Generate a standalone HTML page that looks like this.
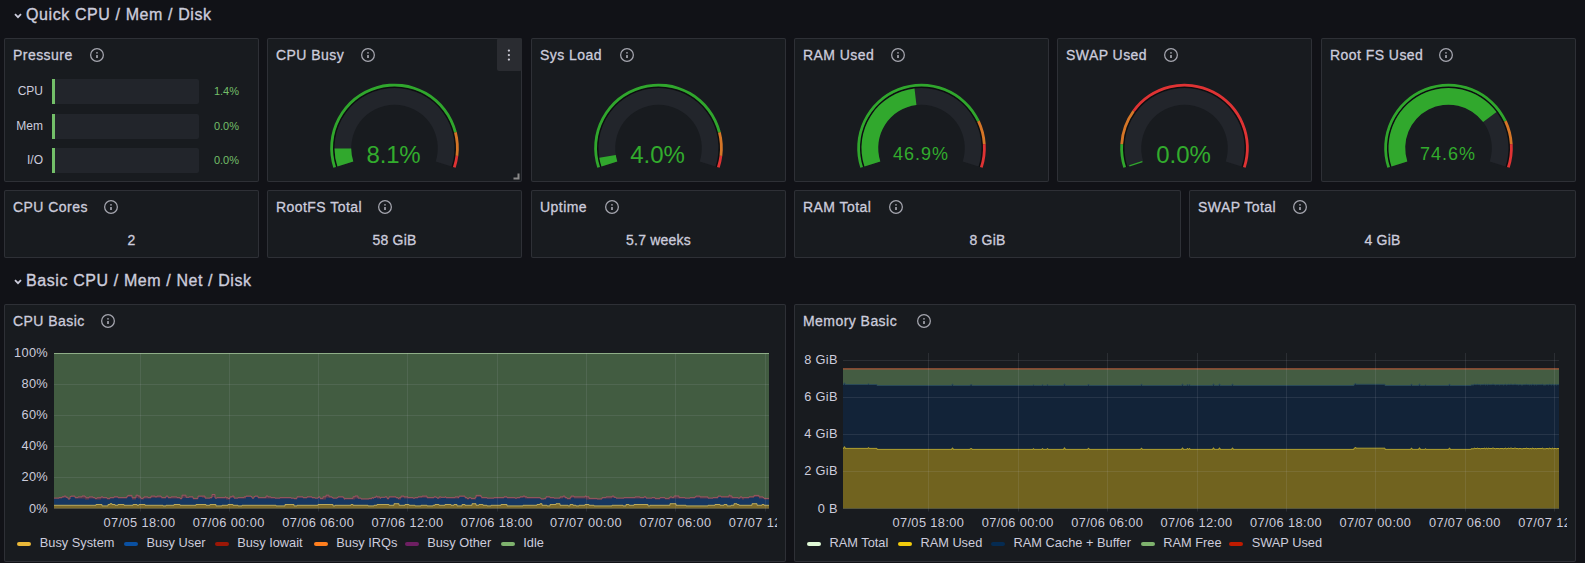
<!DOCTYPE html><html><head><meta charset="utf-8"><style>html,body{margin:0;padding:0;}
body{width:1585px;height:563px;overflow:hidden;background:#111217;position:relative;font-family:"Liberation Sans", sans-serif;color:#ccccdc;}
.abs{position:absolute;}
.pn{position:absolute;box-sizing:border-box;background:#181b1f;border:1px solid rgba(204,204,220,0.12);border-radius:2px;}
.tt{position:absolute;font-size:14px;line-height:18px;white-space:nowrap;color:#ccccdc;-webkit-text-stroke:0.3px #ccccdc;letter-spacing:0.45px;}
.ic{position:absolute;}
.xl{letter-spacing:0.4px;}
.rowt{position:absolute;font-size:16px;line-height:20px;white-space:nowrap;color:#ccccdc;-webkit-text-stroke:0.35px #ccccdc;letter-spacing:0.6px;}
.gv{position:absolute;width:120px;text-align:center;font-size:24px;line-height:24px;height:24px;color:rgb(50,172,45);}
.sv{position:absolute;text-align:center;font-size:14px;line-height:18px;color:#ccccdc;-webkit-text-stroke:0.3px #ccccdc;letter-spacing:0.2px;}
.lb{position:absolute;font-size:12.8px;line-height:14px;white-space:nowrap;color:#ccccdc;}
</style></head><body><svg class="abs" style="left:13px;top:12px" width="10" height="8" viewBox="0 0 10 8"><path d="M2,2.2 L5,5.2 L8,2.2" fill="none" stroke="#ccccdc" stroke-width="1.8"/></svg><div class="rowt" style="left:26px;top:5px">Quick CPU / Mem / Disk</div><svg class="abs" style="left:13px;top:278px" width="10" height="8" viewBox="0 0 10 8"><path d="M2,2.2 L5,5.2 L8,2.2" fill="none" stroke="#ccccdc" stroke-width="1.8"/></svg><div class="rowt" style="left:26px;top:271px">Basic CPU / Mem / Net / Disk</div><div class="pn" style="left:4px;top:38px;width:255px;height:144px"></div><div class="pn" style="left:267px;top:38px;width:255px;height:144px"></div><div class="pn" style="left:531px;top:38px;width:255px;height:144px"></div><div class="pn" style="left:794px;top:38px;width:255px;height:144px"></div><div class="pn" style="left:1057px;top:38px;width:255px;height:144px"></div><div class="pn" style="left:1321px;top:38px;width:255px;height:144px"></div><div class="tt" style="left:13px;top:46px">Pressure</div><svg class="ic" style="left:88.9px;top:47px" width="16" height="16" viewBox="0 0 16 16"><circle cx="8" cy="8" r="6.35" fill="none" stroke="#a5a6af" stroke-width="1.25"/><rect x="7.15" y="8.0" width="1.7" height="3.0" rx="0.5" fill="#a5a6af"/><circle cx="8" cy="5.8" r="0.85" fill="#a5a6af"/></svg><div class="tt" style="left:276px;top:46px">CPU Busy</div><svg class="ic" style="left:360.1px;top:47px" width="16" height="16" viewBox="0 0 16 16"><circle cx="8" cy="8" r="6.35" fill="none" stroke="#a5a6af" stroke-width="1.25"/><rect x="7.15" y="8.0" width="1.7" height="3.0" rx="0.5" fill="#a5a6af"/><circle cx="8" cy="5.8" r="0.85" fill="#a5a6af"/></svg><div class="tt" style="left:540px;top:46px">Sys Load</div><svg class="ic" style="left:619px;top:47px" width="16" height="16" viewBox="0 0 16 16"><circle cx="8" cy="8" r="6.35" fill="none" stroke="#a5a6af" stroke-width="1.25"/><rect x="7.15" y="8.0" width="1.7" height="3.0" rx="0.5" fill="#a5a6af"/><circle cx="8" cy="5.8" r="0.85" fill="#a5a6af"/></svg><div class="tt" style="left:803px;top:46px">RAM Used</div><svg class="ic" style="left:890px;top:47px" width="16" height="16" viewBox="0 0 16 16"><circle cx="8" cy="8" r="6.35" fill="none" stroke="#a5a6af" stroke-width="1.25"/><rect x="7.15" y="8.0" width="1.7" height="3.0" rx="0.5" fill="#a5a6af"/><circle cx="8" cy="5.8" r="0.85" fill="#a5a6af"/></svg><div class="tt" style="left:1066px;top:46px">SWAP Used</div><svg class="ic" style="left:1162.5px;top:47px" width="16" height="16" viewBox="0 0 16 16"><circle cx="8" cy="8" r="6.35" fill="none" stroke="#a5a6af" stroke-width="1.25"/><rect x="7.15" y="8.0" width="1.7" height="3.0" rx="0.5" fill="#a5a6af"/><circle cx="8" cy="5.8" r="0.85" fill="#a5a6af"/></svg><div class="tt" style="left:1330px;top:46px">Root FS Used</div><svg class="ic" style="left:1437.5px;top:47px" width="16" height="16" viewBox="0 0 16 16"><circle cx="8" cy="8" r="6.35" fill="none" stroke="#a5a6af" stroke-width="1.25"/><rect x="7.15" y="8.0" width="1.7" height="3.0" rx="0.5" fill="#a5a6af"/><circle cx="8" cy="5.8" r="0.85" fill="#a5a6af"/></svg><div class="abs" style="left:52px;top:79px;width:147px;height:25px;background:#22252b;border-radius:2px"></div><div class="abs" style="left:52px;top:79px;width:3px;height:25px;background:#73bf69"></div><div class="lb" style="left:0;width:43px;text-align:right;top:84px;font-size:12px">CPU</div><div class="lb" style="left:180px;width:59px;text-align:right;top:84px;font-size:11px;color:#73bf69">1.4%</div><div class="abs" style="left:52px;top:114px;width:147px;height:25px;background:#22252b;border-radius:2px"></div><div class="abs" style="left:52px;top:114px;width:3px;height:25px;background:#73bf69"></div><div class="lb" style="left:0;width:43px;text-align:right;top:119px;font-size:12px">Mem</div><div class="lb" style="left:180px;width:59px;text-align:right;top:119px;font-size:11px;color:#73bf69">0.0%</div><div class="abs" style="left:52px;top:148px;width:147px;height:25px;background:#22252b;border-radius:2px"></div><div class="abs" style="left:52px;top:148px;width:3px;height:25px;background:#73bf69"></div><div class="lb" style="left:0;width:43px;text-align:right;top:153px;font-size:12px">I/O</div><div class="lb" style="left:180px;width:59px;text-align:right;top:153px;font-size:11px;color:#73bf69">0.0%</div><svg class="abs" style="left:0;top:0" width="1585" height="563"><path d="M335.82,167.07 A61.7,61.7 0 1 1 453.18,167.07 L451.37,166.48 A59.8,59.8 0 1 0 337.63,166.48 Z" fill="#0d0e10"/><path d="M337.44,166.54 A60.0,60.0 0 1 1 451.56,166.54 L435.68,161.38 A43.3,43.3 0 1 0 353.32,161.38 Z" fill="#22252b"/><path d="M337.44,166.54 A60.0,60.0 0 0 1 334.50,148.53 L351.20,148.38 A43.3,43.3 0 0 0 353.32,161.38 Z" fill="rgba(50,172,45,0.97)"/><path d="M333.35,167.87 A64.3,64.3 0 1 1 456.78,132.01 L454.07,132.71 A61.5,61.5 0 1 0 336.01,167.00 Z" fill="rgba(50,172,45,0.97)"/><path d="M456.78,132.01 A64.3,64.3 0 0 1 458.29,156.06 L455.52,155.71 A61.5,61.5 0 0 0 454.07,132.71 Z" fill="rgba(237,129,40,0.89)"/><path d="M458.29,156.06 A64.3,64.3 0 0 1 455.65,167.87 L452.99,167.00 A61.5,61.5 0 0 0 455.52,155.71 Z" fill="rgba(245,54,54,0.9)"/></svg><div class="gv" style="left:333.5px;top:143px;letter-spacing:-0.2px;">8.1%</div><svg class="abs" style="left:0;top:0" width="1585" height="563"><path d="M599.82,167.07 A61.7,61.7 0 1 1 717.18,167.07 L715.37,166.48 A59.8,59.8 0 1 0 601.63,166.48 Z" fill="#0d0e10"/><path d="M601.44,166.54 A60.0,60.0 0 1 1 715.56,166.54 L699.68,161.38 A43.3,43.3 0 1 0 617.32,161.38 Z" fill="#22252b"/><path d="M601.44,166.54 A60.0,60.0 0 0 1 599.30,157.76 L615.78,155.04 A43.3,43.3 0 0 0 617.32,161.38 Z" fill="rgba(50,172,45,0.97)"/><path d="M597.35,167.87 A64.3,64.3 0 1 1 720.78,132.01 L718.07,132.71 A61.5,61.5 0 1 0 600.01,167.00 Z" fill="rgba(50,172,45,0.97)"/><path d="M720.78,132.01 A64.3,64.3 0 0 1 722.29,156.06 L719.52,155.71 A61.5,61.5 0 0 0 718.07,132.71 Z" fill="rgba(237,129,40,0.89)"/><path d="M722.29,156.06 A64.3,64.3 0 0 1 719.65,167.87 L716.99,167.00 A61.5,61.5 0 0 0 719.52,155.71 Z" fill="rgba(245,54,54,0.9)"/></svg><div class="gv" style="left:597.5px;top:143px;">4.0%</div><svg class="abs" style="left:0;top:0" width="1585" height="563"><path d="M862.82,167.07 A61.7,61.7 0 1 1 980.18,167.07 L978.37,166.48 A59.8,59.8 0 1 0 864.63,166.48 Z" fill="#0d0e10"/><path d="M864.44,166.54 A60.0,60.0 0 1 1 978.56,166.54 L962.68,161.38 A43.3,43.3 0 1 0 880.32,161.38 Z" fill="#22252b"/><path d="M864.44,166.54 A60.0,60.0 0 0 1 914.50,88.41 L916.45,105.00 A43.3,43.3 0 0 0 880.32,161.38 Z" fill="rgba(50,172,45,0.97)"/><path d="M860.35,167.87 A64.3,64.3 0 0 1 979.68,120.62 L977.15,121.81 A61.5,61.5 0 0 0 863.01,167.00 Z" fill="rgba(50,172,45,0.97)"/><path d="M979.68,120.62 A64.3,64.3 0 0 1 985.67,143.96 L982.88,144.14 A61.5,61.5 0 0 0 977.15,121.81 Z" fill="rgba(237,129,40,0.89)"/><path d="M985.67,143.96 A64.3,64.3 0 0 1 982.65,167.87 L979.99,167.00 A61.5,61.5 0 0 0 982.88,144.14 Z" fill="rgba(245,54,54,0.9)"/></svg><div class="gv" style="left:861.0px;top:142px;font-size:18px;letter-spacing:1.0px">46.9%</div><svg class="abs" style="left:0;top:0" width="1585" height="563"><path d="M1125.82,167.07 A61.7,61.7 0 1 1 1243.18,167.07 L1241.37,166.48 A59.8,59.8 0 1 0 1127.63,166.48 Z" fill="#0d0e10"/><path d="M1127.44,166.54 A60.0,60.0 0 1 1 1241.56,166.54 L1225.68,161.38 A43.3,43.3 0 1 0 1143.32,161.38 Z" fill="#22252b"/><line x1="1142.37" y1="161.69" x2="1129.34" y2="165.92" stroke="rgba(50,172,45,0.97)" stroke-width="1.3"/><path d="M1123.35,167.87 A64.3,64.3 0 0 1 1120.33,143.96 L1123.12,144.14 A61.5,61.5 0 0 0 1126.01,167.00 Z" fill="rgba(50,172,45,0.97)"/><path d="M1120.33,143.96 A64.3,64.3 0 0 1 1132.48,110.21 L1134.75,111.85 A61.5,61.5 0 0 0 1123.12,144.14 Z" fill="rgba(237,129,40,0.89)"/><path d="M1132.48,110.21 A64.3,64.3 0 0 1 1245.65,167.87 L1242.99,167.00 A61.5,61.5 0 0 0 1134.75,111.85 Z" fill="rgba(245,54,54,0.9)"/></svg><div class="gv" style="left:1123.5px;top:143px;">0.0%</div><svg class="abs" style="left:0;top:0" width="1585" height="563"><path d="M1389.82,167.07 A61.7,61.7 0 1 1 1507.18,167.07 L1505.37,166.48 A59.8,59.8 0 1 0 1391.63,166.48 Z" fill="#0d0e10"/><path d="M1391.44,166.54 A60.0,60.0 0 1 1 1505.56,166.54 L1489.68,161.38 A43.3,43.3 0 1 0 1407.32,161.38 Z" fill="#22252b"/><path d="M1391.44,166.54 A60.0,60.0 0 0 1 1496.50,112.00 L1483.14,122.02 A43.3,43.3 0 0 0 1407.32,161.38 Z" fill="rgba(50,172,45,0.97)"/><path d="M1387.35,167.87 A64.3,64.3 0 0 1 1506.68,120.62 L1504.15,121.81 A61.5,61.5 0 0 0 1390.01,167.00 Z" fill="rgba(50,172,45,0.97)"/><path d="M1506.68,120.62 A64.3,64.3 0 0 1 1512.67,143.96 L1509.88,144.14 A61.5,61.5 0 0 0 1504.15,121.81 Z" fill="rgba(237,129,40,0.89)"/><path d="M1512.67,143.96 A64.3,64.3 0 0 1 1509.65,167.87 L1506.99,167.00 A61.5,61.5 0 0 0 1509.88,144.14 Z" fill="rgba(245,54,54,0.9)"/></svg><div class="gv" style="left:1388.0px;top:142px;font-size:18px;letter-spacing:1.0px">74.6%</div><div class="abs" style="left:497px;top:38px;width:25px;height:33px;background:#2a2c31;border-radius:2px"></div><svg class="abs" style="left:0;top:0" width="1585" height="80"><g fill="#c8c8d2"><circle cx="508.9" cy="50.6" r="1.15"/><circle cx="508.9" cy="55.1" r="1.15"/><circle cx="508.9" cy="59.6" r="1.15"/></g></svg><svg class="abs" style="left:512px;top:172px" width="8" height="8"><path d="M6.5,1.5 V6.5 H1.5" fill="none" stroke="#8a8a8a" stroke-width="2"/></svg><div class="pn" style="left:4px;top:190px;width:255px;height:68px"></div><div class="tt" style="left:13px;top:198px">CPU Cores</div><svg class="ic" style="left:102.9px;top:199px" width="16" height="16" viewBox="0 0 16 16"><circle cx="8" cy="8" r="6.35" fill="none" stroke="#a5a6af" stroke-width="1.25"/><rect x="7.15" y="8.0" width="1.7" height="3.0" rx="0.5" fill="#a5a6af"/><circle cx="8" cy="5.8" r="0.85" fill="#a5a6af"/></svg><div class="sv" style="left:4px;width:255px;top:231px">2</div><div class="pn" style="left:267px;top:190px;width:255px;height:68px"></div><div class="tt" style="left:276px;top:198px">RootFS Total</div><svg class="ic" style="left:377px;top:199px" width="16" height="16" viewBox="0 0 16 16"><circle cx="8" cy="8" r="6.35" fill="none" stroke="#a5a6af" stroke-width="1.25"/><rect x="7.15" y="8.0" width="1.7" height="3.0" rx="0.5" fill="#a5a6af"/><circle cx="8" cy="5.8" r="0.85" fill="#a5a6af"/></svg><div class="sv" style="left:267px;width:255px;top:231px">58 GiB</div><div class="pn" style="left:531px;top:190px;width:255px;height:68px"></div><div class="tt" style="left:540px;top:198px">Uptime</div><svg class="ic" style="left:604px;top:199px" width="16" height="16" viewBox="0 0 16 16"><circle cx="8" cy="8" r="6.35" fill="none" stroke="#a5a6af" stroke-width="1.25"/><rect x="7.15" y="8.0" width="1.7" height="3.0" rx="0.5" fill="#a5a6af"/><circle cx="8" cy="5.8" r="0.85" fill="#a5a6af"/></svg><div class="sv" style="left:531px;width:255px;top:231px">5.7 weeks</div><div class="pn" style="left:794px;top:190px;width:387px;height:68px"></div><div class="tt" style="left:803px;top:198px">RAM Total</div><svg class="ic" style="left:888px;top:199px" width="16" height="16" viewBox="0 0 16 16"><circle cx="8" cy="8" r="6.35" fill="none" stroke="#a5a6af" stroke-width="1.25"/><rect x="7.15" y="8.0" width="1.7" height="3.0" rx="0.5" fill="#a5a6af"/><circle cx="8" cy="5.8" r="0.85" fill="#a5a6af"/></svg><div class="sv" style="left:794px;width:387px;top:231px">8 GiB</div><div class="pn" style="left:1189px;top:190px;width:387px;height:68px"></div><div class="tt" style="left:1198px;top:198px">SWAP Total</div><svg class="ic" style="left:1292px;top:199px" width="16" height="16" viewBox="0 0 16 16"><circle cx="8" cy="8" r="6.35" fill="none" stroke="#a5a6af" stroke-width="1.25"/><rect x="7.15" y="8.0" width="1.7" height="3.0" rx="0.5" fill="#a5a6af"/><circle cx="8" cy="5.8" r="0.85" fill="#a5a6af"/></svg><div class="sv" style="left:1189px;width:387px;top:231px">4 GiB</div><div class="pn" style="left:4px;top:304px;width:782px;height:258px"></div><div class="pn" style="left:794px;top:304px;width:782px;height:258px"></div><div class="tt" style="left:13px;top:312px">CPU Basic</div><svg class="ic" style="left:99.5px;top:313px" width="16" height="16" viewBox="0 0 16 16"><circle cx="8" cy="8" r="6.35" fill="none" stroke="#a5a6af" stroke-width="1.25"/><rect x="7.15" y="8.0" width="1.7" height="3.0" rx="0.5" fill="#a5a6af"/><circle cx="8" cy="5.8" r="0.85" fill="#a5a6af"/></svg><div class="tt" style="left:803px;top:312px">Memory Basic</div><svg class="ic" style="left:915.5px;top:313px" width="16" height="16" viewBox="0 0 16 16"><circle cx="8" cy="8" r="6.35" fill="none" stroke="#a5a6af" stroke-width="1.25"/><rect x="7.15" y="8.0" width="1.7" height="3.0" rx="0.5" fill="#a5a6af"/><circle cx="8" cy="5.8" r="0.85" fill="#a5a6af"/></svg><svg class="abs" style="left:0;top:0" width="1585" height="563"><path d="M54.0,353.5 L769.0,353.5 L769.0,508.5 L54.0,508.5 Z" fill="#425c41"/><path d="M54,498.10 55,498.10 55,498.10 56,498.10 56,498.10 57,498.10 57,498.10 58,498.10 58,498.10 59,498.10 59,497.60 60,497.60 60,497.60 61,497.60 61,497.60 62,497.60 62,496.80 63,496.80 63,496.80 64,496.80 64,496.10 65,496.10 65,496.10 66,496.10 66,497.30 67,497.30 67,497.30 68,497.30 68,498.90 69,498.90 69,498.90 70,498.90 70,496.60 71,496.60 71,496.10 72,496.10 72,496.10 73,496.10 73,496.10 74,496.10 74,496.10 75,496.10 75,497.60 76,497.60 76,497.60 77,497.60 77,497.60 78,497.60 78,496.90 79,496.90 79,496.90 80,496.90 80,496.90 81,496.90 81,496.90 82,496.90 82,496.00 83,496.00 83,496.00 84,496.00 84,496.00 85,496.00 85,496.80 86,496.80 86,497.70 87,497.70 87,497.70 88,497.70 88,497.70 89,497.70 89,496.90 90,496.90 90,496.90 91,496.90 91,496.90 92,496.90 92,496.90 93,496.90 93,497.60 94,497.60 94,497.60 95,497.60 95,498.40 96,498.40 96,498.40 97,498.40 97,497.70 98,497.70 98,497.70 99,497.70 99,497.70 100,497.70 100,497.70 101,497.70 101,496.90 102,496.90 102,496.90 103,496.90 103,497.60 104,497.60 104,497.60 105,497.60 105,497.60 106,497.60 106,497.60 107,497.60 107,498.40 108,498.40 108,498.40 109,498.40 109,498.40 110,498.40 110,497.60 111,497.60 111,497.60 112,497.60 112,497.60 113,497.60 113,497.60 114,497.60 114,496.80 115,496.80 115,496.80 116,496.80 116,496.80 117,496.80 117,496.80 118,496.80 118,497.60 119,497.60 119,497.60 120,497.60 120,497.60 121,497.60 121,497.60 122,497.60 122,497.60 123,497.60 123,497.60 124,497.60 124,497.60 125,497.60 125,497.60 126,497.60 126,497.60 127,497.60 127,496.10 128,496.10 128,495.40 129,495.40 129,495.40 130,495.40 130,495.40 131,495.40 131,495.40 132,495.40 132,497.70 133,497.70 133,497.70 134,497.70 134,497.70 135,497.70 135,497.70 136,497.70 136,495.20 137,495.20 137,495.20 138,495.20 138,496.00 139,496.00 139,496.00 140,496.00 140,497.60 141,497.60 141,498.40 142,498.40 142,498.40 143,498.40 143,497.70 144,497.70 144,496.90 145,496.90 145,496.90 146,496.90 146,496.90 147,496.90 147,496.90 148,496.90 148,497.60 149,497.60 149,497.60 150,497.60 150,497.60 151,497.60 151,496.10 152,496.10 152,496.10 153,496.10 153,496.10 154,496.10 154,496.10 155,496.10 155,496.80 156,496.80 156,496.80 157,496.80 157,496.10 158,496.10 158,496.10 159,496.10 159,496.10 160,496.10 160,496.10 161,496.10 161,496.90 162,496.90 162,497.60 163,497.60 163,497.60 164,497.60 164,497.60 165,497.60 165,497.60 166,497.60 166,496.10 167,496.10 167,496.10 168,496.10 168,497.60 169,497.60 169,497.60 170,497.60 170,497.60 171,497.60 171,496.90 172,496.90 172,496.90 173,496.90 173,496.90 174,496.90 174,496.90 175,496.90 175,496.90 176,496.90 176,496.90 177,496.90 177,497.60 178,497.60 178,497.60 179,497.60 179,497.60 180,497.60 180,498.40 181,498.40 181,498.40 182,498.40 182,495.20 183,495.20 183,495.20 184,495.20 184,495.20 185,495.20 185,495.20 186,495.20 186,497.30 187,497.30 187,497.30 188,497.30 188,497.30 189,497.30 189,496.80 190,496.80 190,496.80 191,496.80 191,496.80 192,496.80 192,496.80 193,496.80 193,498.40 194,498.40 194,498.40 195,498.40 195,498.40 196,498.40 196,498.40 197,498.40 197,498.40 198,498.40 198,496.10 199,496.10 199,496.10 200,496.10 200,496.10 201,496.10 201,496.10 202,496.10 202,496.10 203,496.10 203,496.10 204,496.10 204,496.10 205,496.10 205,498.10 206,498.10 206,498.10 207,498.10 207,498.10 208,498.10 208,498.10 209,498.10 209,498.10 210,498.10 210,497.60 211,497.60 211,497.60 212,497.60 212,494.50 213,494.50 213,494.50 214,494.50 214,494.50 215,494.50 215,498.10 216,498.10 216,498.10 217,498.10 217,497.60 218,497.60 218,497.60 219,497.60 219,497.60 220,497.60 220,497.60 221,497.60 221,497.60 222,497.60 222,497.60 223,497.60 223,497.60 224,497.60 224,497.60 225,497.60 225,496.90 226,496.90 226,497.70 227,497.70 227,497.70 228,497.70 228,498.40 229,498.40 229,498.40 230,498.40 230,496.80 231,496.80 231,496.80 232,496.80 232,496.10 233,496.10 233,496.10 234,496.10 234,498.10 235,498.10 235,498.10 236,498.10 236,498.10 237,498.10 237,498.10 238,498.10 238,497.60 239,497.60 239,497.60 240,497.60 240,497.60 241,497.60 241,497.60 242,497.60 242,497.60 243,497.60 243,497.60 244,497.60 244,496.90 245,496.90 245,496.90 246,496.90 246,496.10 247,496.10 247,496.10 248,496.10 248,496.10 249,496.10 249,496.10 250,496.10 250,496.10 251,496.10 251,496.60 252,496.60 252,498.10 253,498.10 253,498.10 254,498.10 254,496.60 255,496.60 255,496.10 256,496.10 256,496.10 257,496.10 257,496.10 258,496.10 258,497.60 259,497.60 259,497.60 260,497.60 260,497.60 261,497.60 261,497.60 262,497.60 262,497.60 263,497.60 263,497.60 264,497.60 264,497.60 265,497.60 265,497.60 266,497.60 266,496.00 267,496.00 267,496.00 268,496.00 268,496.90 269,496.90 269,496.90 270,496.90 270,496.90 271,496.90 271,497.60 272,497.60 272,497.60 273,497.60 273,497.60 274,497.60 274,497.60 275,497.60 275,498.10 276,498.10 276,498.10 277,498.10 277,498.10 278,498.10 278,498.10 279,498.10 279,498.10 280,498.10 280,497.60 281,497.60 281,497.60 282,497.60 282,497.60 283,497.60 283,497.60 284,497.60 284,497.60 285,497.60 285,497.60 286,497.60 286,497.60 287,497.60 287,497.60 288,497.60 288,497.60 289,497.60 289,497.60 290,497.60 290,497.60 291,497.60 291,498.10 292,498.10 292,498.10 293,498.10 293,498.10 294,498.10 294,498.40 295,498.40 295,498.40 296,498.40 296,498.40 297,498.40 297,496.80 298,496.80 298,496.80 299,496.80 299,496.80 300,496.80 300,496.80 301,496.80 301,496.80 302,496.80 302,496.80 303,496.80 303,497.60 304,497.60 304,497.60 305,497.60 305,497.60 306,497.60 306,497.60 307,497.60 307,496.80 308,496.80 308,496.80 309,496.80 309,496.80 310,496.80 310,496.80 311,496.80 311,496.80 312,496.80 312,497.60 313,497.60 313,497.60 314,497.60 314,497.60 315,497.60 315,498.10 316,498.10 316,498.10 317,498.10 317,498.10 318,498.10 318,497.30 319,497.30 319,496.80 320,496.80 320,498.40 321,498.40 321,498.40 322,498.40 322,498.40 323,498.40 323,496.80 324,496.80 324,496.80 325,496.80 325,496.80 326,496.80 326,495.20 327,495.20 327,495.20 328,495.20 328,495.20 329,495.20 329,496.80 330,496.80 330,496.80 331,496.80 331,496.80 332,496.80 332,497.60 333,497.60 333,498.10 334,498.10 334,498.10 335,498.10 335,498.10 336,498.10 336,498.10 337,498.10 337,497.60 338,497.60 338,496.80 339,496.80 339,496.80 340,496.80 340,496.80 341,496.80 341,496.80 342,496.80 342,496.80 343,496.80 343,497.30 344,497.30 344,498.90 345,498.90 345,498.40 346,498.40 346,498.40 347,498.40 347,498.40 348,498.40 348,498.40 349,498.40 349,498.40 350,498.40 350,498.40 351,498.40 351,498.40 352,498.40 352,498.40 353,498.40 353,496.80 354,496.80 354,496.80 355,496.80 355,496.00 356,496.00 356,496.00 357,496.00 357,496.00 358,496.00 358,498.10 359,498.10 359,498.10 360,498.10 360,498.10 361,498.10 361,498.90 362,498.90 362,498.90 363,498.90 363,498.90 364,498.90 364,498.90 365,498.90 365,498.90 366,498.90 366,498.90 367,498.90 367,498.90 368,498.90 368,498.90 369,498.90 369,498.40 370,498.40 370,498.40 371,498.40 371,498.40 372,498.40 372,497.60 373,497.60 373,498.10 374,498.10 374,497.30 375,497.30 375,497.30 376,497.30 376,496.10 377,496.10 377,496.90 378,496.90 378,496.90 379,496.90 379,496.90 380,496.90 380,498.10 381,498.10 381,497.30 382,497.30 382,497.30 383,497.30 383,497.30 384,497.30 384,497.30 385,497.30 385,496.80 386,496.80 386,496.80 387,496.80 387,498.40 388,498.40 388,498.40 389,498.40 389,496.80 390,496.80 390,496.80 391,496.80 391,496.80 392,496.80 392,496.80 393,496.80 393,496.80 394,496.80 394,496.80 395,496.80 395,496.80 396,496.80 396,497.60 397,497.60 397,497.60 398,497.60 398,498.40 399,498.40 399,497.70 400,497.70 400,497.70 401,497.70 401,496.10 402,496.10 402,496.10 403,496.10 403,496.10 404,496.10 404,496.90 405,496.90 405,496.90 406,496.90 406,496.90 407,496.90 407,496.90 408,496.90 408,497.60 409,497.60 409,497.60 410,497.60 410,497.60 411,497.60 411,497.60 412,497.60 412,497.60 413,497.60 413,498.10 414,498.10 414,498.10 415,498.10 415,497.60 416,497.60 416,497.60 417,497.60 417,497.60 418,497.60 418,496.80 419,496.80 419,496.80 420,496.80 420,496.80 421,496.80 421,496.80 422,496.80 422,496.10 423,496.10 423,496.10 424,496.10 424,496.10 425,496.10 425,496.10 426,496.10 426,496.10 427,496.10 427,497.60 428,497.60 428,497.60 429,497.60 429,497.60 430,497.60 430,497.60 431,497.60 431,497.60 432,497.60 432,497.60 433,497.60 433,497.60 434,497.60 434,496.80 435,496.80 435,496.80 436,496.80 436,497.30 437,497.30 437,498.10 438,498.10 438,498.10 439,498.10 439,496.90 440,496.90 440,496.90 441,496.90 441,497.30 442,497.30 442,497.30 443,497.30 443,497.30 444,497.30 444,497.30 445,497.30 445,496.80 446,496.80 446,497.60 447,497.60 447,497.60 448,497.60 448,497.60 449,497.60 449,497.60 450,497.60 450,497.60 451,497.60 451,497.60 452,497.60 452,497.60 453,497.60 453,497.60 454,497.60 454,497.60 455,497.60 455,496.90 456,496.90 456,496.90 457,496.90 457,496.90 458,496.90 458,497.60 459,497.60 459,496.10 460,496.10 460,496.10 461,496.10 461,496.10 462,496.10 462,496.10 463,496.10 463,496.10 464,496.10 464,496.10 465,496.10 465,497.60 466,497.60 466,497.60 467,497.60 467,498.40 468,498.40 468,498.40 469,498.40 469,497.60 470,497.60 470,497.60 471,497.60 471,498.40 472,498.40 472,498.40 473,498.40 473,498.40 474,498.40 474,498.40 475,498.40 475,497.70 476,497.70 476,495.40 477,495.40 477,495.40 478,495.40 478,495.40 479,495.40 479,495.40 480,495.40 480,495.40 481,495.40 481,496.90 482,496.90 482,497.60 483,497.60 483,497.60 484,497.60 484,497.60 485,497.60 485,497.60 486,497.60 486,497.60 487,497.60 487,498.10 488,498.10 488,498.10 489,498.10 489,498.10 490,498.10 490,498.10 491,498.10 491,498.10 492,498.10 492,498.10 493,498.10 493,498.10 494,498.10 494,497.60 495,497.60 495,497.60 496,497.60 496,497.60 497,497.60 497,497.60 498,497.60 498,497.60 499,497.60 499,497.60 500,497.60 500,497.60 501,497.60 501,497.60 502,497.60 502,497.60 503,497.60 503,497.60 504,497.60 504,496.80 505,496.80 505,496.80 506,496.80 506,496.80 507,496.80 507,497.60 508,497.60 508,497.60 509,497.60 509,497.60 510,497.60 510,497.60 511,497.60 511,497.60 512,497.60 512,497.60 513,497.60 513,497.60 514,497.60 514,497.60 515,497.60 515,498.10 516,498.10 516,498.10 517,498.10 517,497.60 518,497.60 518,497.60 519,497.60 519,497.60 520,497.60 520,496.80 521,496.80 521,496.80 522,496.80 522,496.80 523,496.80 523,496.10 524,496.10 524,496.10 525,496.10 525,496.90 526,496.90 526,496.90 527,496.90 527,497.60 528,497.60 528,497.60 529,497.60 529,497.60 530,497.60 530,497.60 531,497.60 531,497.60 532,497.60 532,497.60 533,497.60 533,497.60 534,497.60 534,497.60 535,497.60 535,497.60 536,497.60 536,497.60 537,497.60 537,497.60 538,497.60 538,497.60 539,497.60 539,497.60 540,497.60 540,498.10 541,498.10 541,498.90 542,498.90 542,498.90 543,498.90 543,498.90 544,498.90 544,498.40 545,498.40 545,498.40 546,498.40 546,496.80 547,496.80 547,496.80 548,496.80 548,496.80 549,496.80 549,496.80 550,496.80 550,497.60 551,497.60 551,497.60 552,497.60 552,497.60 553,497.60 553,497.60 554,497.60 554,498.10 555,498.10 555,498.10 556,498.10 556,498.10 557,498.10 557,498.10 558,498.10 558,498.10 559,498.10 559,498.10 560,498.10 560,496.90 561,496.90 561,496.90 562,496.90 562,496.90 563,496.90 563,496.10 564,496.10 564,496.10 565,496.10 565,497.60 566,497.60 566,497.60 567,497.60 567,498.40 568,498.40 568,498.40 569,498.40 569,498.40 570,498.40 570,497.70 571,497.70 571,496.10 572,496.10 572,496.10 573,496.10 573,496.10 574,496.10 574,496.90 575,496.90 575,496.90 576,496.90 576,496.90 577,496.90 577,496.90 578,496.90 578,496.90 579,496.90 579,496.90 580,496.90 580,496.90 581,496.90 581,496.90 582,496.90 582,496.90 583,496.90 583,496.90 584,496.90 584,496.90 585,496.90 585,496.00 586,496.00 586,496.80 587,496.80 587,496.80 588,496.80 588,496.80 589,496.80 589,498.40 590,498.40 590,498.40 591,498.40 591,498.40 592,498.40 592,498.40 593,498.40 593,498.40 594,498.40 594,498.40 595,498.40 595,498.40 596,498.40 596,498.40 597,498.40 597,498.90 598,498.90 598,498.90 599,498.90 599,498.90 600,498.90 600,498.90 601,498.90 601,498.90 602,498.90 602,497.60 603,497.60 603,497.60 604,497.60 604,497.60 605,497.60 605,497.60 606,497.60 606,496.90 607,496.90 607,496.90 608,496.90 608,496.90 609,496.90 609,496.90 610,496.90 610,496.90 611,496.90 611,496.90 612,496.90 612,496.10 613,496.10 613,496.10 614,496.10 614,497.30 615,497.30 615,497.30 616,497.30 616,498.10 617,498.10 617,498.10 618,498.10 618,498.10 619,498.10 619,498.10 620,498.10 620,498.10 621,498.10 621,498.10 622,498.10 622,498.10 623,498.10 623,498.10 624,498.10 624,497.60 625,497.60 625,497.60 626,497.60 626,497.60 627,497.60 627,497.60 628,497.60 628,497.60 629,497.60 629,497.60 630,497.60 630,497.60 631,497.60 631,497.60 632,497.60 632,497.60 633,497.60 633,497.60 634,497.60 634,497.60 635,497.60 635,496.90 636,496.90 636,496.90 637,496.90 637,496.90 638,496.90 638,496.90 639,496.90 639,496.90 640,496.90 640,497.60 641,497.60 641,497.60 642,497.60 642,497.60 643,497.60 643,497.60 644,497.60 644,496.80 645,496.80 645,496.80 646,496.80 646,498.10 647,498.10 647,498.10 648,498.10 648,498.10 649,498.10 649,498.10 650,498.10 650,498.10 651,498.10 651,498.10 652,498.10 652,497.60 653,497.60 653,497.60 654,497.60 654,497.60 655,497.60 655,498.40 656,498.40 656,498.40 657,498.40 657,498.40 658,498.40 658,498.40 659,498.40 659,498.40 660,498.40 660,497.60 661,497.60 661,497.60 662,497.60 662,497.60 663,497.60 663,497.60 664,497.60 664,497.60 665,497.60 665,498.40 666,498.40 666,498.40 667,498.40 667,498.40 668,498.40 668,498.40 669,498.40 669,497.70 670,497.70 670,496.90 671,496.90 671,496.90 672,496.90 672,497.60 673,497.60 673,497.60 674,497.60 674,496.00 675,496.00 675,496.00 676,496.00 676,496.00 677,496.00 677,496.00 678,496.00 678,496.00 679,496.00 679,497.60 680,497.60 680,497.60 681,497.60 681,497.60 682,497.60 682,497.60 683,497.60 683,497.60 684,497.60 684,497.60 685,497.60 685,498.10 686,498.10 686,498.10 687,498.10 687,498.10 688,498.10 688,498.10 689,498.10 689,498.10 690,498.10 690,497.60 691,497.60 691,497.60 692,497.60 692,497.60 693,497.60 693,497.60 694,497.60 694,497.60 695,497.60 695,496.80 696,496.80 696,496.10 697,496.10 697,496.10 698,496.10 698,496.10 699,496.10 699,496.10 700,496.10 700,496.90 701,496.90 701,496.90 702,496.90 702,496.90 703,496.90 703,496.90 704,496.90 704,496.90 705,496.90 705,496.90 706,496.90 706,496.90 707,496.90 707,496.90 708,496.90 708,498.10 709,498.10 709,498.10 710,498.10 710,498.10 711,498.10 711,498.10 712,498.10 712,498.10 713,498.10 713,497.60 714,497.60 714,497.60 715,497.60 715,497.60 716,497.60 716,497.60 717,497.60 717,497.60 718,497.60 718,496.10 719,496.10 719,496.10 720,496.10 720,496.10 721,496.10 721,496.80 722,496.80 722,496.80 723,496.80 723,496.80 724,496.80 724,496.80 725,496.80 725,496.80 726,496.80 726,496.80 727,496.80 727,496.80 728,496.80 728,496.80 729,496.80 729,495.20 730,495.20 730,496.00 731,496.00 731,496.00 732,496.00 732,497.60 733,497.60 733,497.60 734,497.60 734,497.60 735,497.60 735,497.60 736,497.60 736,497.60 737,497.60 737,497.60 738,497.60 738,498.10 739,498.10 739,498.10 740,498.10 740,496.90 741,496.90 741,496.90 742,496.90 742,497.70 743,497.70 743,497.70 744,497.70 744,497.60 745,497.60 745,497.60 746,497.60 746,497.60 747,497.60 747,497.60 748,497.60 748,497.60 749,497.60 749,496.80 750,496.80 750,496.80 751,496.80 751,496.80 752,496.80 752,496.80 753,496.80 753,496.80 754,496.80 754,495.40 755,495.40 755,495.40 756,495.40 756,495.40 757,495.40 757,495.40 758,495.40 758,495.40 759,495.40 759,496.90 760,496.90 760,496.90 761,496.90 761,496.90 762,496.90 762,496.90 763,496.90 763,497.60 764,497.60 764,498.40 765,498.40 765,498.40 766,498.40 766,498.40 767,498.40 767,498.40 768,498.40 768,498.40 769,498.40 L769,508.50 54,508.50 Z" fill="#5a3a4a"/><path d="M54,498.60 55,498.60 55,498.60 56,498.60 56,498.60 57,498.60 57,498.60 58,498.60 58,498.60 59,498.60 59,498.60 60,498.60 60,498.60 61,498.60 61,498.60 62,498.60 62,497.80 63,497.80 63,497.80 64,497.80 64,497.80 65,497.80 65,497.80 66,497.80 66,497.80 67,497.80 67,497.80 68,497.80 68,499.40 69,499.40 69,499.40 70,499.40 70,497.10 71,497.10 71,497.10 72,497.10 72,497.10 73,497.10 73,497.10 74,497.10 74,497.10 75,497.10 75,498.60 76,498.60 76,498.60 77,498.60 77,498.60 78,498.60 78,498.60 79,498.60 79,498.60 80,498.60 80,498.60 81,498.60 81,498.60 82,498.60 82,498.60 83,498.60 83,498.60 84,498.60 84,498.60 85,498.60 85,499.40 86,499.40 86,499.40 87,499.40 87,499.40 88,499.40 88,499.40 89,499.40 89,498.60 90,498.60 90,498.60 91,498.60 91,498.60 92,498.60 92,498.60 93,498.60 93,498.60 94,498.60 94,498.60 95,498.60 95,499.40 96,499.40 96,499.40 97,499.40 97,499.40 98,499.40 98,499.40 99,499.40 99,499.40 100,499.40 100,499.40 101,499.40 101,498.60 102,498.60 102,498.60 103,498.60 103,498.60 104,498.60 104,498.60 105,498.60 105,498.60 106,498.60 106,498.60 107,498.60 107,499.40 108,499.40 108,499.40 109,499.40 109,499.40 110,499.40 110,498.60 111,498.60 111,498.60 112,498.60 112,498.60 113,498.60 113,498.60 114,498.60 114,497.80 115,497.80 115,497.80 116,497.80 116,497.80 117,497.80 117,497.80 118,497.80 118,498.60 119,498.60 119,498.60 120,498.60 120,498.60 121,498.60 121,498.60 122,498.60 122,498.60 123,498.60 123,498.60 124,498.60 124,498.60 125,498.60 125,498.60 126,498.60 126,498.60 127,498.60 127,497.10 128,497.10 128,497.10 129,497.10 129,497.10 130,497.10 130,497.10 131,497.10 131,497.10 132,497.10 132,499.40 133,499.40 133,499.40 134,499.40 134,499.40 135,499.40 135,499.40 136,499.40 136,497.80 137,497.80 137,497.80 138,497.80 138,498.60 139,498.60 139,498.60 140,498.60 140,498.60 141,498.60 141,499.40 142,499.40 142,499.40 143,499.40 143,499.40 144,499.40 144,498.60 145,498.60 145,498.60 146,498.60 146,498.60 147,498.60 147,498.60 148,498.60 148,498.60 149,498.60 149,498.60 150,498.60 150,498.60 151,498.60 151,497.80 152,497.80 152,497.80 153,497.80 153,497.80 154,497.80 154,497.80 155,497.80 155,497.80 156,497.80 156,497.80 157,497.80 157,497.80 158,497.80 158,497.80 159,497.80 159,497.80 160,497.80 160,497.80 161,497.80 161,498.60 162,498.60 162,498.60 163,498.60 163,498.60 164,498.60 164,498.60 165,498.60 165,498.60 166,498.60 166,497.10 167,497.10 167,497.10 168,497.10 168,498.60 169,498.60 169,498.60 170,498.60 170,498.60 171,498.60 171,498.60 172,498.60 172,498.60 173,498.60 173,498.60 174,498.60 174,498.60 175,498.60 175,498.60 176,498.60 176,498.60 177,498.60 177,498.60 178,498.60 178,498.60 179,498.60 179,498.60 180,498.60 180,499.40 181,499.40 181,499.40 182,499.40 182,497.80 183,497.80 183,497.80 184,497.80 184,497.80 185,497.80 185,497.80 186,497.80 186,497.80 187,497.80 187,497.80 188,497.80 188,497.80 189,497.80 189,497.80 190,497.80 190,497.80 191,497.80 191,497.80 192,497.80 192,497.80 193,497.80 193,499.40 194,499.40 194,499.40 195,499.40 195,499.40 196,499.40 196,499.40 197,499.40 197,499.40 198,499.40 198,497.10 199,497.10 199,497.10 200,497.10 200,497.10 201,497.10 201,497.10 202,497.10 202,497.80 203,497.80 203,497.80 204,497.80 204,497.80 205,497.80 205,498.60 206,498.60 206,498.60 207,498.60 207,498.60 208,498.60 208,498.60 209,498.60 209,498.60 210,498.60 210,498.60 211,498.60 211,498.60 212,498.60 212,497.10 213,497.10 213,497.10 214,497.10 214,497.10 215,497.10 215,498.60 216,498.60 216,498.60 217,498.60 217,498.60 218,498.60 218,498.60 219,498.60 219,498.60 220,498.60 220,498.60 221,498.60 221,498.60 222,498.60 222,498.60 223,498.60 223,498.60 224,498.60 224,498.60 225,498.60 225,498.60 226,498.60 226,499.40 227,499.40 227,499.40 228,499.40 228,499.40 229,499.40 229,499.40 230,499.40 230,497.80 231,497.80 231,497.80 232,497.80 232,497.80 233,497.80 233,497.80 234,497.80 234,498.60 235,498.60 235,498.60 236,498.60 236,498.60 237,498.60 237,498.60 238,498.60 238,498.60 239,498.60 239,498.60 240,498.60 240,498.60 241,498.60 241,498.60 242,498.60 242,498.60 243,498.60 243,498.60 244,498.60 244,498.60 245,498.60 245,498.60 246,498.60 246,497.10 247,497.10 247,497.10 248,497.10 248,497.10 249,497.10 249,497.10 250,497.10 250,497.10 251,497.10 251,497.10 252,497.10 252,498.60 253,498.60 253,498.60 254,498.60 254,497.10 255,497.10 255,497.10 256,497.10 256,497.10 257,497.10 257,497.10 258,497.10 258,498.60 259,498.60 259,498.60 260,498.60 260,498.60 261,498.60 261,498.60 262,498.60 262,498.60 263,498.60 263,498.60 264,498.60 264,498.60 265,498.60 265,498.60 266,498.60 266,498.60 267,498.60 267,498.60 268,498.60 268,498.60 269,498.60 269,498.60 270,498.60 270,498.60 271,498.60 271,498.60 272,498.60 272,498.60 273,498.60 273,498.60 274,498.60 274,498.60 275,498.60 275,498.60 276,498.60 276,498.60 277,498.60 277,498.60 278,498.60 278,498.60 279,498.60 279,498.60 280,498.60 280,498.60 281,498.60 281,498.60 282,498.60 282,498.60 283,498.60 283,498.60 284,498.60 284,498.60 285,498.60 285,498.60 286,498.60 286,498.60 287,498.60 287,498.60 288,498.60 288,498.60 289,498.60 289,498.60 290,498.60 290,498.60 291,498.60 291,498.60 292,498.60 292,498.60 293,498.60 293,498.60 294,498.60 294,499.40 295,499.40 295,499.40 296,499.40 296,499.40 297,499.40 297,497.80 298,497.80 298,497.80 299,497.80 299,497.80 300,497.80 300,497.80 301,497.80 301,497.80 302,497.80 302,497.80 303,497.80 303,498.60 304,498.60 304,498.60 305,498.60 305,498.60 306,498.60 306,498.60 307,498.60 307,497.80 308,497.80 308,497.80 309,497.80 309,497.80 310,497.80 310,497.80 311,497.80 311,497.80 312,497.80 312,498.60 313,498.60 313,498.60 314,498.60 314,498.60 315,498.60 315,498.60 316,498.60 316,498.60 317,498.60 317,498.60 318,498.60 318,497.80 319,497.80 319,497.80 320,497.80 320,499.40 321,499.40 321,499.40 322,499.40 322,499.40 323,499.40 323,499.40 324,499.40 324,499.40 325,499.40 325,499.40 326,499.40 326,497.80 327,497.80 327,497.80 328,497.80 328,497.80 329,497.80 329,497.80 330,497.80 330,497.80 331,497.80 331,497.80 332,497.80 332,498.60 333,498.60 333,498.60 334,498.60 334,498.60 335,498.60 335,498.60 336,498.60 336,498.60 337,498.60 337,498.60 338,498.60 338,497.80 339,497.80 339,497.80 340,497.80 340,497.80 341,497.80 341,497.80 342,497.80 342,497.80 343,497.80 343,497.80 344,497.80 344,499.40 345,499.40 345,499.40 346,499.40 346,499.40 347,499.40 347,499.40 348,499.40 348,499.40 349,499.40 349,499.40 350,499.40 350,499.40 351,499.40 351,499.40 352,499.40 352,499.40 353,499.40 353,499.40 354,499.40 354,499.40 355,499.40 355,498.60 356,498.60 356,498.60 357,498.60 357,498.60 358,498.60 358,498.60 359,498.60 359,498.60 360,498.60 360,498.60 361,498.60 361,499.40 362,499.40 362,499.40 363,499.40 363,499.40 364,499.40 364,499.40 365,499.40 365,499.40 366,499.40 366,499.40 367,499.40 367,499.40 368,499.40 368,499.40 369,499.40 369,499.40 370,499.40 370,499.40 371,499.40 371,499.40 372,499.40 372,498.60 373,498.60 373,498.60 374,498.60 374,497.80 375,497.80 375,497.80 376,497.80 376,497.80 377,497.80 377,498.60 378,498.60 378,498.60 379,498.60 379,498.60 380,498.60 380,498.60 381,498.60 381,497.80 382,497.80 382,497.80 383,497.80 383,497.80 384,497.80 384,497.80 385,497.80 385,497.80 386,497.80 386,497.80 387,497.80 387,499.40 388,499.40 388,499.40 389,499.40 389,497.80 390,497.80 390,497.80 391,497.80 391,497.80 392,497.80 392,497.80 393,497.80 393,497.80 394,497.80 394,497.80 395,497.80 395,497.80 396,497.80 396,498.60 397,498.60 397,498.60 398,498.60 398,499.40 399,499.40 399,499.40 400,499.40 400,499.40 401,499.40 401,497.80 402,497.80 402,497.80 403,497.80 403,497.80 404,497.80 404,498.60 405,498.60 405,498.60 406,498.60 406,498.60 407,498.60 407,498.60 408,498.60 408,498.60 409,498.60 409,498.60 410,498.60 410,498.60 411,498.60 411,498.60 412,498.60 412,498.60 413,498.60 413,498.60 414,498.60 414,498.60 415,498.60 415,498.60 416,498.60 416,498.60 417,498.60 417,498.60 418,498.60 418,497.80 419,497.80 419,497.80 420,497.80 420,497.80 421,497.80 421,497.80 422,497.80 422,497.80 423,497.80 423,497.80 424,497.80 424,497.80 425,497.80 425,497.80 426,497.80 426,497.80 427,497.80 427,498.60 428,498.60 428,498.60 429,498.60 429,498.60 430,498.60 430,498.60 431,498.60 431,498.60 432,498.60 432,498.60 433,498.60 433,498.60 434,498.60 434,497.80 435,497.80 435,497.80 436,497.80 436,497.80 437,497.80 437,498.60 438,498.60 438,498.60 439,498.60 439,498.60 440,498.60 440,498.60 441,498.60 441,497.80 442,497.80 442,497.80 443,497.80 443,497.80 444,497.80 444,497.80 445,497.80 445,497.80 446,497.80 446,498.60 447,498.60 447,498.60 448,498.60 448,498.60 449,498.60 449,498.60 450,498.60 450,498.60 451,498.60 451,498.60 452,498.60 452,498.60 453,498.60 453,498.60 454,498.60 454,498.60 455,498.60 455,498.60 456,498.60 456,498.60 457,498.60 457,498.60 458,498.60 458,498.60 459,498.60 459,497.10 460,497.10 460,497.10 461,497.10 461,497.10 462,497.10 462,497.10 463,497.10 463,497.10 464,497.10 464,497.10 465,497.10 465,498.60 466,498.60 466,498.60 467,498.60 467,499.40 468,499.40 468,499.40 469,499.40 469,498.60 470,498.60 470,498.60 471,498.60 471,499.40 472,499.40 472,499.40 473,499.40 473,499.40 474,499.40 474,499.40 475,499.40 475,499.40 476,499.40 476,497.10 477,497.10 477,497.10 478,497.10 478,497.10 479,497.10 479,497.10 480,497.10 480,497.10 481,497.10 481,498.60 482,498.60 482,498.60 483,498.60 483,498.60 484,498.60 484,498.60 485,498.60 485,498.60 486,498.60 486,498.60 487,498.60 487,498.60 488,498.60 488,498.60 489,498.60 489,498.60 490,498.60 490,498.60 491,498.60 491,498.60 492,498.60 492,498.60 493,498.60 493,498.60 494,498.60 494,498.60 495,498.60 495,498.60 496,498.60 496,498.60 497,498.60 497,498.60 498,498.60 498,498.60 499,498.60 499,498.60 500,498.60 500,498.60 501,498.60 501,498.60 502,498.60 502,498.60 503,498.60 503,498.60 504,498.60 504,497.80 505,497.80 505,497.80 506,497.80 506,497.80 507,497.80 507,498.60 508,498.60 508,498.60 509,498.60 509,498.60 510,498.60 510,498.60 511,498.60 511,498.60 512,498.60 512,498.60 513,498.60 513,498.60 514,498.60 514,498.60 515,498.60 515,498.60 516,498.60 516,498.60 517,498.60 517,498.60 518,498.60 518,498.60 519,498.60 519,498.60 520,498.60 520,497.80 521,497.80 521,497.80 522,497.80 522,497.80 523,497.80 523,497.80 524,497.80 524,497.80 525,497.80 525,498.60 526,498.60 526,498.60 527,498.60 527,498.60 528,498.60 528,498.60 529,498.60 529,498.60 530,498.60 530,498.60 531,498.60 531,498.60 532,498.60 532,498.60 533,498.60 533,498.60 534,498.60 534,498.60 535,498.60 535,498.60 536,498.60 536,498.60 537,498.60 537,498.60 538,498.60 538,498.60 539,498.60 539,498.60 540,498.60 540,498.60 541,498.60 541,499.40 542,499.40 542,499.40 543,499.40 543,499.40 544,499.40 544,499.40 545,499.40 545,499.40 546,499.40 546,497.80 547,497.80 547,497.80 548,497.80 548,497.80 549,497.80 549,497.80 550,497.80 550,498.60 551,498.60 551,498.60 552,498.60 552,498.60 553,498.60 553,498.60 554,498.60 554,498.60 555,498.60 555,498.60 556,498.60 556,498.60 557,498.60 557,498.60 558,498.60 558,498.60 559,498.60 559,498.60 560,498.60 560,498.60 561,498.60 561,498.60 562,498.60 562,498.60 563,498.60 563,497.80 564,497.80 564,497.80 565,497.80 565,498.60 566,498.60 566,498.60 567,498.60 567,499.40 568,499.40 568,499.40 569,499.40 569,499.40 570,499.40 570,499.40 571,499.40 571,497.80 572,497.80 572,497.80 573,497.80 573,497.80 574,497.80 574,498.60 575,498.60 575,498.60 576,498.60 576,498.60 577,498.60 577,498.60 578,498.60 578,498.60 579,498.60 579,498.60 580,498.60 580,498.60 581,498.60 581,498.60 582,498.60 582,498.60 583,498.60 583,498.60 584,498.60 584,498.60 585,498.60 585,498.60 586,498.60 586,499.40 587,499.40 587,499.40 588,499.40 588,499.40 589,499.40 589,499.40 590,499.40 590,499.40 591,499.40 591,499.40 592,499.40 592,499.40 593,499.40 593,499.40 594,499.40 594,499.40 595,499.40 595,499.40 596,499.40 596,499.40 597,499.40 597,499.40 598,499.40 598,499.40 599,499.40 599,499.40 600,499.40 600,499.40 601,499.40 601,499.40 602,499.40 602,498.60 603,498.60 603,498.60 604,498.60 604,498.60 605,498.60 605,498.60 606,498.60 606,498.60 607,498.60 607,498.60 608,498.60 608,498.60 609,498.60 609,498.60 610,498.60 610,498.60 611,498.60 611,498.60 612,498.60 612,497.80 613,497.80 613,497.80 614,497.80 614,497.80 615,497.80 615,497.80 616,497.80 616,498.60 617,498.60 617,498.60 618,498.60 618,498.60 619,498.60 619,498.60 620,498.60 620,498.60 621,498.60 621,498.60 622,498.60 622,498.60 623,498.60 623,498.60 624,498.60 624,498.60 625,498.60 625,498.60 626,498.60 626,498.60 627,498.60 627,498.60 628,498.60 628,498.60 629,498.60 629,498.60 630,498.60 630,498.60 631,498.60 631,498.60 632,498.60 632,498.60 633,498.60 633,498.60 634,498.60 634,498.60 635,498.60 635,498.60 636,498.60 636,498.60 637,498.60 637,498.60 638,498.60 638,498.60 639,498.60 639,498.60 640,498.60 640,498.60 641,498.60 641,498.60 642,498.60 642,498.60 643,498.60 643,498.60 644,498.60 644,497.80 645,497.80 645,497.80 646,497.80 646,498.60 647,498.60 647,498.60 648,498.60 648,498.60 649,498.60 649,498.60 650,498.60 650,498.60 651,498.60 651,498.60 652,498.60 652,498.60 653,498.60 653,498.60 654,498.60 654,498.60 655,498.60 655,499.40 656,499.40 656,499.40 657,499.40 657,499.40 658,499.40 658,499.40 659,499.40 659,499.40 660,499.40 660,498.60 661,498.60 661,498.60 662,498.60 662,498.60 663,498.60 663,498.60 664,498.60 664,498.60 665,498.60 665,499.40 666,499.40 666,499.40 667,499.40 667,499.40 668,499.40 668,499.40 669,499.40 669,499.40 670,499.40 670,498.60 671,498.60 671,498.60 672,498.60 672,498.60 673,498.60 673,498.60 674,498.60 674,498.60 675,498.60 675,498.60 676,498.60 676,498.60 677,498.60 677,498.60 678,498.60 678,498.60 679,498.60 679,498.60 680,498.60 680,498.60 681,498.60 681,498.60 682,498.60 682,498.60 683,498.60 683,498.60 684,498.60 684,498.60 685,498.60 685,498.60 686,498.60 686,498.60 687,498.60 687,498.60 688,498.60 688,498.60 689,498.60 689,498.60 690,498.60 690,498.60 691,498.60 691,498.60 692,498.60 692,498.60 693,498.60 693,498.60 694,498.60 694,498.60 695,498.60 695,497.80 696,497.80 696,497.80 697,497.80 697,497.80 698,497.80 698,497.80 699,497.80 699,497.80 700,497.80 700,498.60 701,498.60 701,498.60 702,498.60 702,498.60 703,498.60 703,498.60 704,498.60 704,498.60 705,498.60 705,498.60 706,498.60 706,498.60 707,498.60 707,498.60 708,498.60 708,498.60 709,498.60 709,498.60 710,498.60 710,498.60 711,498.60 711,498.60 712,498.60 712,498.60 713,498.60 713,498.60 714,498.60 714,498.60 715,498.60 715,498.60 716,498.60 716,498.60 717,498.60 717,498.60 718,498.60 718,497.10 719,497.10 719,497.10 720,497.10 720,497.10 721,497.10 721,497.80 722,497.80 722,497.80 723,497.80 723,497.80 724,497.80 724,497.80 725,497.80 725,497.80 726,497.80 726,497.80 727,497.80 727,497.80 728,497.80 728,497.80 729,497.80 729,497.80 730,497.80 730,498.60 731,498.60 731,498.60 732,498.60 732,498.60 733,498.60 733,498.60 734,498.60 734,498.60 735,498.60 735,498.60 736,498.60 736,498.60 737,498.60 737,498.60 738,498.60 738,498.60 739,498.60 739,498.60 740,498.60 740,498.60 741,498.60 741,498.60 742,498.60 742,499.40 743,499.40 743,499.40 744,499.40 744,498.60 745,498.60 745,498.60 746,498.60 746,498.60 747,498.60 747,498.60 748,498.60 748,498.60 749,498.60 749,497.80 750,497.80 750,497.80 751,497.80 751,497.80 752,497.80 752,497.80 753,497.80 753,497.80 754,497.80 754,497.10 755,497.10 755,497.10 756,497.10 756,497.10 757,497.10 757,497.10 758,497.10 758,497.10 759,497.10 759,498.60 760,498.60 760,498.60 761,498.60 761,498.60 762,498.60 762,498.60 763,498.60 763,498.60 764,498.60 764,499.40 765,499.40 765,499.40 766,499.40 766,499.40 767,499.40 767,499.40 768,499.40 768,499.40 769,499.40 L769,508.50 54,508.50 Z" fill="#163760"/><path d="M54,505.30 55,505.30 55,505.30 56,505.30 56,505.30 57,505.30 57,505.30 58,505.30 58,505.30 59,505.30 59,505.30 60,505.30 60,505.30 61,505.30 61,505.30 62,505.30 62,505.30 63,505.30 63,505.30 64,505.30 64,505.30 65,505.30 65,505.30 66,505.30 66,505.30 67,505.30 67,505.30 68,505.30 68,505.30 69,505.30 69,505.30 70,505.30 70,505.30 71,505.30 71,505.30 72,505.30 72,505.30 73,505.30 73,505.30 74,505.30 74,505.30 75,505.30 75,505.30 76,505.30 76,505.30 77,505.30 77,505.30 78,505.30 78,505.30 79,505.30 79,505.30 80,505.30 80,505.30 81,505.30 81,505.30 82,505.30 82,505.30 83,505.30 83,505.30 84,505.30 84,505.30 85,505.30 85,505.30 86,505.30 86,505.30 87,505.30 87,505.30 88,505.30 88,505.30 89,505.30 89,505.30 90,505.30 90,505.30 91,505.30 91,505.30 92,505.30 92,505.30 93,505.30 93,505.30 94,505.30 94,505.30 95,505.30 95,505.30 96,505.30 96,504.50 97,504.50 97,504.50 98,504.50 98,504.50 99,504.50 99,504.50 100,504.50 100,504.50 101,504.50 101,504.50 102,504.50 102,505.90 103,505.90 103,505.90 104,505.90 104,505.90 105,505.90 105,505.90 106,505.90 106,505.90 107,505.90 107,505.90 108,505.90 108,504.50 109,504.50 109,504.50 110,504.50 110,503.70 111,503.70 111,503.70 112,503.70 112,504.50 113,504.50 113,504.50 114,504.50 114,504.50 115,504.50 115,505.30 116,505.30 116,505.30 117,505.30 117,505.30 118,505.30 118,504.50 119,504.50 119,504.50 120,504.50 120,504.50 121,504.50 121,504.50 122,504.50 122,504.50 123,504.50 123,504.50 124,504.50 124,505.30 125,505.30 125,505.30 126,505.30 126,505.30 127,505.30 127,505.30 128,505.30 128,505.30 129,505.30 129,505.30 130,505.30 130,505.30 131,505.30 131,505.30 132,505.30 132,505.30 133,505.30 133,504.50 134,504.50 134,504.50 135,504.50 135,504.50 136,504.50 136,504.50 137,504.50 137,505.30 138,505.30 138,505.30 139,505.30 139,504.50 140,504.50 140,504.50 141,504.50 141,504.50 142,504.50 142,504.50 143,504.50 143,504.50 144,504.50 144,504.50 145,504.50 145,505.30 146,505.30 146,505.30 147,505.30 147,505.30 148,505.30 148,505.30 149,505.30 149,505.30 150,505.30 150,505.30 151,505.30 151,505.30 152,505.30 152,505.30 153,505.30 153,505.30 154,505.30 154,505.30 155,505.30 155,505.30 156,505.30 156,505.30 157,505.30 157,505.30 158,505.30 158,505.30 159,505.30 159,505.30 160,505.30 160,505.30 161,505.30 161,505.30 162,505.30 162,505.30 163,505.30 163,505.90 164,505.90 164,505.90 165,505.90 165,505.90 166,505.90 166,505.30 167,505.30 167,505.30 168,505.30 168,505.30 169,505.30 169,505.30 170,505.30 170,505.30 171,505.30 171,505.30 172,505.30 172,505.30 173,505.30 173,505.30 174,505.30 174,504.50 175,504.50 175,504.50 176,504.50 176,504.50 177,504.50 177,504.50 178,504.50 178,504.50 179,504.50 179,504.50 180,504.50 180,505.30 181,505.30 181,505.30 182,505.30 182,505.30 183,505.30 183,505.30 184,505.30 184,505.30 185,505.30 185,505.30 186,505.30 186,505.30 187,505.30 187,505.30 188,505.30 188,505.30 189,505.30 189,505.30 190,505.30 190,505.30 191,505.30 191,505.30 192,505.30 192,505.30 193,505.30 193,505.30 194,505.30 194,505.30 195,505.30 195,505.30 196,505.30 196,504.50 197,504.50 197,504.50 198,504.50 198,504.50 199,504.50 199,504.50 200,504.50 200,504.50 201,504.50 201,504.50 202,504.50 202,504.50 203,504.50 203,504.50 204,504.50 204,504.50 205,504.50 205,504.50 206,504.50 206,505.30 207,505.30 207,505.30 208,505.30 208,505.30 209,505.30 209,505.30 210,505.30 210,504.50 211,504.50 211,504.50 212,504.50 212,504.50 213,504.50 213,504.50 214,504.50 214,504.50 215,504.50 215,504.50 216,504.50 216,505.90 217,505.90 217,505.90 218,505.90 218,505.90 219,505.90 219,505.90 220,505.90 220,505.90 221,505.90 221,505.90 222,505.90 222,505.30 223,505.30 223,505.30 224,505.30 224,505.30 225,505.30 225,505.30 226,505.30 226,505.30 227,505.30 227,505.30 228,505.30 228,504.50 229,504.50 229,504.50 230,504.50 230,504.50 231,504.50 231,504.50 232,504.50 232,504.50 233,504.50 233,505.30 234,505.30 234,505.30 235,505.30 235,505.30 236,505.30 236,505.30 237,505.30 237,505.30 238,505.30 238,505.90 239,505.90 239,505.90 240,505.90 240,505.90 241,505.90 241,505.90 242,505.90 242,505.30 243,505.30 243,505.30 244,505.30 244,505.30 245,505.30 245,505.30 246,505.30 246,505.30 247,505.30 247,505.30 248,505.30 248,505.30 249,505.30 249,505.30 250,505.30 250,505.30 251,505.30 251,505.30 252,505.30 252,505.30 253,505.30 253,505.30 254,505.30 254,505.30 255,505.30 255,505.30 256,505.30 256,505.30 257,505.30 257,505.30 258,505.30 258,505.30 259,505.30 259,505.30 260,505.30 260,505.30 261,505.30 261,505.30 262,505.30 262,505.30 263,505.30 263,505.30 264,505.30 264,505.30 265,505.30 265,505.30 266,505.30 266,505.30 267,505.30 267,505.30 268,505.30 268,505.30 269,505.30 269,505.30 270,505.30 270,505.30 271,505.30 271,505.30 272,505.30 272,505.30 273,505.30 273,505.30 274,505.30 274,505.30 275,505.30 275,505.30 276,505.30 276,505.90 277,505.90 277,505.90 278,505.90 278,505.90 279,505.90 279,505.90 280,505.90 280,505.90 281,505.90 281,505.90 282,505.90 282,505.90 283,505.90 283,505.90 284,505.90 284,505.90 285,505.90 285,504.50 286,504.50 286,504.50 287,504.50 287,504.50 288,504.50 288,504.50 289,504.50 289,504.50 290,504.50 290,504.50 291,504.50 291,504.50 292,504.50 292,504.50 293,504.50 293,504.50 294,504.50 294,505.90 295,505.90 295,505.90 296,505.90 296,505.90 297,505.90 297,505.30 298,505.30 298,505.30 299,505.30 299,505.30 300,505.30 300,505.30 301,505.30 301,505.30 302,505.30 302,505.30 303,505.30 303,505.30 304,505.30 304,505.30 305,505.30 305,505.30 306,505.30 306,505.30 307,505.30 307,505.30 308,505.30 308,505.30 309,505.30 309,505.30 310,505.30 310,505.30 311,505.30 311,505.30 312,505.30 312,505.30 313,505.30 313,505.30 314,505.30 314,505.30 315,505.30 315,505.30 316,505.30 316,505.30 317,505.30 317,505.30 318,505.30 318,504.50 319,504.50 319,504.50 320,504.50 320,504.50 321,504.50 321,504.50 322,504.50 322,504.50 323,504.50 323,504.50 324,504.50 324,504.50 325,504.50 325,504.50 326,504.50 326,504.50 327,504.50 327,504.50 328,504.50 328,504.50 329,504.50 329,504.50 330,504.50 330,504.50 331,504.50 331,504.50 332,504.50 332,504.50 333,504.50 333,505.90 334,505.90 334,505.90 335,505.90 335,505.30 336,505.30 336,505.30 337,505.30 337,505.30 338,505.30 338,505.30 339,505.30 339,505.30 340,505.30 340,505.30 341,505.30 341,505.30 342,505.30 342,505.30 343,505.30 343,505.30 344,505.30 344,505.30 345,505.30 345,505.30 346,505.30 346,505.30 347,505.30 347,505.30 348,505.30 348,505.30 349,505.30 349,505.30 350,505.30 350,505.30 351,505.30 351,504.50 352,504.50 352,504.50 353,504.50 353,505.30 354,505.30 354,505.30 355,505.30 355,505.30 356,505.30 356,505.30 357,505.30 357,505.30 358,505.30 358,505.30 359,505.30 359,505.30 360,505.30 360,505.30 361,505.30 361,505.30 362,505.30 362,505.30 363,505.30 363,505.30 364,505.30 364,505.30 365,505.30 365,505.30 366,505.30 366,505.30 367,505.30 367,505.30 368,505.30 368,505.90 369,505.90 369,505.90 370,505.90 370,505.90 371,505.90 371,505.90 372,505.90 372,505.90 373,505.90 373,505.90 374,505.90 374,505.30 375,505.30 375,505.30 376,505.30 376,505.30 377,505.30 377,504.50 378,504.50 378,504.50 379,504.50 379,504.50 380,504.50 380,504.50 381,504.50 381,504.50 382,504.50 382,504.50 383,504.50 383,504.50 384,504.50 384,504.50 385,504.50 385,504.50 386,504.50 386,504.50 387,504.50 387,504.50 388,504.50 388,504.50 389,504.50 389,505.30 390,505.30 390,505.30 391,505.30 391,505.30 392,505.30 392,505.30 393,505.30 393,505.30 394,505.30 394,503.70 395,503.70 395,503.70 396,503.70 396,503.70 397,503.70 397,503.70 398,503.70 398,503.70 399,503.70 399,505.30 400,505.30 400,505.30 401,505.30 401,505.30 402,505.30 402,505.30 403,505.30 403,505.30 404,505.30 404,505.30 405,505.30 405,504.50 406,504.50 406,504.50 407,504.50 407,504.50 408,504.50 408,504.50 409,504.50 409,505.30 410,505.30 410,505.30 411,505.30 411,505.30 412,505.30 412,505.30 413,505.30 413,505.30 414,505.30 414,505.30 415,505.30 415,505.90 416,505.90 416,505.90 417,505.90 417,505.90 418,505.90 418,505.90 419,505.90 419,505.90 420,505.90 420,505.90 421,505.90 421,505.30 422,505.30 422,505.30 423,505.30 423,505.30 424,505.30 424,505.30 425,505.30 425,505.30 426,505.30 426,505.30 427,505.30 427,505.90 428,505.90 428,505.90 429,505.90 429,505.90 430,505.90 430,505.90 431,505.90 431,505.90 432,505.90 432,505.90 433,505.90 433,505.30 434,505.30 434,505.30 435,505.30 435,504.50 436,504.50 436,504.50 437,504.50 437,504.50 438,504.50 438,504.50 439,504.50 439,505.30 440,505.30 440,505.30 441,505.30 441,505.30 442,505.30 442,505.30 443,505.30 443,505.30 444,505.30 444,505.30 445,505.30 445,504.50 446,504.50 446,504.50 447,504.50 447,504.50 448,504.50 448,504.50 449,504.50 449,504.50 450,504.50 450,504.50 451,504.50 451,505.30 452,505.30 452,505.30 453,505.30 453,505.30 454,505.30 454,504.50 455,504.50 455,504.50 456,504.50 456,504.50 457,504.50 457,505.90 458,505.90 458,505.90 459,505.90 459,505.90 460,505.90 460,505.90 461,505.90 461,505.90 462,505.90 462,504.50 463,504.50 463,504.50 464,504.50 464,504.50 465,504.50 465,505.30 466,505.30 466,505.30 467,505.30 467,505.30 468,505.30 468,505.30 469,505.30 469,505.30 470,505.30 470,505.30 471,505.30 471,505.30 472,505.30 472,503.70 473,503.70 473,503.70 474,503.70 474,503.70 475,503.70 475,503.70 476,503.70 476,505.30 477,505.30 477,505.30 478,505.30 478,505.30 479,505.30 479,504.50 480,504.50 480,504.50 481,504.50 481,504.50 482,504.50 482,504.50 483,504.50 483,505.30 484,505.30 484,505.30 485,505.30 485,505.30 486,505.30 486,505.30 487,505.30 487,505.90 488,505.90 488,505.90 489,505.90 489,505.90 490,505.90 490,505.90 491,505.90 491,505.30 492,505.30 492,505.30 493,505.30 493,505.30 494,505.30 494,505.30 495,505.30 495,505.30 496,505.30 496,505.30 497,505.30 497,505.30 498,505.30 498,505.30 499,505.30 499,505.30 500,505.30 500,505.30 501,505.30 501,504.50 502,504.50 502,504.50 503,504.50 503,504.50 504,504.50 504,504.50 505,504.50 505,504.50 506,504.50 506,504.50 507,504.50 507,505.90 508,505.90 508,505.90 509,505.90 509,505.90 510,505.90 510,505.90 511,505.90 511,505.90 512,505.90 512,505.90 513,505.90 513,505.90 514,505.90 514,505.90 515,505.90 515,505.90 516,505.90 516,505.90 517,505.90 517,505.90 518,505.90 518,505.90 519,505.90 519,505.90 520,505.90 520,505.90 521,505.90 521,505.90 522,505.90 522,505.90 523,505.90 523,505.30 524,505.30 524,505.30 525,505.30 525,505.30 526,505.30 526,505.30 527,505.30 527,505.30 528,505.30 528,505.30 529,505.30 529,505.30 530,505.30 530,505.30 531,505.30 531,505.30 532,505.30 532,505.30 533,505.30 533,505.30 534,505.30 534,505.30 535,505.30 535,505.30 536,505.30 536,505.30 537,505.30 537,504.50 538,504.50 538,504.50 539,504.50 539,504.50 540,504.50 540,503.70 541,503.70 541,503.70 542,503.70 542,505.30 543,505.30 543,505.30 544,505.30 544,505.30 545,505.30 545,505.30 546,505.30 546,505.30 547,505.30 547,505.90 548,505.90 548,505.90 549,505.90 549,505.90 550,505.90 550,504.50 551,504.50 551,504.50 552,504.50 552,504.50 553,504.50 553,504.50 554,504.50 554,504.50 555,504.50 555,504.50 556,504.50 556,503.70 557,503.70 557,503.70 558,503.70 558,503.70 559,503.70 559,503.70 560,503.70 560,505.30 561,505.30 561,505.30 562,505.30 562,505.30 563,505.30 563,505.30 564,505.30 564,505.30 565,505.30 565,505.30 566,505.30 566,505.30 567,505.30 567,505.30 568,505.30 568,505.90 569,505.90 569,505.90 570,505.90 570,504.50 571,504.50 571,504.50 572,504.50 572,504.50 573,504.50 573,505.30 574,505.30 574,505.30 575,505.30 575,505.30 576,505.30 576,505.90 577,505.90 577,505.90 578,505.90 578,505.90 579,505.90 579,505.30 580,505.30 580,505.30 581,505.30 581,505.30 582,505.30 582,505.30 583,505.30 583,505.30 584,505.30 584,505.30 585,505.30 585,504.50 586,504.50 586,504.50 587,504.50 587,504.50 588,504.50 588,504.50 589,504.50 589,505.30 590,505.30 590,505.30 591,505.30 591,505.30 592,505.30 592,505.30 593,505.30 593,505.30 594,505.30 594,505.90 595,505.90 595,505.90 596,505.90 596,505.90 597,505.90 597,505.90 598,505.90 598,505.90 599,505.90 599,505.90 600,505.90 600,505.90 601,505.90 601,505.90 602,505.90 602,505.90 603,505.90 603,505.90 604,505.90 604,505.90 605,505.90 605,505.90 606,505.90 606,505.90 607,505.90 607,505.90 608,505.90 608,505.90 609,505.90 609,505.90 610,505.90 610,505.90 611,505.90 611,505.90 612,505.90 612,505.30 613,505.30 613,505.30 614,505.30 614,505.30 615,505.30 615,505.30 616,505.30 616,505.30 617,505.30 617,505.30 618,505.30 618,505.30 619,505.30 619,505.30 620,505.30 620,505.30 621,505.30 621,505.30 622,505.30 622,505.30 623,505.30 623,505.90 624,505.90 624,505.90 625,505.90 625,505.90 626,505.90 626,504.50 627,504.50 627,504.50 628,504.50 628,504.50 629,504.50 629,505.30 630,505.30 630,505.30 631,505.30 631,505.30 632,505.30 632,505.30 633,505.30 633,505.30 634,505.30 634,504.50 635,504.50 635,504.50 636,504.50 636,504.50 637,504.50 637,504.50 638,504.50 638,504.50 639,504.50 639,504.50 640,504.50 640,504.50 641,504.50 641,504.50 642,504.50 642,504.50 643,504.50 643,504.50 644,504.50 644,504.50 645,504.50 645,504.50 646,504.50 646,504.50 647,504.50 647,504.50 648,504.50 648,505.90 649,505.90 649,505.90 650,505.90 650,505.30 651,505.30 651,505.30 652,505.30 652,505.30 653,505.30 653,505.30 654,505.30 654,505.30 655,505.30 655,505.30 656,505.30 656,505.30 657,505.30 657,505.30 658,505.30 658,505.30 659,505.30 659,505.30 660,505.30 660,505.30 661,505.30 661,505.30 662,505.30 662,505.30 663,505.30 663,505.30 664,505.30 664,505.30 665,505.30 665,505.30 666,505.30 666,505.30 667,505.30 667,505.30 668,505.30 668,505.30 669,505.30 669,505.30 670,505.30 670,503.70 671,503.70 671,503.70 672,503.70 672,503.70 673,503.70 673,503.70 674,503.70 674,503.70 675,503.70 675,503.70 676,503.70 676,505.30 677,505.30 677,505.30 678,505.30 678,505.30 679,505.30 679,505.30 680,505.30 680,505.30 681,505.30 681,505.30 682,505.30 682,505.30 683,505.30 683,505.30 684,505.30 684,505.30 685,505.30 685,505.30 686,505.30 686,505.90 687,505.90 687,505.90 688,505.90 688,505.90 689,505.90 689,505.90 690,505.90 690,505.90 691,505.90 691,505.90 692,505.90 692,505.90 693,505.90 693,505.90 694,505.90 694,505.90 695,505.90 695,505.90 696,505.90 696,505.90 697,505.90 697,505.90 698,505.90 698,505.90 699,505.90 699,505.90 700,505.90 700,505.90 701,505.90 701,505.90 702,505.90 702,505.90 703,505.90 703,505.90 704,505.90 704,505.90 705,505.90 705,505.90 706,505.90 706,505.90 707,505.90 707,505.90 708,505.90 708,505.30 709,505.30 709,505.30 710,505.30 710,505.30 711,505.30 711,505.30 712,505.30 712,505.30 713,505.30 713,505.30 714,505.30 714,505.30 715,505.30 715,504.50 716,504.50 716,504.50 717,504.50 717,504.50 718,504.50 718,504.50 719,504.50 719,504.50 720,504.50 720,505.30 721,505.30 721,505.30 722,505.30 722,505.30 723,505.30 723,505.30 724,505.30 724,504.50 725,504.50 725,504.50 726,504.50 726,504.50 727,504.50 727,505.90 728,505.90 728,505.90 729,505.90 729,505.90 730,505.90 730,505.90 731,505.90 731,505.30 732,505.30 732,505.30 733,505.30 733,505.30 734,505.30 734,503.70 735,503.70 735,503.70 736,503.70 736,503.70 737,503.70 737,504.50 738,504.50 738,504.50 739,504.50 739,505.30 740,505.30 740,505.30 741,505.30 741,505.30 742,505.30 742,505.30 743,505.30 743,505.30 744,505.30 744,505.30 745,505.30 745,505.30 746,505.30 746,505.30 747,505.30 747,505.30 748,505.30 748,505.30 749,505.30 749,505.30 750,505.30 750,505.30 751,505.30 751,505.30 752,505.30 752,503.70 753,503.70 753,503.70 754,503.70 754,503.70 755,503.70 755,503.70 756,503.70 756,503.70 757,503.70 757,505.30 758,505.30 758,505.30 759,505.30 759,505.30 760,505.30 760,505.30 761,505.30 761,505.30 762,505.30 762,504.50 763,504.50 763,504.50 764,504.50 764,505.30 765,505.30 765,505.30 766,505.30 766,505.30 767,505.30 767,505.30 768,505.30 768,505.30 769,505.30 L769,508.50 54,508.50 Z" fill="#7b6a2c"/><path d="M54.0,353.5 L769.0,353.5" fill="none" stroke="#88ab7e" stroke-width="1"/><path d="M54,498.10 55,498.10 55,498.10 56,498.10 56,498.10 57,498.10 57,498.10 58,498.10 58,498.10 59,498.10 59,497.60 60,497.60 60,497.60 61,497.60 61,497.60 62,497.60 62,496.80 63,496.80 63,496.80 64,496.80 64,496.10 65,496.10 65,496.10 66,496.10 66,497.30 67,497.30 67,497.30 68,497.30 68,498.90 69,498.90 69,498.90 70,498.90 70,496.60 71,496.60 71,496.10 72,496.10 72,496.10 73,496.10 73,496.10 74,496.10 74,496.10 75,496.10 75,497.60 76,497.60 76,497.60 77,497.60 77,497.60 78,497.60 78,496.90 79,496.90 79,496.90 80,496.90 80,496.90 81,496.90 81,496.90 82,496.90 82,496.00 83,496.00 83,496.00 84,496.00 84,496.00 85,496.00 85,496.80 86,496.80 86,497.70 87,497.70 87,497.70 88,497.70 88,497.70 89,497.70 89,496.90 90,496.90 90,496.90 91,496.90 91,496.90 92,496.90 92,496.90 93,496.90 93,497.60 94,497.60 94,497.60 95,497.60 95,498.40 96,498.40 96,498.40 97,498.40 97,497.70 98,497.70 98,497.70 99,497.70 99,497.70 100,497.70 100,497.70 101,497.70 101,496.90 102,496.90 102,496.90 103,496.90 103,497.60 104,497.60 104,497.60 105,497.60 105,497.60 106,497.60 106,497.60 107,497.60 107,498.40 108,498.40 108,498.40 109,498.40 109,498.40 110,498.40 110,497.60 111,497.60 111,497.60 112,497.60 112,497.60 113,497.60 113,497.60 114,497.60 114,496.80 115,496.80 115,496.80 116,496.80 116,496.80 117,496.80 117,496.80 118,496.80 118,497.60 119,497.60 119,497.60 120,497.60 120,497.60 121,497.60 121,497.60 122,497.60 122,497.60 123,497.60 123,497.60 124,497.60 124,497.60 125,497.60 125,497.60 126,497.60 126,497.60 127,497.60 127,496.10 128,496.10 128,495.40 129,495.40 129,495.40 130,495.40 130,495.40 131,495.40 131,495.40 132,495.40 132,497.70 133,497.70 133,497.70 134,497.70 134,497.70 135,497.70 135,497.70 136,497.70 136,495.20 137,495.20 137,495.20 138,495.20 138,496.00 139,496.00 139,496.00 140,496.00 140,497.60 141,497.60 141,498.40 142,498.40 142,498.40 143,498.40 143,497.70 144,497.70 144,496.90 145,496.90 145,496.90 146,496.90 146,496.90 147,496.90 147,496.90 148,496.90 148,497.60 149,497.60 149,497.60 150,497.60 150,497.60 151,497.60 151,496.10 152,496.10 152,496.10 153,496.10 153,496.10 154,496.10 154,496.10 155,496.10 155,496.80 156,496.80 156,496.80 157,496.80 157,496.10 158,496.10 158,496.10 159,496.10 159,496.10 160,496.10 160,496.10 161,496.10 161,496.90 162,496.90 162,497.60 163,497.60 163,497.60 164,497.60 164,497.60 165,497.60 165,497.60 166,497.60 166,496.10 167,496.10 167,496.10 168,496.10 168,497.60 169,497.60 169,497.60 170,497.60 170,497.60 171,497.60 171,496.90 172,496.90 172,496.90 173,496.90 173,496.90 174,496.90 174,496.90 175,496.90 175,496.90 176,496.90 176,496.90 177,496.90 177,497.60 178,497.60 178,497.60 179,497.60 179,497.60 180,497.60 180,498.40 181,498.40 181,498.40 182,498.40 182,495.20 183,495.20 183,495.20 184,495.20 184,495.20 185,495.20 185,495.20 186,495.20 186,497.30 187,497.30 187,497.30 188,497.30 188,497.30 189,497.30 189,496.80 190,496.80 190,496.80 191,496.80 191,496.80 192,496.80 192,496.80 193,496.80 193,498.40 194,498.40 194,498.40 195,498.40 195,498.40 196,498.40 196,498.40 197,498.40 197,498.40 198,498.40 198,496.10 199,496.10 199,496.10 200,496.10 200,496.10 201,496.10 201,496.10 202,496.10 202,496.10 203,496.10 203,496.10 204,496.10 204,496.10 205,496.10 205,498.10 206,498.10 206,498.10 207,498.10 207,498.10 208,498.10 208,498.10 209,498.10 209,498.10 210,498.10 210,497.60 211,497.60 211,497.60 212,497.60 212,494.50 213,494.50 213,494.50 214,494.50 214,494.50 215,494.50 215,498.10 216,498.10 216,498.10 217,498.10 217,497.60 218,497.60 218,497.60 219,497.60 219,497.60 220,497.60 220,497.60 221,497.60 221,497.60 222,497.60 222,497.60 223,497.60 223,497.60 224,497.60 224,497.60 225,497.60 225,496.90 226,496.90 226,497.70 227,497.70 227,497.70 228,497.70 228,498.40 229,498.40 229,498.40 230,498.40 230,496.80 231,496.80 231,496.80 232,496.80 232,496.10 233,496.10 233,496.10 234,496.10 234,498.10 235,498.10 235,498.10 236,498.10 236,498.10 237,498.10 237,498.10 238,498.10 238,497.60 239,497.60 239,497.60 240,497.60 240,497.60 241,497.60 241,497.60 242,497.60 242,497.60 243,497.60 243,497.60 244,497.60 244,496.90 245,496.90 245,496.90 246,496.90 246,496.10 247,496.10 247,496.10 248,496.10 248,496.10 249,496.10 249,496.10 250,496.10 250,496.10 251,496.10 251,496.60 252,496.60 252,498.10 253,498.10 253,498.10 254,498.10 254,496.60 255,496.60 255,496.10 256,496.10 256,496.10 257,496.10 257,496.10 258,496.10 258,497.60 259,497.60 259,497.60 260,497.60 260,497.60 261,497.60 261,497.60 262,497.60 262,497.60 263,497.60 263,497.60 264,497.60 264,497.60 265,497.60 265,497.60 266,497.60 266,496.00 267,496.00 267,496.00 268,496.00 268,496.90 269,496.90 269,496.90 270,496.90 270,496.90 271,496.90 271,497.60 272,497.60 272,497.60 273,497.60 273,497.60 274,497.60 274,497.60 275,497.60 275,498.10 276,498.10 276,498.10 277,498.10 277,498.10 278,498.10 278,498.10 279,498.10 279,498.10 280,498.10 280,497.60 281,497.60 281,497.60 282,497.60 282,497.60 283,497.60 283,497.60 284,497.60 284,497.60 285,497.60 285,497.60 286,497.60 286,497.60 287,497.60 287,497.60 288,497.60 288,497.60 289,497.60 289,497.60 290,497.60 290,497.60 291,497.60 291,498.10 292,498.10 292,498.10 293,498.10 293,498.10 294,498.10 294,498.40 295,498.40 295,498.40 296,498.40 296,498.40 297,498.40 297,496.80 298,496.80 298,496.80 299,496.80 299,496.80 300,496.80 300,496.80 301,496.80 301,496.80 302,496.80 302,496.80 303,496.80 303,497.60 304,497.60 304,497.60 305,497.60 305,497.60 306,497.60 306,497.60 307,497.60 307,496.80 308,496.80 308,496.80 309,496.80 309,496.80 310,496.80 310,496.80 311,496.80 311,496.80 312,496.80 312,497.60 313,497.60 313,497.60 314,497.60 314,497.60 315,497.60 315,498.10 316,498.10 316,498.10 317,498.10 317,498.10 318,498.10 318,497.30 319,497.30 319,496.80 320,496.80 320,498.40 321,498.40 321,498.40 322,498.40 322,498.40 323,498.40 323,496.80 324,496.80 324,496.80 325,496.80 325,496.80 326,496.80 326,495.20 327,495.20 327,495.20 328,495.20 328,495.20 329,495.20 329,496.80 330,496.80 330,496.80 331,496.80 331,496.80 332,496.80 332,497.60 333,497.60 333,498.10 334,498.10 334,498.10 335,498.10 335,498.10 336,498.10 336,498.10 337,498.10 337,497.60 338,497.60 338,496.80 339,496.80 339,496.80 340,496.80 340,496.80 341,496.80 341,496.80 342,496.80 342,496.80 343,496.80 343,497.30 344,497.30 344,498.90 345,498.90 345,498.40 346,498.40 346,498.40 347,498.40 347,498.40 348,498.40 348,498.40 349,498.40 349,498.40 350,498.40 350,498.40 351,498.40 351,498.40 352,498.40 352,498.40 353,498.40 353,496.80 354,496.80 354,496.80 355,496.80 355,496.00 356,496.00 356,496.00 357,496.00 357,496.00 358,496.00 358,498.10 359,498.10 359,498.10 360,498.10 360,498.10 361,498.10 361,498.90 362,498.90 362,498.90 363,498.90 363,498.90 364,498.90 364,498.90 365,498.90 365,498.90 366,498.90 366,498.90 367,498.90 367,498.90 368,498.90 368,498.90 369,498.90 369,498.40 370,498.40 370,498.40 371,498.40 371,498.40 372,498.40 372,497.60 373,497.60 373,498.10 374,498.10 374,497.30 375,497.30 375,497.30 376,497.30 376,496.10 377,496.10 377,496.90 378,496.90 378,496.90 379,496.90 379,496.90 380,496.90 380,498.10 381,498.10 381,497.30 382,497.30 382,497.30 383,497.30 383,497.30 384,497.30 384,497.30 385,497.30 385,496.80 386,496.80 386,496.80 387,496.80 387,498.40 388,498.40 388,498.40 389,498.40 389,496.80 390,496.80 390,496.80 391,496.80 391,496.80 392,496.80 392,496.80 393,496.80 393,496.80 394,496.80 394,496.80 395,496.80 395,496.80 396,496.80 396,497.60 397,497.60 397,497.60 398,497.60 398,498.40 399,498.40 399,497.70 400,497.70 400,497.70 401,497.70 401,496.10 402,496.10 402,496.10 403,496.10 403,496.10 404,496.10 404,496.90 405,496.90 405,496.90 406,496.90 406,496.90 407,496.90 407,496.90 408,496.90 408,497.60 409,497.60 409,497.60 410,497.60 410,497.60 411,497.60 411,497.60 412,497.60 412,497.60 413,497.60 413,498.10 414,498.10 414,498.10 415,498.10 415,497.60 416,497.60 416,497.60 417,497.60 417,497.60 418,497.60 418,496.80 419,496.80 419,496.80 420,496.80 420,496.80 421,496.80 421,496.80 422,496.80 422,496.10 423,496.10 423,496.10 424,496.10 424,496.10 425,496.10 425,496.10 426,496.10 426,496.10 427,496.10 427,497.60 428,497.60 428,497.60 429,497.60 429,497.60 430,497.60 430,497.60 431,497.60 431,497.60 432,497.60 432,497.60 433,497.60 433,497.60 434,497.60 434,496.80 435,496.80 435,496.80 436,496.80 436,497.30 437,497.30 437,498.10 438,498.10 438,498.10 439,498.10 439,496.90 440,496.90 440,496.90 441,496.90 441,497.30 442,497.30 442,497.30 443,497.30 443,497.30 444,497.30 444,497.30 445,497.30 445,496.80 446,496.80 446,497.60 447,497.60 447,497.60 448,497.60 448,497.60 449,497.60 449,497.60 450,497.60 450,497.60 451,497.60 451,497.60 452,497.60 452,497.60 453,497.60 453,497.60 454,497.60 454,497.60 455,497.60 455,496.90 456,496.90 456,496.90 457,496.90 457,496.90 458,496.90 458,497.60 459,497.60 459,496.10 460,496.10 460,496.10 461,496.10 461,496.10 462,496.10 462,496.10 463,496.10 463,496.10 464,496.10 464,496.10 465,496.10 465,497.60 466,497.60 466,497.60 467,497.60 467,498.40 468,498.40 468,498.40 469,498.40 469,497.60 470,497.60 470,497.60 471,497.60 471,498.40 472,498.40 472,498.40 473,498.40 473,498.40 474,498.40 474,498.40 475,498.40 475,497.70 476,497.70 476,495.40 477,495.40 477,495.40 478,495.40 478,495.40 479,495.40 479,495.40 480,495.40 480,495.40 481,495.40 481,496.90 482,496.90 482,497.60 483,497.60 483,497.60 484,497.60 484,497.60 485,497.60 485,497.60 486,497.60 486,497.60 487,497.60 487,498.10 488,498.10 488,498.10 489,498.10 489,498.10 490,498.10 490,498.10 491,498.10 491,498.10 492,498.10 492,498.10 493,498.10 493,498.10 494,498.10 494,497.60 495,497.60 495,497.60 496,497.60 496,497.60 497,497.60 497,497.60 498,497.60 498,497.60 499,497.60 499,497.60 500,497.60 500,497.60 501,497.60 501,497.60 502,497.60 502,497.60 503,497.60 503,497.60 504,497.60 504,496.80 505,496.80 505,496.80 506,496.80 506,496.80 507,496.80 507,497.60 508,497.60 508,497.60 509,497.60 509,497.60 510,497.60 510,497.60 511,497.60 511,497.60 512,497.60 512,497.60 513,497.60 513,497.60 514,497.60 514,497.60 515,497.60 515,498.10 516,498.10 516,498.10 517,498.10 517,497.60 518,497.60 518,497.60 519,497.60 519,497.60 520,497.60 520,496.80 521,496.80 521,496.80 522,496.80 522,496.80 523,496.80 523,496.10 524,496.10 524,496.10 525,496.10 525,496.90 526,496.90 526,496.90 527,496.90 527,497.60 528,497.60 528,497.60 529,497.60 529,497.60 530,497.60 530,497.60 531,497.60 531,497.60 532,497.60 532,497.60 533,497.60 533,497.60 534,497.60 534,497.60 535,497.60 535,497.60 536,497.60 536,497.60 537,497.60 537,497.60 538,497.60 538,497.60 539,497.60 539,497.60 540,497.60 540,498.10 541,498.10 541,498.90 542,498.90 542,498.90 543,498.90 543,498.90 544,498.90 544,498.40 545,498.40 545,498.40 546,498.40 546,496.80 547,496.80 547,496.80 548,496.80 548,496.80 549,496.80 549,496.80 550,496.80 550,497.60 551,497.60 551,497.60 552,497.60 552,497.60 553,497.60 553,497.60 554,497.60 554,498.10 555,498.10 555,498.10 556,498.10 556,498.10 557,498.10 557,498.10 558,498.10 558,498.10 559,498.10 559,498.10 560,498.10 560,496.90 561,496.90 561,496.90 562,496.90 562,496.90 563,496.90 563,496.10 564,496.10 564,496.10 565,496.10 565,497.60 566,497.60 566,497.60 567,497.60 567,498.40 568,498.40 568,498.40 569,498.40 569,498.40 570,498.40 570,497.70 571,497.70 571,496.10 572,496.10 572,496.10 573,496.10 573,496.10 574,496.10 574,496.90 575,496.90 575,496.90 576,496.90 576,496.90 577,496.90 577,496.90 578,496.90 578,496.90 579,496.90 579,496.90 580,496.90 580,496.90 581,496.90 581,496.90 582,496.90 582,496.90 583,496.90 583,496.90 584,496.90 584,496.90 585,496.90 585,496.00 586,496.00 586,496.80 587,496.80 587,496.80 588,496.80 588,496.80 589,496.80 589,498.40 590,498.40 590,498.40 591,498.40 591,498.40 592,498.40 592,498.40 593,498.40 593,498.40 594,498.40 594,498.40 595,498.40 595,498.40 596,498.40 596,498.40 597,498.40 597,498.90 598,498.90 598,498.90 599,498.90 599,498.90 600,498.90 600,498.90 601,498.90 601,498.90 602,498.90 602,497.60 603,497.60 603,497.60 604,497.60 604,497.60 605,497.60 605,497.60 606,497.60 606,496.90 607,496.90 607,496.90 608,496.90 608,496.90 609,496.90 609,496.90 610,496.90 610,496.90 611,496.90 611,496.90 612,496.90 612,496.10 613,496.10 613,496.10 614,496.10 614,497.30 615,497.30 615,497.30 616,497.30 616,498.10 617,498.10 617,498.10 618,498.10 618,498.10 619,498.10 619,498.10 620,498.10 620,498.10 621,498.10 621,498.10 622,498.10 622,498.10 623,498.10 623,498.10 624,498.10 624,497.60 625,497.60 625,497.60 626,497.60 626,497.60 627,497.60 627,497.60 628,497.60 628,497.60 629,497.60 629,497.60 630,497.60 630,497.60 631,497.60 631,497.60 632,497.60 632,497.60 633,497.60 633,497.60 634,497.60 634,497.60 635,497.60 635,496.90 636,496.90 636,496.90 637,496.90 637,496.90 638,496.90 638,496.90 639,496.90 639,496.90 640,496.90 640,497.60 641,497.60 641,497.60 642,497.60 642,497.60 643,497.60 643,497.60 644,497.60 644,496.80 645,496.80 645,496.80 646,496.80 646,498.10 647,498.10 647,498.10 648,498.10 648,498.10 649,498.10 649,498.10 650,498.10 650,498.10 651,498.10 651,498.10 652,498.10 652,497.60 653,497.60 653,497.60 654,497.60 654,497.60 655,497.60 655,498.40 656,498.40 656,498.40 657,498.40 657,498.40 658,498.40 658,498.40 659,498.40 659,498.40 660,498.40 660,497.60 661,497.60 661,497.60 662,497.60 662,497.60 663,497.60 663,497.60 664,497.60 664,497.60 665,497.60 665,498.40 666,498.40 666,498.40 667,498.40 667,498.40 668,498.40 668,498.40 669,498.40 669,497.70 670,497.70 670,496.90 671,496.90 671,496.90 672,496.90 672,497.60 673,497.60 673,497.60 674,497.60 674,496.00 675,496.00 675,496.00 676,496.00 676,496.00 677,496.00 677,496.00 678,496.00 678,496.00 679,496.00 679,497.60 680,497.60 680,497.60 681,497.60 681,497.60 682,497.60 682,497.60 683,497.60 683,497.60 684,497.60 684,497.60 685,497.60 685,498.10 686,498.10 686,498.10 687,498.10 687,498.10 688,498.10 688,498.10 689,498.10 689,498.10 690,498.10 690,497.60 691,497.60 691,497.60 692,497.60 692,497.60 693,497.60 693,497.60 694,497.60 694,497.60 695,497.60 695,496.80 696,496.80 696,496.10 697,496.10 697,496.10 698,496.10 698,496.10 699,496.10 699,496.10 700,496.10 700,496.90 701,496.90 701,496.90 702,496.90 702,496.90 703,496.90 703,496.90 704,496.90 704,496.90 705,496.90 705,496.90 706,496.90 706,496.90 707,496.90 707,496.90 708,496.90 708,498.10 709,498.10 709,498.10 710,498.10 710,498.10 711,498.10 711,498.10 712,498.10 712,498.10 713,498.10 713,497.60 714,497.60 714,497.60 715,497.60 715,497.60 716,497.60 716,497.60 717,497.60 717,497.60 718,497.60 718,496.10 719,496.10 719,496.10 720,496.10 720,496.10 721,496.10 721,496.80 722,496.80 722,496.80 723,496.80 723,496.80 724,496.80 724,496.80 725,496.80 725,496.80 726,496.80 726,496.80 727,496.80 727,496.80 728,496.80 728,496.80 729,496.80 729,495.20 730,495.20 730,496.00 731,496.00 731,496.00 732,496.00 732,497.60 733,497.60 733,497.60 734,497.60 734,497.60 735,497.60 735,497.60 736,497.60 736,497.60 737,497.60 737,497.60 738,497.60 738,498.10 739,498.10 739,498.10 740,498.10 740,496.90 741,496.90 741,496.90 742,496.90 742,497.70 743,497.70 743,497.70 744,497.70 744,497.60 745,497.60 745,497.60 746,497.60 746,497.60 747,497.60 747,497.60 748,497.60 748,497.60 749,497.60 749,496.80 750,496.80 750,496.80 751,496.80 751,496.80 752,496.80 752,496.80 753,496.80 753,496.80 754,496.80 754,495.40 755,495.40 755,495.40 756,495.40 756,495.40 757,495.40 757,495.40 758,495.40 758,495.40 759,495.40 759,496.90 760,496.90 760,496.90 761,496.90 761,496.90 762,496.90 762,496.90 763,496.90 763,497.60 764,497.60 764,498.40 765,498.40 765,498.40 766,498.40 766,498.40 767,498.40 767,498.40 768,498.40 768,498.40 769,498.40" fill="none" stroke="#9a5560" stroke-width="1"/><path d="M54,505.30 55,505.30 55,505.30 56,505.30 56,505.30 57,505.30 57,505.30 58,505.30 58,505.30 59,505.30 59,505.30 60,505.30 60,505.30 61,505.30 61,505.30 62,505.30 62,505.30 63,505.30 63,505.30 64,505.30 64,505.30 65,505.30 65,505.30 66,505.30 66,505.30 67,505.30 67,505.30 68,505.30 68,505.30 69,505.30 69,505.30 70,505.30 70,505.30 71,505.30 71,505.30 72,505.30 72,505.30 73,505.30 73,505.30 74,505.30 74,505.30 75,505.30 75,505.30 76,505.30 76,505.30 77,505.30 77,505.30 78,505.30 78,505.30 79,505.30 79,505.30 80,505.30 80,505.30 81,505.30 81,505.30 82,505.30 82,505.30 83,505.30 83,505.30 84,505.30 84,505.30 85,505.30 85,505.30 86,505.30 86,505.30 87,505.30 87,505.30 88,505.30 88,505.30 89,505.30 89,505.30 90,505.30 90,505.30 91,505.30 91,505.30 92,505.30 92,505.30 93,505.30 93,505.30 94,505.30 94,505.30 95,505.30 95,505.30 96,505.30 96,504.50 97,504.50 97,504.50 98,504.50 98,504.50 99,504.50 99,504.50 100,504.50 100,504.50 101,504.50 101,504.50 102,504.50 102,505.90 103,505.90 103,505.90 104,505.90 104,505.90 105,505.90 105,505.90 106,505.90 106,505.90 107,505.90 107,505.90 108,505.90 108,504.50 109,504.50 109,504.50 110,504.50 110,503.70 111,503.70 111,503.70 112,503.70 112,504.50 113,504.50 113,504.50 114,504.50 114,504.50 115,504.50 115,505.30 116,505.30 116,505.30 117,505.30 117,505.30 118,505.30 118,504.50 119,504.50 119,504.50 120,504.50 120,504.50 121,504.50 121,504.50 122,504.50 122,504.50 123,504.50 123,504.50 124,504.50 124,505.30 125,505.30 125,505.30 126,505.30 126,505.30 127,505.30 127,505.30 128,505.30 128,505.30 129,505.30 129,505.30 130,505.30 130,505.30 131,505.30 131,505.30 132,505.30 132,505.30 133,505.30 133,504.50 134,504.50 134,504.50 135,504.50 135,504.50 136,504.50 136,504.50 137,504.50 137,505.30 138,505.30 138,505.30 139,505.30 139,504.50 140,504.50 140,504.50 141,504.50 141,504.50 142,504.50 142,504.50 143,504.50 143,504.50 144,504.50 144,504.50 145,504.50 145,505.30 146,505.30 146,505.30 147,505.30 147,505.30 148,505.30 148,505.30 149,505.30 149,505.30 150,505.30 150,505.30 151,505.30 151,505.30 152,505.30 152,505.30 153,505.30 153,505.30 154,505.30 154,505.30 155,505.30 155,505.30 156,505.30 156,505.30 157,505.30 157,505.30 158,505.30 158,505.30 159,505.30 159,505.30 160,505.30 160,505.30 161,505.30 161,505.30 162,505.30 162,505.30 163,505.30 163,505.90 164,505.90 164,505.90 165,505.90 165,505.90 166,505.90 166,505.30 167,505.30 167,505.30 168,505.30 168,505.30 169,505.30 169,505.30 170,505.30 170,505.30 171,505.30 171,505.30 172,505.30 172,505.30 173,505.30 173,505.30 174,505.30 174,504.50 175,504.50 175,504.50 176,504.50 176,504.50 177,504.50 177,504.50 178,504.50 178,504.50 179,504.50 179,504.50 180,504.50 180,505.30 181,505.30 181,505.30 182,505.30 182,505.30 183,505.30 183,505.30 184,505.30 184,505.30 185,505.30 185,505.30 186,505.30 186,505.30 187,505.30 187,505.30 188,505.30 188,505.30 189,505.30 189,505.30 190,505.30 190,505.30 191,505.30 191,505.30 192,505.30 192,505.30 193,505.30 193,505.30 194,505.30 194,505.30 195,505.30 195,505.30 196,505.30 196,504.50 197,504.50 197,504.50 198,504.50 198,504.50 199,504.50 199,504.50 200,504.50 200,504.50 201,504.50 201,504.50 202,504.50 202,504.50 203,504.50 203,504.50 204,504.50 204,504.50 205,504.50 205,504.50 206,504.50 206,505.30 207,505.30 207,505.30 208,505.30 208,505.30 209,505.30 209,505.30 210,505.30 210,504.50 211,504.50 211,504.50 212,504.50 212,504.50 213,504.50 213,504.50 214,504.50 214,504.50 215,504.50 215,504.50 216,504.50 216,505.90 217,505.90 217,505.90 218,505.90 218,505.90 219,505.90 219,505.90 220,505.90 220,505.90 221,505.90 221,505.90 222,505.90 222,505.30 223,505.30 223,505.30 224,505.30 224,505.30 225,505.30 225,505.30 226,505.30 226,505.30 227,505.30 227,505.30 228,505.30 228,504.50 229,504.50 229,504.50 230,504.50 230,504.50 231,504.50 231,504.50 232,504.50 232,504.50 233,504.50 233,505.30 234,505.30 234,505.30 235,505.30 235,505.30 236,505.30 236,505.30 237,505.30 237,505.30 238,505.30 238,505.90 239,505.90 239,505.90 240,505.90 240,505.90 241,505.90 241,505.90 242,505.90 242,505.30 243,505.30 243,505.30 244,505.30 244,505.30 245,505.30 245,505.30 246,505.30 246,505.30 247,505.30 247,505.30 248,505.30 248,505.30 249,505.30 249,505.30 250,505.30 250,505.30 251,505.30 251,505.30 252,505.30 252,505.30 253,505.30 253,505.30 254,505.30 254,505.30 255,505.30 255,505.30 256,505.30 256,505.30 257,505.30 257,505.30 258,505.30 258,505.30 259,505.30 259,505.30 260,505.30 260,505.30 261,505.30 261,505.30 262,505.30 262,505.30 263,505.30 263,505.30 264,505.30 264,505.30 265,505.30 265,505.30 266,505.30 266,505.30 267,505.30 267,505.30 268,505.30 268,505.30 269,505.30 269,505.30 270,505.30 270,505.30 271,505.30 271,505.30 272,505.30 272,505.30 273,505.30 273,505.30 274,505.30 274,505.30 275,505.30 275,505.30 276,505.30 276,505.90 277,505.90 277,505.90 278,505.90 278,505.90 279,505.90 279,505.90 280,505.90 280,505.90 281,505.90 281,505.90 282,505.90 282,505.90 283,505.90 283,505.90 284,505.90 284,505.90 285,505.90 285,504.50 286,504.50 286,504.50 287,504.50 287,504.50 288,504.50 288,504.50 289,504.50 289,504.50 290,504.50 290,504.50 291,504.50 291,504.50 292,504.50 292,504.50 293,504.50 293,504.50 294,504.50 294,505.90 295,505.90 295,505.90 296,505.90 296,505.90 297,505.90 297,505.30 298,505.30 298,505.30 299,505.30 299,505.30 300,505.30 300,505.30 301,505.30 301,505.30 302,505.30 302,505.30 303,505.30 303,505.30 304,505.30 304,505.30 305,505.30 305,505.30 306,505.30 306,505.30 307,505.30 307,505.30 308,505.30 308,505.30 309,505.30 309,505.30 310,505.30 310,505.30 311,505.30 311,505.30 312,505.30 312,505.30 313,505.30 313,505.30 314,505.30 314,505.30 315,505.30 315,505.30 316,505.30 316,505.30 317,505.30 317,505.30 318,505.30 318,504.50 319,504.50 319,504.50 320,504.50 320,504.50 321,504.50 321,504.50 322,504.50 322,504.50 323,504.50 323,504.50 324,504.50 324,504.50 325,504.50 325,504.50 326,504.50 326,504.50 327,504.50 327,504.50 328,504.50 328,504.50 329,504.50 329,504.50 330,504.50 330,504.50 331,504.50 331,504.50 332,504.50 332,504.50 333,504.50 333,505.90 334,505.90 334,505.90 335,505.90 335,505.30 336,505.30 336,505.30 337,505.30 337,505.30 338,505.30 338,505.30 339,505.30 339,505.30 340,505.30 340,505.30 341,505.30 341,505.30 342,505.30 342,505.30 343,505.30 343,505.30 344,505.30 344,505.30 345,505.30 345,505.30 346,505.30 346,505.30 347,505.30 347,505.30 348,505.30 348,505.30 349,505.30 349,505.30 350,505.30 350,505.30 351,505.30 351,504.50 352,504.50 352,504.50 353,504.50 353,505.30 354,505.30 354,505.30 355,505.30 355,505.30 356,505.30 356,505.30 357,505.30 357,505.30 358,505.30 358,505.30 359,505.30 359,505.30 360,505.30 360,505.30 361,505.30 361,505.30 362,505.30 362,505.30 363,505.30 363,505.30 364,505.30 364,505.30 365,505.30 365,505.30 366,505.30 366,505.30 367,505.30 367,505.30 368,505.30 368,505.90 369,505.90 369,505.90 370,505.90 370,505.90 371,505.90 371,505.90 372,505.90 372,505.90 373,505.90 373,505.90 374,505.90 374,505.30 375,505.30 375,505.30 376,505.30 376,505.30 377,505.30 377,504.50 378,504.50 378,504.50 379,504.50 379,504.50 380,504.50 380,504.50 381,504.50 381,504.50 382,504.50 382,504.50 383,504.50 383,504.50 384,504.50 384,504.50 385,504.50 385,504.50 386,504.50 386,504.50 387,504.50 387,504.50 388,504.50 388,504.50 389,504.50 389,505.30 390,505.30 390,505.30 391,505.30 391,505.30 392,505.30 392,505.30 393,505.30 393,505.30 394,505.30 394,503.70 395,503.70 395,503.70 396,503.70 396,503.70 397,503.70 397,503.70 398,503.70 398,503.70 399,503.70 399,505.30 400,505.30 400,505.30 401,505.30 401,505.30 402,505.30 402,505.30 403,505.30 403,505.30 404,505.30 404,505.30 405,505.30 405,504.50 406,504.50 406,504.50 407,504.50 407,504.50 408,504.50 408,504.50 409,504.50 409,505.30 410,505.30 410,505.30 411,505.30 411,505.30 412,505.30 412,505.30 413,505.30 413,505.30 414,505.30 414,505.30 415,505.30 415,505.90 416,505.90 416,505.90 417,505.90 417,505.90 418,505.90 418,505.90 419,505.90 419,505.90 420,505.90 420,505.90 421,505.90 421,505.30 422,505.30 422,505.30 423,505.30 423,505.30 424,505.30 424,505.30 425,505.30 425,505.30 426,505.30 426,505.30 427,505.30 427,505.90 428,505.90 428,505.90 429,505.90 429,505.90 430,505.90 430,505.90 431,505.90 431,505.90 432,505.90 432,505.90 433,505.90 433,505.30 434,505.30 434,505.30 435,505.30 435,504.50 436,504.50 436,504.50 437,504.50 437,504.50 438,504.50 438,504.50 439,504.50 439,505.30 440,505.30 440,505.30 441,505.30 441,505.30 442,505.30 442,505.30 443,505.30 443,505.30 444,505.30 444,505.30 445,505.30 445,504.50 446,504.50 446,504.50 447,504.50 447,504.50 448,504.50 448,504.50 449,504.50 449,504.50 450,504.50 450,504.50 451,504.50 451,505.30 452,505.30 452,505.30 453,505.30 453,505.30 454,505.30 454,504.50 455,504.50 455,504.50 456,504.50 456,504.50 457,504.50 457,505.90 458,505.90 458,505.90 459,505.90 459,505.90 460,505.90 460,505.90 461,505.90 461,505.90 462,505.90 462,504.50 463,504.50 463,504.50 464,504.50 464,504.50 465,504.50 465,505.30 466,505.30 466,505.30 467,505.30 467,505.30 468,505.30 468,505.30 469,505.30 469,505.30 470,505.30 470,505.30 471,505.30 471,505.30 472,505.30 472,503.70 473,503.70 473,503.70 474,503.70 474,503.70 475,503.70 475,503.70 476,503.70 476,505.30 477,505.30 477,505.30 478,505.30 478,505.30 479,505.30 479,504.50 480,504.50 480,504.50 481,504.50 481,504.50 482,504.50 482,504.50 483,504.50 483,505.30 484,505.30 484,505.30 485,505.30 485,505.30 486,505.30 486,505.30 487,505.30 487,505.90 488,505.90 488,505.90 489,505.90 489,505.90 490,505.90 490,505.90 491,505.90 491,505.30 492,505.30 492,505.30 493,505.30 493,505.30 494,505.30 494,505.30 495,505.30 495,505.30 496,505.30 496,505.30 497,505.30 497,505.30 498,505.30 498,505.30 499,505.30 499,505.30 500,505.30 500,505.30 501,505.30 501,504.50 502,504.50 502,504.50 503,504.50 503,504.50 504,504.50 504,504.50 505,504.50 505,504.50 506,504.50 506,504.50 507,504.50 507,505.90 508,505.90 508,505.90 509,505.90 509,505.90 510,505.90 510,505.90 511,505.90 511,505.90 512,505.90 512,505.90 513,505.90 513,505.90 514,505.90 514,505.90 515,505.90 515,505.90 516,505.90 516,505.90 517,505.90 517,505.90 518,505.90 518,505.90 519,505.90 519,505.90 520,505.90 520,505.90 521,505.90 521,505.90 522,505.90 522,505.90 523,505.90 523,505.30 524,505.30 524,505.30 525,505.30 525,505.30 526,505.30 526,505.30 527,505.30 527,505.30 528,505.30 528,505.30 529,505.30 529,505.30 530,505.30 530,505.30 531,505.30 531,505.30 532,505.30 532,505.30 533,505.30 533,505.30 534,505.30 534,505.30 535,505.30 535,505.30 536,505.30 536,505.30 537,505.30 537,504.50 538,504.50 538,504.50 539,504.50 539,504.50 540,504.50 540,503.70 541,503.70 541,503.70 542,503.70 542,505.30 543,505.30 543,505.30 544,505.30 544,505.30 545,505.30 545,505.30 546,505.30 546,505.30 547,505.30 547,505.90 548,505.90 548,505.90 549,505.90 549,505.90 550,505.90 550,504.50 551,504.50 551,504.50 552,504.50 552,504.50 553,504.50 553,504.50 554,504.50 554,504.50 555,504.50 555,504.50 556,504.50 556,503.70 557,503.70 557,503.70 558,503.70 558,503.70 559,503.70 559,503.70 560,503.70 560,505.30 561,505.30 561,505.30 562,505.30 562,505.30 563,505.30 563,505.30 564,505.30 564,505.30 565,505.30 565,505.30 566,505.30 566,505.30 567,505.30 567,505.30 568,505.30 568,505.90 569,505.90 569,505.90 570,505.90 570,504.50 571,504.50 571,504.50 572,504.50 572,504.50 573,504.50 573,505.30 574,505.30 574,505.30 575,505.30 575,505.30 576,505.30 576,505.90 577,505.90 577,505.90 578,505.90 578,505.90 579,505.90 579,505.30 580,505.30 580,505.30 581,505.30 581,505.30 582,505.30 582,505.30 583,505.30 583,505.30 584,505.30 584,505.30 585,505.30 585,504.50 586,504.50 586,504.50 587,504.50 587,504.50 588,504.50 588,504.50 589,504.50 589,505.30 590,505.30 590,505.30 591,505.30 591,505.30 592,505.30 592,505.30 593,505.30 593,505.30 594,505.30 594,505.90 595,505.90 595,505.90 596,505.90 596,505.90 597,505.90 597,505.90 598,505.90 598,505.90 599,505.90 599,505.90 600,505.90 600,505.90 601,505.90 601,505.90 602,505.90 602,505.90 603,505.90 603,505.90 604,505.90 604,505.90 605,505.90 605,505.90 606,505.90 606,505.90 607,505.90 607,505.90 608,505.90 608,505.90 609,505.90 609,505.90 610,505.90 610,505.90 611,505.90 611,505.90 612,505.90 612,505.30 613,505.30 613,505.30 614,505.30 614,505.30 615,505.30 615,505.30 616,505.30 616,505.30 617,505.30 617,505.30 618,505.30 618,505.30 619,505.30 619,505.30 620,505.30 620,505.30 621,505.30 621,505.30 622,505.30 622,505.30 623,505.30 623,505.90 624,505.90 624,505.90 625,505.90 625,505.90 626,505.90 626,504.50 627,504.50 627,504.50 628,504.50 628,504.50 629,504.50 629,505.30 630,505.30 630,505.30 631,505.30 631,505.30 632,505.30 632,505.30 633,505.30 633,505.30 634,505.30 634,504.50 635,504.50 635,504.50 636,504.50 636,504.50 637,504.50 637,504.50 638,504.50 638,504.50 639,504.50 639,504.50 640,504.50 640,504.50 641,504.50 641,504.50 642,504.50 642,504.50 643,504.50 643,504.50 644,504.50 644,504.50 645,504.50 645,504.50 646,504.50 646,504.50 647,504.50 647,504.50 648,504.50 648,505.90 649,505.90 649,505.90 650,505.90 650,505.30 651,505.30 651,505.30 652,505.30 652,505.30 653,505.30 653,505.30 654,505.30 654,505.30 655,505.30 655,505.30 656,505.30 656,505.30 657,505.30 657,505.30 658,505.30 658,505.30 659,505.30 659,505.30 660,505.30 660,505.30 661,505.30 661,505.30 662,505.30 662,505.30 663,505.30 663,505.30 664,505.30 664,505.30 665,505.30 665,505.30 666,505.30 666,505.30 667,505.30 667,505.30 668,505.30 668,505.30 669,505.30 669,505.30 670,505.30 670,503.70 671,503.70 671,503.70 672,503.70 672,503.70 673,503.70 673,503.70 674,503.70 674,503.70 675,503.70 675,503.70 676,503.70 676,505.30 677,505.30 677,505.30 678,505.30 678,505.30 679,505.30 679,505.30 680,505.30 680,505.30 681,505.30 681,505.30 682,505.30 682,505.30 683,505.30 683,505.30 684,505.30 684,505.30 685,505.30 685,505.30 686,505.30 686,505.90 687,505.90 687,505.90 688,505.90 688,505.90 689,505.90 689,505.90 690,505.90 690,505.90 691,505.90 691,505.90 692,505.90 692,505.90 693,505.90 693,505.90 694,505.90 694,505.90 695,505.90 695,505.90 696,505.90 696,505.90 697,505.90 697,505.90 698,505.90 698,505.90 699,505.90 699,505.90 700,505.90 700,505.90 701,505.90 701,505.90 702,505.90 702,505.90 703,505.90 703,505.90 704,505.90 704,505.90 705,505.90 705,505.90 706,505.90 706,505.90 707,505.90 707,505.90 708,505.90 708,505.30 709,505.30 709,505.30 710,505.30 710,505.30 711,505.30 711,505.30 712,505.30 712,505.30 713,505.30 713,505.30 714,505.30 714,505.30 715,505.30 715,504.50 716,504.50 716,504.50 717,504.50 717,504.50 718,504.50 718,504.50 719,504.50 719,504.50 720,504.50 720,505.30 721,505.30 721,505.30 722,505.30 722,505.30 723,505.30 723,505.30 724,505.30 724,504.50 725,504.50 725,504.50 726,504.50 726,504.50 727,504.50 727,505.90 728,505.90 728,505.90 729,505.90 729,505.90 730,505.90 730,505.90 731,505.90 731,505.30 732,505.30 732,505.30 733,505.30 733,505.30 734,505.30 734,503.70 735,503.70 735,503.70 736,503.70 736,503.70 737,503.70 737,504.50 738,504.50 738,504.50 739,504.50 739,505.30 740,505.30 740,505.30 741,505.30 741,505.30 742,505.30 742,505.30 743,505.30 743,505.30 744,505.30 744,505.30 745,505.30 745,505.30 746,505.30 746,505.30 747,505.30 747,505.30 748,505.30 748,505.30 749,505.30 749,505.30 750,505.30 750,505.30 751,505.30 751,505.30 752,505.30 752,503.70 753,503.70 753,503.70 754,503.70 754,503.70 755,503.70 755,503.70 756,503.70 756,503.70 757,503.70 757,505.30 758,505.30 758,505.30 759,505.30 759,505.30 760,505.30 760,505.30 761,505.30 761,505.30 762,505.30 762,504.50 763,504.50 763,504.50 764,504.50 764,505.30 765,505.30 765,505.30 766,505.30 766,505.30 767,505.30 767,505.30 768,505.30 768,505.30 769,505.30" fill="none" stroke="#b9a85a" stroke-width="1"/><g stroke="rgba(204,204,220,0.11)" stroke-width="1"><line x1="140.5" y1="353.0" x2="140.5" y2="511.5"/><line x1="229.5" y1="353.0" x2="229.5" y2="511.5"/><line x1="318.5" y1="353.0" x2="318.5" y2="511.5"/><line x1="407.5" y1="353.0" x2="407.5" y2="511.5"/><line x1="497.5" y1="353.0" x2="497.5" y2="511.5"/><line x1="586.5" y1="353.0" x2="586.5" y2="511.5"/><line x1="675.5" y1="353.0" x2="675.5" y2="511.5"/><line x1="765.5" y1="353.0" x2="765.5" y2="511.5"/><line x1="54.0" y1="477.5" x2="769.0" y2="477.5"/><line x1="54.0" y1="446.5" x2="769.0" y2="446.5"/><line x1="54.0" y1="415.5" x2="769.0" y2="415.5"/><line x1="54.0" y1="384.5" x2="769.0" y2="384.5"/><line x1="54.0" y1="353.5" x2="769.0" y2="353.5"/></g></svg><div class="lb" style="left:0;width:48px;text-align:right;top:501.5px;letter-spacing:0.3px">0%</div><div class="lb" style="left:0;width:48px;text-align:right;top:470.4px;letter-spacing:0.3px">20%</div><div class="lb" style="left:0;width:48px;text-align:right;top:439.3px;letter-spacing:0.3px">40%</div><div class="lb" style="left:0;width:48px;text-align:right;top:408.2px;letter-spacing:0.3px">60%</div><div class="lb" style="left:0;width:48px;text-align:right;top:377.1px;letter-spacing:0.3px">80%</div><div class="lb" style="left:0;width:48px;text-align:right;top:346.0px;letter-spacing:0.3px">100%</div><div class="abs" style="left:0;top:510px;width:777px;height:24px;overflow:hidden"><div class="lb xl" style="left:89.5px;width:100px;text-align:center;top:6px">07/05 18:00</div><div class="lb xl" style="left:178.8px;width:100px;text-align:center;top:6px">07/06 00:00</div><div class="lb xl" style="left:268.2px;width:100px;text-align:center;top:6px">07/06 06:00</div><div class="lb xl" style="left:357.5px;width:100px;text-align:center;top:6px">07/06 12:00</div><div class="lb xl" style="left:446.8px;width:100px;text-align:center;top:6px">07/06 18:00</div><div class="lb xl" style="left:536.1px;width:100px;text-align:center;top:6px">07/07 00:00</div><div class="lb xl" style="left:625.5px;width:100px;text-align:center;top:6px">07/07 06:00</div><div class="lb xl" style="left:714.8px;width:100px;text-align:center;top:6px">07/07 12:00</div></div><svg class="abs" style="left:0;top:0" width="1585" height="563"><path d="M843.0,368.9 L1559.0,368.9 L1559.0,508.5 L843.0,508.5 Z" fill="#445c42"/><path d="M843,384.50 844,384.50 844,383.01 845,383.01 845,384.50 846,384.50 846,384.50 847,384.50 847,384.50 848,384.50 848,384.50 849,384.50 849,384.50 850,384.50 850,384.50 851,384.50 851,384.50 852,384.50 852,384.50 853,384.50 853,384.50 854,384.50 854,384.50 855,384.50 855,384.50 856,384.50 856,384.50 857,384.50 857,384.50 858,384.50 858,384.50 859,384.50 859,384.50 860,384.50 860,384.50 861,384.50 861,384.50 862,384.50 862,384.50 863,384.50 863,384.50 864,384.50 864,384.50 865,384.50 865,384.50 866,384.50 866,384.50 867,384.50 867,384.50 868,384.50 868,383.93 869,383.93 869,384.50 870,384.50 870,384.50 871,384.50 871,384.50 872,384.50 872,384.50 873,384.50 873,384.50 874,384.50 874,384.50 875,384.50 875,384.50 876,384.50 876,384.50 877,384.50 877,385.50 878,385.50 878,385.50 879,385.50 879,385.50 880,385.50 880,385.50 881,385.50 881,385.50 882,385.50 882,385.50 883,385.50 883,385.50 884,385.50 884,385.50 885,385.50 885,385.50 886,385.50 886,385.50 887,385.50 887,385.50 888,385.50 888,385.50 889,385.50 889,385.50 890,385.50 890,385.50 891,385.50 891,385.50 892,385.50 892,385.50 893,385.50 893,385.50 894,385.50 894,385.50 895,385.50 895,385.50 896,385.50 896,385.50 897,385.50 897,385.50 898,385.50 898,385.50 899,385.50 899,385.50 900,385.50 900,385.50 901,385.50 901,385.50 902,385.50 902,385.50 903,385.50 903,385.50 904,385.50 904,385.50 905,385.50 905,385.50 906,385.50 906,385.50 907,385.50 907,385.50 908,385.50 908,385.50 909,385.50 909,385.50 910,385.50 910,385.50 911,385.50 911,385.50 912,385.50 912,385.50 913,385.50 913,385.50 914,385.50 914,385.50 915,385.50 915,385.50 916,385.50 916,385.50 917,385.50 917,385.50 918,385.50 918,385.50 919,385.50 919,385.50 920,385.50 920,385.50 921,385.50 921,385.50 922,385.50 922,385.50 923,385.50 923,385.50 924,385.50 924,385.50 925,385.50 925,385.50 926,385.50 926,385.50 927,385.50 927,385.50 928,385.50 928,385.50 929,385.50 929,385.50 930,385.50 930,385.50 931,385.50 931,385.50 932,385.50 932,385.50 933,385.50 933,385.50 934,385.50 934,385.50 935,385.50 935,385.50 936,385.50 936,385.50 937,385.50 937,385.50 938,385.50 938,385.50 939,385.50 939,385.50 940,385.50 940,385.50 941,385.50 941,385.50 942,385.50 942,385.50 943,385.50 943,385.50 944,385.50 944,385.50 945,385.50 945,385.50 946,385.50 946,385.50 947,385.50 947,385.50 948,385.50 948,385.50 949,385.50 949,385.50 950,385.50 950,385.50 951,385.50 951,385.50 952,385.50 952,384.20 953,384.20 953,385.50 954,385.50 954,385.50 955,385.50 955,385.50 956,385.50 956,385.50 957,385.50 957,385.50 958,385.50 958,385.50 959,385.50 959,385.50 960,385.50 960,385.50 961,385.50 961,385.50 962,385.50 962,385.50 963,385.50 963,385.50 964,385.50 964,385.50 965,385.50 965,385.50 966,385.50 966,385.50 967,385.50 967,385.50 968,385.50 968,385.50 969,385.50 969,385.50 970,385.50 970,384.94 971,384.94 971,384.81 972,384.81 972,385.50 973,385.50 973,385.50 974,385.50 974,385.50 975,385.50 975,385.50 976,385.50 976,385.50 977,385.50 977,385.50 978,385.50 978,385.50 979,385.50 979,385.50 980,385.50 980,385.50 981,385.50 981,385.50 982,385.50 982,385.50 983,385.50 983,385.50 984,385.50 984,385.50 985,385.50 985,385.50 986,385.50 986,385.50 987,385.50 987,385.50 988,385.50 988,385.50 989,385.50 989,385.50 990,385.50 990,385.50 991,385.50 991,385.50 992,385.50 992,385.50 993,385.50 993,385.50 994,385.50 994,385.50 995,385.50 995,385.50 996,385.50 996,385.50 997,385.50 997,385.50 998,385.50 998,385.50 999,385.50 999,385.50 1000,385.50 1000,385.50 1001,385.50 1001,385.50 1002,385.50 1002,385.50 1003,385.50 1003,385.50 1004,385.50 1004,385.50 1005,385.50 1005,385.50 1006,385.50 1006,385.50 1007,385.50 1007,385.50 1008,385.50 1008,385.50 1009,385.50 1009,385.50 1010,385.50 1010,385.50 1011,385.50 1011,385.50 1012,385.50 1012,385.50 1013,385.50 1013,385.50 1014,385.50 1014,385.50 1015,385.50 1015,385.50 1016,385.50 1016,385.50 1017,385.50 1017,385.50 1018,385.50 1018,385.50 1019,385.50 1019,385.50 1020,385.50 1020,385.50 1021,385.50 1021,385.50 1022,385.50 1022,385.50 1023,385.50 1023,385.50 1024,385.50 1024,385.50 1025,385.50 1025,385.50 1026,385.50 1026,385.50 1027,385.50 1027,385.50 1028,385.50 1028,385.50 1029,385.50 1029,385.50 1030,385.50 1030,385.50 1031,385.50 1031,385.50 1032,385.50 1032,385.50 1033,385.50 1033,384.97 1034,384.97 1034,385.50 1035,385.50 1035,385.50 1036,385.50 1036,385.50 1037,385.50 1037,385.50 1038,385.50 1038,385.50 1039,385.50 1039,385.50 1040,385.50 1040,385.50 1041,385.50 1041,385.50 1042,385.50 1042,384.89 1043,384.89 1043,385.50 1044,385.50 1044,385.50 1045,385.50 1045,385.50 1046,385.50 1046,385.50 1047,385.50 1047,384.86 1048,384.86 1048,385.50 1049,385.50 1049,385.50 1050,385.50 1050,385.50 1051,385.50 1051,385.50 1052,385.50 1052,385.50 1053,385.50 1053,385.50 1054,385.50 1054,385.50 1055,385.50 1055,385.50 1056,385.50 1056,385.50 1057,385.50 1057,385.50 1058,385.50 1058,385.50 1059,385.50 1059,385.50 1060,385.50 1060,385.50 1061,385.50 1061,385.50 1062,385.50 1062,385.50 1063,385.50 1063,385.50 1064,385.50 1064,384.05 1065,384.05 1065,385.50 1066,385.50 1066,385.50 1067,385.50 1067,385.50 1068,385.50 1068,385.50 1069,385.50 1069,385.50 1070,385.50 1070,385.50 1071,385.50 1071,385.50 1072,385.50 1072,385.50 1073,385.50 1073,385.50 1074,385.50 1074,385.50 1075,385.50 1075,385.50 1076,385.50 1076,385.50 1077,385.50 1077,385.50 1078,385.50 1078,385.50 1079,385.50 1079,385.50 1080,385.50 1080,385.50 1081,385.50 1081,385.50 1082,385.50 1082,385.50 1083,385.50 1083,385.50 1084,385.50 1084,385.50 1085,385.50 1085,385.50 1086,385.50 1086,385.50 1087,385.50 1087,385.50 1088,385.50 1088,384.48 1089,384.48 1089,385.50 1090,385.50 1090,385.50 1091,385.50 1091,385.50 1092,385.50 1092,385.50 1093,385.50 1093,385.50 1094,385.50 1094,385.50 1095,385.50 1095,385.50 1096,385.50 1096,385.50 1097,385.50 1097,385.50 1098,385.50 1098,385.50 1099,385.50 1099,385.50 1100,385.50 1100,385.50 1101,385.50 1101,385.50 1102,385.50 1102,385.50 1103,385.50 1103,385.50 1104,385.50 1104,385.50 1105,385.50 1105,385.50 1106,385.50 1106,385.50 1107,385.50 1107,385.50 1108,385.50 1108,385.50 1109,385.50 1109,385.50 1110,385.50 1110,385.50 1111,385.50 1111,385.50 1112,385.50 1112,385.50 1113,385.50 1113,385.50 1114,385.50 1114,385.50 1115,385.50 1115,385.50 1116,385.50 1116,385.50 1117,385.50 1117,385.50 1118,385.50 1118,385.50 1119,385.50 1119,385.50 1120,385.50 1120,385.50 1121,385.50 1121,385.50 1122,385.50 1122,385.50 1123,385.50 1123,385.50 1124,385.50 1124,385.50 1125,385.50 1125,385.50 1126,385.50 1126,385.50 1127,385.50 1127,385.50 1128,385.50 1128,385.50 1129,385.50 1129,385.50 1130,385.50 1130,385.50 1131,385.50 1131,385.50 1132,385.50 1132,385.50 1133,385.50 1133,385.50 1134,385.50 1134,385.50 1135,385.50 1135,385.50 1136,385.50 1136,385.50 1137,385.50 1137,385.50 1138,385.50 1138,385.50 1139,385.50 1139,385.50 1140,385.50 1140,385.50 1141,385.50 1141,384.42 1142,384.42 1142,385.50 1143,385.50 1143,385.50 1144,385.50 1144,385.50 1145,385.50 1145,385.50 1146,385.50 1146,385.50 1147,385.50 1147,385.50 1148,385.50 1148,385.50 1149,385.50 1149,385.50 1150,385.50 1150,385.50 1151,385.50 1151,385.50 1152,385.50 1152,385.50 1153,385.50 1153,385.50 1154,385.50 1154,385.50 1155,385.50 1155,385.50 1156,385.50 1156,385.50 1157,385.50 1157,385.50 1158,385.50 1158,385.50 1159,385.50 1159,385.50 1160,385.50 1160,385.50 1161,385.50 1161,385.50 1162,385.50 1162,385.50 1163,385.50 1163,385.50 1164,385.50 1164,385.50 1165,385.50 1165,385.50 1166,385.50 1166,385.50 1167,385.50 1167,385.50 1168,385.50 1168,385.50 1169,385.50 1169,385.50 1170,385.50 1170,385.50 1171,385.50 1171,385.50 1172,385.50 1172,385.50 1173,385.50 1173,385.50 1174,385.50 1174,385.50 1175,385.50 1175,385.50 1176,385.50 1176,385.50 1177,385.50 1177,385.50 1178,385.50 1178,385.50 1179,385.50 1179,385.50 1180,385.50 1180,385.50 1181,385.50 1181,385.50 1182,385.50 1182,384.15 1183,384.15 1183,385.50 1184,385.50 1184,385.50 1185,385.50 1185,385.50 1186,385.50 1186,385.50 1187,385.50 1187,384.74 1188,384.74 1188,385.50 1189,385.50 1189,384.76 1190,384.76 1190,385.50 1191,385.50 1191,385.50 1192,385.50 1192,385.50 1193,385.50 1193,385.50 1194,385.50 1194,385.50 1195,385.50 1195,385.50 1196,385.50 1196,385.50 1197,385.50 1197,385.50 1198,385.50 1198,385.50 1199,385.50 1199,385.50 1200,385.50 1200,385.50 1201,385.50 1201,385.50 1202,385.50 1202,385.50 1203,385.50 1203,385.50 1204,385.50 1204,385.50 1205,385.50 1205,385.50 1206,385.50 1206,385.50 1207,385.50 1207,385.50 1208,385.50 1208,385.50 1209,385.50 1209,385.50 1210,385.50 1210,385.50 1211,385.50 1211,385.50 1212,385.50 1212,385.50 1213,385.50 1213,384.14 1214,384.14 1214,385.50 1215,385.50 1215,385.50 1216,385.50 1216,385.50 1217,385.50 1217,385.50 1218,385.50 1218,385.50 1219,385.50 1219,384.17 1220,384.17 1220,385.50 1221,385.50 1221,385.50 1222,385.50 1222,385.50 1223,385.50 1223,385.50 1224,385.50 1224,385.50 1225,385.50 1225,385.50 1226,385.50 1226,385.50 1227,385.50 1227,385.50 1228,385.50 1228,385.50 1229,385.50 1229,385.50 1230,385.50 1230,385.50 1231,385.50 1231,385.50 1232,385.50 1232,384.21 1233,384.21 1233,385.50 1234,385.50 1234,385.50 1235,385.50 1235,385.50 1236,385.50 1236,385.50 1237,385.50 1237,385.50 1238,385.50 1238,385.50 1239,385.50 1239,385.50 1240,385.50 1240,385.50 1241,385.50 1241,385.50 1242,385.50 1242,385.50 1243,385.50 1243,385.50 1244,385.50 1244,385.50 1245,385.50 1245,385.50 1246,385.50 1246,385.50 1247,385.50 1247,385.50 1248,385.50 1248,385.50 1249,385.50 1249,385.50 1250,385.50 1250,385.50 1251,385.50 1251,385.50 1252,385.50 1252,385.50 1253,385.50 1253,385.50 1254,385.50 1254,385.50 1255,385.50 1255,385.50 1256,385.50 1256,385.50 1257,385.50 1257,385.50 1258,385.50 1258,385.50 1259,385.50 1259,385.50 1260,385.50 1260,385.50 1261,385.50 1261,385.50 1262,385.50 1262,385.50 1263,385.50 1263,385.50 1264,385.50 1264,385.50 1265,385.50 1265,385.50 1266,385.50 1266,385.50 1267,385.50 1267,385.50 1268,385.50 1268,385.50 1269,385.50 1269,385.50 1270,385.50 1270,385.50 1271,385.50 1271,385.50 1272,385.50 1272,385.50 1273,385.50 1273,385.50 1274,385.50 1274,385.50 1275,385.50 1275,385.50 1276,385.50 1276,385.50 1277,385.50 1277,385.50 1278,385.50 1278,385.50 1279,385.50 1279,385.50 1280,385.50 1280,385.50 1281,385.50 1281,385.50 1282,385.50 1282,385.50 1283,385.50 1283,385.50 1284,385.50 1284,385.50 1285,385.50 1285,385.50 1286,385.50 1286,385.50 1287,385.50 1287,385.50 1288,385.50 1288,385.50 1289,385.50 1289,385.50 1290,385.50 1290,385.50 1291,385.50 1291,385.50 1292,385.50 1292,385.50 1293,385.50 1293,385.50 1294,385.50 1294,385.50 1295,385.50 1295,385.50 1296,385.50 1296,385.50 1297,385.50 1297,385.50 1298,385.50 1298,385.50 1299,385.50 1299,385.50 1300,385.50 1300,385.50 1301,385.50 1301,385.50 1302,385.50 1302,385.50 1303,385.50 1303,385.50 1304,385.50 1304,385.50 1305,385.50 1305,385.50 1306,385.50 1306,385.50 1307,385.50 1307,385.50 1308,385.50 1308,385.50 1309,385.50 1309,385.50 1310,385.50 1310,385.50 1311,385.50 1311,385.50 1312,385.50 1312,385.50 1313,385.50 1313,385.50 1314,385.50 1314,385.50 1315,385.50 1315,385.50 1316,385.50 1316,385.50 1317,385.50 1317,385.50 1318,385.50 1318,385.50 1319,385.50 1319,385.50 1320,385.50 1320,385.50 1321,385.50 1321,385.50 1322,385.50 1322,385.50 1323,385.50 1323,385.50 1324,385.50 1324,385.50 1325,385.50 1325,385.50 1326,385.50 1326,385.50 1327,385.50 1327,385.50 1328,385.50 1328,385.50 1329,385.50 1329,385.50 1330,385.50 1330,385.50 1331,385.50 1331,385.50 1332,385.50 1332,385.50 1333,385.50 1333,385.50 1334,385.50 1334,385.50 1335,385.50 1335,385.50 1336,385.50 1336,385.50 1337,385.50 1337,385.50 1338,385.50 1338,385.50 1339,385.50 1339,385.50 1340,385.50 1340,385.50 1341,385.50 1341,385.50 1342,385.50 1342,385.50 1343,385.50 1343,385.50 1344,385.50 1344,385.50 1345,385.50 1345,385.50 1346,385.50 1346,385.50 1347,385.50 1347,385.50 1348,385.50 1348,385.50 1349,385.50 1349,385.50 1350,385.50 1350,385.50 1351,385.50 1351,385.50 1352,385.50 1352,385.50 1353,385.50 1353,385.50 1354,385.50 1354,384.30 1355,384.30 1355,383.75 1356,383.75 1356,384.30 1357,384.30 1357,384.30 1358,384.30 1358,384.30 1359,384.30 1359,384.30 1360,384.30 1360,384.30 1361,384.30 1361,384.30 1362,384.30 1362,384.30 1363,384.30 1363,384.30 1364,384.30 1364,384.30 1365,384.30 1365,384.30 1366,384.30 1366,384.30 1367,384.30 1367,384.30 1368,384.30 1368,384.30 1369,384.30 1369,384.30 1370,384.30 1370,384.30 1371,384.30 1371,384.30 1372,384.30 1372,384.30 1373,384.30 1373,384.30 1374,384.30 1374,384.30 1375,384.30 1375,384.30 1376,384.30 1376,384.30 1377,384.30 1377,384.30 1378,384.30 1378,384.30 1379,384.30 1379,384.30 1380,384.30 1380,384.30 1381,384.30 1381,384.30 1382,384.30 1382,384.30 1383,384.30 1383,384.30 1384,384.30 1384,384.30 1385,384.30 1385,385.50 1386,385.50 1386,385.50 1387,385.50 1387,385.50 1388,385.50 1388,385.50 1389,385.50 1389,385.50 1390,385.50 1390,385.50 1391,385.50 1391,385.50 1392,385.50 1392,385.50 1393,385.50 1393,385.50 1394,385.50 1394,385.50 1395,385.50 1395,385.50 1396,385.50 1396,385.50 1397,385.50 1397,385.50 1398,385.50 1398,385.50 1399,385.50 1399,385.50 1400,385.50 1400,385.50 1401,385.50 1401,385.50 1402,385.50 1402,385.50 1403,385.50 1403,385.50 1404,385.50 1404,385.50 1405,385.50 1405,385.50 1406,385.50 1406,385.50 1407,385.50 1407,385.50 1408,385.50 1408,385.50 1409,385.50 1409,385.50 1410,385.50 1410,385.50 1411,385.50 1411,384.37 1412,384.37 1412,385.50 1413,385.50 1413,385.50 1414,385.50 1414,385.50 1415,385.50 1415,385.50 1416,385.50 1416,385.50 1417,385.50 1417,385.50 1418,385.50 1418,385.50 1419,385.50 1419,384.13 1420,384.13 1420,385.50 1421,385.50 1421,385.50 1422,385.50 1422,385.50 1423,385.50 1423,385.50 1424,385.50 1424,385.50 1425,385.50 1425,384.98 1426,384.98 1426,385.50 1427,385.50 1427,385.50 1428,385.50 1428,385.50 1429,385.50 1429,385.50 1430,385.50 1430,385.50 1431,385.50 1431,385.50 1432,385.50 1432,385.50 1433,385.50 1433,385.50 1434,385.50 1434,385.50 1435,385.50 1435,385.50 1436,385.50 1436,385.50 1437,385.50 1437,385.50 1438,385.50 1438,385.50 1439,385.50 1439,385.50 1440,385.50 1440,385.50 1441,385.50 1441,385.50 1442,385.50 1442,385.50 1443,385.50 1443,385.50 1444,385.50 1444,385.50 1445,385.50 1445,385.50 1446,385.50 1446,385.50 1447,385.50 1447,385.50 1448,385.50 1448,385.50 1449,385.50 1449,384.33 1450,384.33 1450,385.50 1451,385.50 1451,385.50 1452,385.50 1452,385.50 1453,385.50 1453,385.50 1454,385.50 1454,385.50 1455,385.50 1455,385.50 1456,385.50 1456,385.50 1457,385.50 1457,385.50 1458,385.50 1458,385.50 1459,385.50 1459,385.50 1460,385.50 1460,385.50 1461,385.50 1461,385.50 1462,385.50 1462,385.50 1463,385.50 1463,385.50 1464,385.50 1464,385.50 1465,385.50 1465,385.50 1466,385.50 1466,385.50 1467,385.50 1467,385.50 1468,385.50 1468,385.50 1469,385.50 1469,385.50 1470,385.50 1470,385.50 1471,385.50 1471,384.90 1472,384.90 1472,384.90 1473,384.90 1473,384.90 1474,384.90 1474,384.30 1475,384.30 1475,384.60 1476,384.60 1476,384.60 1477,384.60 1477,384.30 1478,384.30 1478,384.60 1479,384.60 1479,384.60 1480,384.60 1480,384.90 1481,384.90 1481,384.60 1482,384.60 1482,384.60 1483,384.60 1483,384.60 1484,384.60 1484,384.30 1485,384.30 1485,384.90 1486,384.90 1486,384.30 1487,384.30 1487,384.90 1488,384.90 1488,384.30 1489,384.30 1489,384.60 1490,384.60 1490,384.60 1491,384.60 1491,384.60 1492,384.60 1492,384.30 1493,384.30 1493,384.30 1494,384.30 1494,384.60 1495,384.60 1495,384.90 1496,384.90 1496,384.60 1497,384.60 1497,384.60 1498,384.60 1498,384.60 1499,384.60 1499,384.90 1500,384.90 1500,384.60 1501,384.60 1501,384.60 1502,384.60 1502,384.60 1503,384.60 1503,384.90 1504,384.90 1504,384.60 1505,384.60 1505,384.30 1506,384.30 1506,384.90 1507,384.90 1507,384.60 1508,384.60 1508,384.30 1509,384.30 1509,384.60 1510,384.60 1510,384.30 1511,384.30 1511,384.30 1512,384.30 1512,384.60 1513,384.60 1513,384.60 1514,384.60 1514,384.30 1515,384.30 1515,384.30 1516,384.30 1516,384.60 1517,384.60 1517,384.60 1518,384.60 1518,384.90 1519,384.90 1519,384.60 1520,384.60 1520,384.60 1521,384.60 1521,384.90 1522,384.90 1522,384.90 1523,384.90 1523,384.60 1524,384.60 1524,384.60 1525,384.60 1525,384.60 1526,384.60 1526,384.30 1527,384.30 1527,384.60 1528,384.60 1528,384.60 1529,384.60 1529,384.90 1530,384.90 1530,384.60 1531,384.60 1531,384.90 1532,384.90 1532,384.30 1533,384.30 1533,384.60 1534,384.60 1534,384.90 1535,384.90 1535,384.60 1536,384.60 1536,384.90 1537,384.90 1537,384.60 1538,384.60 1538,384.60 1539,384.60 1539,384.60 1540,384.60 1540,384.60 1541,384.60 1541,384.60 1542,384.60 1542,384.30 1543,384.30 1543,384.90 1544,384.90 1544,384.90 1545,384.90 1545,384.90 1546,384.90 1546,384.60 1547,384.60 1547,384.60 1548,384.60 1548,384.90 1549,384.90 1549,384.30 1550,384.30 1550,384.60 1551,384.60 1551,384.90 1552,384.90 1552,384.30 1553,384.30 1553,384.90 1554,384.90 1554,384.60 1555,384.60 1555,384.60 1556,384.60 1556,384.90 1557,384.90 1557,384.60 1558,384.60 1558,384.60 1559,384.60 L1559,508.50 843,508.50 Z" fill="#122338"/><path d="M843,448.40 844,448.40 844,446.91 845,446.91 845,448.40 846,448.40 846,448.40 847,448.40 847,448.40 848,448.40 848,448.40 849,448.40 849,448.40 850,448.40 850,448.40 851,448.40 851,448.40 852,448.40 852,448.40 853,448.40 853,448.40 854,448.40 854,448.40 855,448.40 855,448.40 856,448.40 856,448.40 857,448.40 857,448.40 858,448.40 858,448.40 859,448.40 859,448.40 860,448.40 860,448.40 861,448.40 861,448.40 862,448.40 862,448.40 863,448.40 863,448.40 864,448.40 864,448.40 865,448.40 865,448.40 866,448.40 866,448.40 867,448.40 867,448.40 868,448.40 868,447.83 869,447.83 869,448.40 870,448.40 870,448.40 871,448.40 871,448.40 872,448.40 872,448.40 873,448.40 873,448.40 874,448.40 874,448.40 875,448.40 875,448.40 876,448.40 876,448.40 877,448.40 877,449.40 878,449.40 878,449.40 879,449.40 879,449.40 880,449.40 880,449.40 881,449.40 881,449.40 882,449.40 882,449.40 883,449.40 883,449.40 884,449.40 884,449.40 885,449.40 885,449.40 886,449.40 886,449.40 887,449.40 887,449.40 888,449.40 888,449.40 889,449.40 889,449.40 890,449.40 890,449.40 891,449.40 891,449.40 892,449.40 892,449.40 893,449.40 893,449.40 894,449.40 894,449.40 895,449.40 895,449.40 896,449.40 896,449.40 897,449.40 897,449.40 898,449.40 898,449.40 899,449.40 899,449.40 900,449.40 900,449.40 901,449.40 901,449.40 902,449.40 902,449.40 903,449.40 903,449.40 904,449.40 904,449.40 905,449.40 905,449.40 906,449.40 906,449.40 907,449.40 907,449.40 908,449.40 908,449.40 909,449.40 909,449.40 910,449.40 910,449.40 911,449.40 911,449.40 912,449.40 912,449.40 913,449.40 913,449.40 914,449.40 914,449.40 915,449.40 915,449.40 916,449.40 916,449.40 917,449.40 917,449.40 918,449.40 918,449.40 919,449.40 919,449.40 920,449.40 920,449.40 921,449.40 921,449.40 922,449.40 922,449.40 923,449.40 923,449.40 924,449.40 924,449.40 925,449.40 925,449.40 926,449.40 926,449.40 927,449.40 927,449.40 928,449.40 928,449.40 929,449.40 929,449.40 930,449.40 930,449.40 931,449.40 931,449.40 932,449.40 932,449.40 933,449.40 933,449.40 934,449.40 934,449.40 935,449.40 935,449.40 936,449.40 936,449.40 937,449.40 937,449.40 938,449.40 938,449.40 939,449.40 939,449.40 940,449.40 940,449.40 941,449.40 941,449.40 942,449.40 942,449.40 943,449.40 943,449.40 944,449.40 944,449.40 945,449.40 945,449.40 946,449.40 946,449.40 947,449.40 947,449.40 948,449.40 948,449.40 949,449.40 949,449.40 950,449.40 950,449.40 951,449.40 951,449.40 952,449.40 952,448.10 953,448.10 953,449.40 954,449.40 954,449.40 955,449.40 955,449.40 956,449.40 956,449.40 957,449.40 957,449.40 958,449.40 958,449.40 959,449.40 959,449.40 960,449.40 960,449.40 961,449.40 961,449.40 962,449.40 962,449.40 963,449.40 963,449.40 964,449.40 964,449.40 965,449.40 965,449.40 966,449.40 966,449.40 967,449.40 967,449.40 968,449.40 968,449.40 969,449.40 969,449.40 970,449.40 970,448.84 971,448.84 971,448.71 972,448.71 972,449.40 973,449.40 973,449.40 974,449.40 974,449.40 975,449.40 975,449.40 976,449.40 976,449.40 977,449.40 977,449.40 978,449.40 978,449.40 979,449.40 979,449.40 980,449.40 980,449.40 981,449.40 981,449.40 982,449.40 982,449.40 983,449.40 983,449.40 984,449.40 984,449.40 985,449.40 985,449.40 986,449.40 986,449.40 987,449.40 987,449.40 988,449.40 988,449.40 989,449.40 989,449.40 990,449.40 990,449.40 991,449.40 991,449.40 992,449.40 992,449.40 993,449.40 993,449.40 994,449.40 994,449.40 995,449.40 995,449.40 996,449.40 996,449.40 997,449.40 997,449.40 998,449.40 998,449.40 999,449.40 999,449.40 1000,449.40 1000,449.40 1001,449.40 1001,449.40 1002,449.40 1002,449.40 1003,449.40 1003,449.40 1004,449.40 1004,449.40 1005,449.40 1005,449.40 1006,449.40 1006,449.40 1007,449.40 1007,449.40 1008,449.40 1008,449.40 1009,449.40 1009,449.40 1010,449.40 1010,449.40 1011,449.40 1011,449.40 1012,449.40 1012,449.40 1013,449.40 1013,449.40 1014,449.40 1014,449.40 1015,449.40 1015,449.40 1016,449.40 1016,449.40 1017,449.40 1017,449.40 1018,449.40 1018,449.40 1019,449.40 1019,449.40 1020,449.40 1020,449.40 1021,449.40 1021,449.40 1022,449.40 1022,449.40 1023,449.40 1023,449.40 1024,449.40 1024,449.40 1025,449.40 1025,449.40 1026,449.40 1026,449.40 1027,449.40 1027,449.40 1028,449.40 1028,449.40 1029,449.40 1029,449.40 1030,449.40 1030,449.40 1031,449.40 1031,449.40 1032,449.40 1032,449.40 1033,449.40 1033,448.87 1034,448.87 1034,449.40 1035,449.40 1035,449.40 1036,449.40 1036,449.40 1037,449.40 1037,449.40 1038,449.40 1038,449.40 1039,449.40 1039,449.40 1040,449.40 1040,449.40 1041,449.40 1041,449.40 1042,449.40 1042,448.79 1043,448.79 1043,449.40 1044,449.40 1044,449.40 1045,449.40 1045,449.40 1046,449.40 1046,449.40 1047,449.40 1047,448.76 1048,448.76 1048,449.40 1049,449.40 1049,449.40 1050,449.40 1050,449.40 1051,449.40 1051,449.40 1052,449.40 1052,449.40 1053,449.40 1053,449.40 1054,449.40 1054,449.40 1055,449.40 1055,449.40 1056,449.40 1056,449.40 1057,449.40 1057,449.40 1058,449.40 1058,449.40 1059,449.40 1059,449.40 1060,449.40 1060,449.40 1061,449.40 1061,449.40 1062,449.40 1062,449.40 1063,449.40 1063,449.40 1064,449.40 1064,447.95 1065,447.95 1065,449.40 1066,449.40 1066,449.40 1067,449.40 1067,449.40 1068,449.40 1068,449.40 1069,449.40 1069,449.40 1070,449.40 1070,449.40 1071,449.40 1071,449.40 1072,449.40 1072,449.40 1073,449.40 1073,449.40 1074,449.40 1074,449.40 1075,449.40 1075,449.40 1076,449.40 1076,449.40 1077,449.40 1077,449.40 1078,449.40 1078,449.40 1079,449.40 1079,449.40 1080,449.40 1080,449.40 1081,449.40 1081,449.40 1082,449.40 1082,449.40 1083,449.40 1083,449.40 1084,449.40 1084,449.40 1085,449.40 1085,449.40 1086,449.40 1086,449.40 1087,449.40 1087,449.40 1088,449.40 1088,448.38 1089,448.38 1089,449.40 1090,449.40 1090,449.40 1091,449.40 1091,449.40 1092,449.40 1092,449.40 1093,449.40 1093,449.40 1094,449.40 1094,449.40 1095,449.40 1095,449.40 1096,449.40 1096,449.40 1097,449.40 1097,449.40 1098,449.40 1098,449.40 1099,449.40 1099,449.40 1100,449.40 1100,449.40 1101,449.40 1101,449.40 1102,449.40 1102,449.40 1103,449.40 1103,449.40 1104,449.40 1104,449.40 1105,449.40 1105,449.40 1106,449.40 1106,449.40 1107,449.40 1107,449.40 1108,449.40 1108,449.40 1109,449.40 1109,449.40 1110,449.40 1110,449.40 1111,449.40 1111,449.40 1112,449.40 1112,449.40 1113,449.40 1113,449.40 1114,449.40 1114,449.40 1115,449.40 1115,449.40 1116,449.40 1116,449.40 1117,449.40 1117,449.40 1118,449.40 1118,449.40 1119,449.40 1119,449.40 1120,449.40 1120,449.40 1121,449.40 1121,449.40 1122,449.40 1122,449.40 1123,449.40 1123,449.40 1124,449.40 1124,449.40 1125,449.40 1125,449.40 1126,449.40 1126,449.40 1127,449.40 1127,449.40 1128,449.40 1128,449.40 1129,449.40 1129,449.40 1130,449.40 1130,449.40 1131,449.40 1131,449.40 1132,449.40 1132,449.40 1133,449.40 1133,449.40 1134,449.40 1134,449.40 1135,449.40 1135,449.40 1136,449.40 1136,449.40 1137,449.40 1137,449.40 1138,449.40 1138,449.40 1139,449.40 1139,449.40 1140,449.40 1140,449.40 1141,449.40 1141,448.32 1142,448.32 1142,449.40 1143,449.40 1143,449.40 1144,449.40 1144,449.40 1145,449.40 1145,449.40 1146,449.40 1146,449.40 1147,449.40 1147,449.40 1148,449.40 1148,449.40 1149,449.40 1149,449.40 1150,449.40 1150,449.40 1151,449.40 1151,449.40 1152,449.40 1152,449.40 1153,449.40 1153,449.40 1154,449.40 1154,449.40 1155,449.40 1155,449.40 1156,449.40 1156,449.40 1157,449.40 1157,449.40 1158,449.40 1158,449.40 1159,449.40 1159,449.40 1160,449.40 1160,449.40 1161,449.40 1161,449.40 1162,449.40 1162,449.40 1163,449.40 1163,449.40 1164,449.40 1164,449.40 1165,449.40 1165,449.40 1166,449.40 1166,449.40 1167,449.40 1167,449.40 1168,449.40 1168,449.40 1169,449.40 1169,449.40 1170,449.40 1170,449.40 1171,449.40 1171,449.40 1172,449.40 1172,449.40 1173,449.40 1173,449.40 1174,449.40 1174,449.40 1175,449.40 1175,449.40 1176,449.40 1176,449.40 1177,449.40 1177,449.40 1178,449.40 1178,449.40 1179,449.40 1179,449.40 1180,449.40 1180,449.40 1181,449.40 1181,449.40 1182,449.40 1182,448.05 1183,448.05 1183,449.40 1184,449.40 1184,449.40 1185,449.40 1185,449.40 1186,449.40 1186,449.40 1187,449.40 1187,448.64 1188,448.64 1188,449.40 1189,449.40 1189,448.66 1190,448.66 1190,449.40 1191,449.40 1191,449.40 1192,449.40 1192,449.40 1193,449.40 1193,449.40 1194,449.40 1194,449.40 1195,449.40 1195,449.40 1196,449.40 1196,449.40 1197,449.40 1197,449.40 1198,449.40 1198,449.40 1199,449.40 1199,449.40 1200,449.40 1200,449.40 1201,449.40 1201,449.40 1202,449.40 1202,449.40 1203,449.40 1203,449.40 1204,449.40 1204,449.40 1205,449.40 1205,449.40 1206,449.40 1206,449.40 1207,449.40 1207,449.40 1208,449.40 1208,449.40 1209,449.40 1209,449.40 1210,449.40 1210,449.40 1211,449.40 1211,449.40 1212,449.40 1212,449.40 1213,449.40 1213,448.04 1214,448.04 1214,449.40 1215,449.40 1215,449.40 1216,449.40 1216,449.40 1217,449.40 1217,449.40 1218,449.40 1218,449.40 1219,449.40 1219,448.07 1220,448.07 1220,449.40 1221,449.40 1221,449.40 1222,449.40 1222,449.40 1223,449.40 1223,449.40 1224,449.40 1224,449.40 1225,449.40 1225,449.40 1226,449.40 1226,449.40 1227,449.40 1227,449.40 1228,449.40 1228,449.40 1229,449.40 1229,449.40 1230,449.40 1230,449.40 1231,449.40 1231,449.40 1232,449.40 1232,448.11 1233,448.11 1233,449.40 1234,449.40 1234,449.40 1235,449.40 1235,449.40 1236,449.40 1236,449.40 1237,449.40 1237,449.40 1238,449.40 1238,449.40 1239,449.40 1239,449.40 1240,449.40 1240,449.40 1241,449.40 1241,449.40 1242,449.40 1242,449.40 1243,449.40 1243,449.40 1244,449.40 1244,449.40 1245,449.40 1245,449.40 1246,449.40 1246,449.40 1247,449.40 1247,449.40 1248,449.40 1248,449.40 1249,449.40 1249,449.40 1250,449.40 1250,449.40 1251,449.40 1251,449.40 1252,449.40 1252,449.40 1253,449.40 1253,449.40 1254,449.40 1254,449.40 1255,449.40 1255,449.40 1256,449.40 1256,449.40 1257,449.40 1257,449.40 1258,449.40 1258,449.40 1259,449.40 1259,449.40 1260,449.40 1260,449.40 1261,449.40 1261,449.40 1262,449.40 1262,449.40 1263,449.40 1263,449.40 1264,449.40 1264,449.40 1265,449.40 1265,449.40 1266,449.40 1266,449.40 1267,449.40 1267,449.40 1268,449.40 1268,449.40 1269,449.40 1269,449.40 1270,449.40 1270,449.40 1271,449.40 1271,449.40 1272,449.40 1272,449.40 1273,449.40 1273,449.40 1274,449.40 1274,449.40 1275,449.40 1275,449.40 1276,449.40 1276,449.40 1277,449.40 1277,449.40 1278,449.40 1278,449.40 1279,449.40 1279,449.40 1280,449.40 1280,449.40 1281,449.40 1281,449.40 1282,449.40 1282,449.40 1283,449.40 1283,449.40 1284,449.40 1284,449.40 1285,449.40 1285,449.40 1286,449.40 1286,449.40 1287,449.40 1287,449.40 1288,449.40 1288,449.40 1289,449.40 1289,449.40 1290,449.40 1290,449.40 1291,449.40 1291,449.40 1292,449.40 1292,449.40 1293,449.40 1293,449.40 1294,449.40 1294,449.40 1295,449.40 1295,449.40 1296,449.40 1296,449.40 1297,449.40 1297,449.40 1298,449.40 1298,449.40 1299,449.40 1299,449.40 1300,449.40 1300,449.40 1301,449.40 1301,449.40 1302,449.40 1302,449.40 1303,449.40 1303,449.40 1304,449.40 1304,449.40 1305,449.40 1305,449.40 1306,449.40 1306,449.40 1307,449.40 1307,449.40 1308,449.40 1308,449.40 1309,449.40 1309,449.40 1310,449.40 1310,449.40 1311,449.40 1311,449.40 1312,449.40 1312,449.40 1313,449.40 1313,449.40 1314,449.40 1314,449.40 1315,449.40 1315,449.40 1316,449.40 1316,449.40 1317,449.40 1317,449.40 1318,449.40 1318,449.40 1319,449.40 1319,449.40 1320,449.40 1320,449.40 1321,449.40 1321,449.40 1322,449.40 1322,449.40 1323,449.40 1323,449.40 1324,449.40 1324,449.40 1325,449.40 1325,449.40 1326,449.40 1326,449.40 1327,449.40 1327,449.40 1328,449.40 1328,449.40 1329,449.40 1329,449.40 1330,449.40 1330,449.40 1331,449.40 1331,449.40 1332,449.40 1332,449.40 1333,449.40 1333,449.40 1334,449.40 1334,449.40 1335,449.40 1335,449.40 1336,449.40 1336,449.40 1337,449.40 1337,449.40 1338,449.40 1338,449.40 1339,449.40 1339,449.40 1340,449.40 1340,449.40 1341,449.40 1341,449.40 1342,449.40 1342,449.40 1343,449.40 1343,449.40 1344,449.40 1344,449.40 1345,449.40 1345,449.40 1346,449.40 1346,449.40 1347,449.40 1347,449.40 1348,449.40 1348,449.40 1349,449.40 1349,449.40 1350,449.40 1350,449.40 1351,449.40 1351,449.40 1352,449.40 1352,449.40 1353,449.40 1353,449.40 1354,449.40 1354,448.20 1355,448.20 1355,447.65 1356,447.65 1356,448.20 1357,448.20 1357,448.20 1358,448.20 1358,448.20 1359,448.20 1359,448.20 1360,448.20 1360,448.20 1361,448.20 1361,448.20 1362,448.20 1362,448.20 1363,448.20 1363,448.20 1364,448.20 1364,448.20 1365,448.20 1365,448.20 1366,448.20 1366,448.20 1367,448.20 1367,448.20 1368,448.20 1368,448.20 1369,448.20 1369,448.20 1370,448.20 1370,448.20 1371,448.20 1371,448.20 1372,448.20 1372,448.20 1373,448.20 1373,448.20 1374,448.20 1374,448.20 1375,448.20 1375,448.20 1376,448.20 1376,448.20 1377,448.20 1377,448.20 1378,448.20 1378,448.20 1379,448.20 1379,448.20 1380,448.20 1380,448.20 1381,448.20 1381,448.20 1382,448.20 1382,448.20 1383,448.20 1383,448.20 1384,448.20 1384,448.20 1385,448.20 1385,449.40 1386,449.40 1386,449.40 1387,449.40 1387,449.40 1388,449.40 1388,449.40 1389,449.40 1389,449.40 1390,449.40 1390,449.40 1391,449.40 1391,449.40 1392,449.40 1392,449.40 1393,449.40 1393,449.40 1394,449.40 1394,449.40 1395,449.40 1395,449.40 1396,449.40 1396,449.40 1397,449.40 1397,449.40 1398,449.40 1398,449.40 1399,449.40 1399,449.40 1400,449.40 1400,449.40 1401,449.40 1401,449.40 1402,449.40 1402,449.40 1403,449.40 1403,449.40 1404,449.40 1404,449.40 1405,449.40 1405,449.40 1406,449.40 1406,449.40 1407,449.40 1407,449.40 1408,449.40 1408,449.40 1409,449.40 1409,449.40 1410,449.40 1410,449.40 1411,449.40 1411,448.27 1412,448.27 1412,449.40 1413,449.40 1413,449.40 1414,449.40 1414,449.40 1415,449.40 1415,449.40 1416,449.40 1416,449.40 1417,449.40 1417,449.40 1418,449.40 1418,449.40 1419,449.40 1419,448.03 1420,448.03 1420,449.40 1421,449.40 1421,449.40 1422,449.40 1422,449.40 1423,449.40 1423,449.40 1424,449.40 1424,449.40 1425,449.40 1425,448.88 1426,448.88 1426,449.40 1427,449.40 1427,449.40 1428,449.40 1428,449.40 1429,449.40 1429,449.40 1430,449.40 1430,449.40 1431,449.40 1431,449.40 1432,449.40 1432,449.40 1433,449.40 1433,449.40 1434,449.40 1434,449.40 1435,449.40 1435,449.40 1436,449.40 1436,449.40 1437,449.40 1437,449.40 1438,449.40 1438,449.40 1439,449.40 1439,449.40 1440,449.40 1440,449.40 1441,449.40 1441,449.40 1442,449.40 1442,449.40 1443,449.40 1443,449.40 1444,449.40 1444,449.40 1445,449.40 1445,449.40 1446,449.40 1446,449.40 1447,449.40 1447,449.40 1448,449.40 1448,449.40 1449,449.40 1449,448.23 1450,448.23 1450,449.40 1451,449.40 1451,449.40 1452,449.40 1452,449.40 1453,449.40 1453,449.40 1454,449.40 1454,449.40 1455,449.40 1455,449.40 1456,449.40 1456,449.40 1457,449.40 1457,449.40 1458,449.40 1458,449.40 1459,449.40 1459,449.40 1460,449.40 1460,449.40 1461,449.40 1461,449.40 1462,449.40 1462,449.40 1463,449.40 1463,449.40 1464,449.40 1464,449.40 1465,449.40 1465,449.40 1466,449.40 1466,449.40 1467,449.40 1467,449.40 1468,449.40 1468,449.40 1469,449.40 1469,449.40 1470,449.40 1470,449.40 1471,449.40 1471,448.80 1472,448.80 1472,448.80 1473,448.80 1473,448.80 1474,448.80 1474,448.20 1475,448.20 1475,448.50 1476,448.50 1476,448.50 1477,448.50 1477,448.20 1478,448.20 1478,448.50 1479,448.50 1479,448.50 1480,448.50 1480,448.80 1481,448.80 1481,448.50 1482,448.50 1482,448.50 1483,448.50 1483,448.50 1484,448.50 1484,448.20 1485,448.20 1485,448.80 1486,448.80 1486,448.20 1487,448.20 1487,448.80 1488,448.80 1488,448.20 1489,448.20 1489,448.50 1490,448.50 1490,448.50 1491,448.50 1491,448.50 1492,448.50 1492,448.20 1493,448.20 1493,448.20 1494,448.20 1494,448.50 1495,448.50 1495,448.80 1496,448.80 1496,448.50 1497,448.50 1497,448.50 1498,448.50 1498,448.50 1499,448.50 1499,448.80 1500,448.80 1500,448.50 1501,448.50 1501,448.50 1502,448.50 1502,448.50 1503,448.50 1503,448.80 1504,448.80 1504,448.50 1505,448.50 1505,448.20 1506,448.20 1506,448.80 1507,448.80 1507,448.50 1508,448.50 1508,448.20 1509,448.20 1509,448.50 1510,448.50 1510,448.20 1511,448.20 1511,448.20 1512,448.20 1512,448.50 1513,448.50 1513,448.50 1514,448.50 1514,448.20 1515,448.20 1515,448.20 1516,448.20 1516,448.50 1517,448.50 1517,448.50 1518,448.50 1518,448.80 1519,448.80 1519,448.50 1520,448.50 1520,448.50 1521,448.50 1521,448.80 1522,448.80 1522,448.80 1523,448.80 1523,448.50 1524,448.50 1524,448.50 1525,448.50 1525,448.50 1526,448.50 1526,448.20 1527,448.20 1527,448.50 1528,448.50 1528,448.50 1529,448.50 1529,448.80 1530,448.80 1530,448.50 1531,448.50 1531,448.80 1532,448.80 1532,448.20 1533,448.20 1533,448.50 1534,448.50 1534,448.80 1535,448.80 1535,448.50 1536,448.50 1536,448.80 1537,448.80 1537,448.50 1538,448.50 1538,448.50 1539,448.50 1539,448.50 1540,448.50 1540,448.50 1541,448.50 1541,448.50 1542,448.50 1542,448.20 1543,448.20 1543,448.80 1544,448.80 1544,448.80 1545,448.80 1545,448.80 1546,448.80 1546,448.50 1547,448.50 1547,448.50 1548,448.50 1548,448.80 1549,448.80 1549,448.20 1550,448.20 1550,448.50 1551,448.50 1551,448.80 1552,448.80 1552,448.20 1553,448.20 1553,448.80 1554,448.80 1554,448.50 1555,448.50 1555,448.50 1556,448.50 1556,448.80 1557,448.80 1557,448.50 1558,448.50 1558,448.50 1559,448.50 L1559,508.50 843,508.50 Z" fill="#71631f"/><path d="M843,384.50 844,384.50 844,383.01 845,383.01 845,384.50 846,384.50 846,384.50 847,384.50 847,384.50 848,384.50 848,384.50 849,384.50 849,384.50 850,384.50 850,384.50 851,384.50 851,384.50 852,384.50 852,384.50 853,384.50 853,384.50 854,384.50 854,384.50 855,384.50 855,384.50 856,384.50 856,384.50 857,384.50 857,384.50 858,384.50 858,384.50 859,384.50 859,384.50 860,384.50 860,384.50 861,384.50 861,384.50 862,384.50 862,384.50 863,384.50 863,384.50 864,384.50 864,384.50 865,384.50 865,384.50 866,384.50 866,384.50 867,384.50 867,384.50 868,384.50 868,383.93 869,383.93 869,384.50 870,384.50 870,384.50 871,384.50 871,384.50 872,384.50 872,384.50 873,384.50 873,384.50 874,384.50 874,384.50 875,384.50 875,384.50 876,384.50 876,384.50 877,384.50 877,385.50 878,385.50 878,385.50 879,385.50 879,385.50 880,385.50 880,385.50 881,385.50 881,385.50 882,385.50 882,385.50 883,385.50 883,385.50 884,385.50 884,385.50 885,385.50 885,385.50 886,385.50 886,385.50 887,385.50 887,385.50 888,385.50 888,385.50 889,385.50 889,385.50 890,385.50 890,385.50 891,385.50 891,385.50 892,385.50 892,385.50 893,385.50 893,385.50 894,385.50 894,385.50 895,385.50 895,385.50 896,385.50 896,385.50 897,385.50 897,385.50 898,385.50 898,385.50 899,385.50 899,385.50 900,385.50 900,385.50 901,385.50 901,385.50 902,385.50 902,385.50 903,385.50 903,385.50 904,385.50 904,385.50 905,385.50 905,385.50 906,385.50 906,385.50 907,385.50 907,385.50 908,385.50 908,385.50 909,385.50 909,385.50 910,385.50 910,385.50 911,385.50 911,385.50 912,385.50 912,385.50 913,385.50 913,385.50 914,385.50 914,385.50 915,385.50 915,385.50 916,385.50 916,385.50 917,385.50 917,385.50 918,385.50 918,385.50 919,385.50 919,385.50 920,385.50 920,385.50 921,385.50 921,385.50 922,385.50 922,385.50 923,385.50 923,385.50 924,385.50 924,385.50 925,385.50 925,385.50 926,385.50 926,385.50 927,385.50 927,385.50 928,385.50 928,385.50 929,385.50 929,385.50 930,385.50 930,385.50 931,385.50 931,385.50 932,385.50 932,385.50 933,385.50 933,385.50 934,385.50 934,385.50 935,385.50 935,385.50 936,385.50 936,385.50 937,385.50 937,385.50 938,385.50 938,385.50 939,385.50 939,385.50 940,385.50 940,385.50 941,385.50 941,385.50 942,385.50 942,385.50 943,385.50 943,385.50 944,385.50 944,385.50 945,385.50 945,385.50 946,385.50 946,385.50 947,385.50 947,385.50 948,385.50 948,385.50 949,385.50 949,385.50 950,385.50 950,385.50 951,385.50 951,385.50 952,385.50 952,384.20 953,384.20 953,385.50 954,385.50 954,385.50 955,385.50 955,385.50 956,385.50 956,385.50 957,385.50 957,385.50 958,385.50 958,385.50 959,385.50 959,385.50 960,385.50 960,385.50 961,385.50 961,385.50 962,385.50 962,385.50 963,385.50 963,385.50 964,385.50 964,385.50 965,385.50 965,385.50 966,385.50 966,385.50 967,385.50 967,385.50 968,385.50 968,385.50 969,385.50 969,385.50 970,385.50 970,384.94 971,384.94 971,384.81 972,384.81 972,385.50 973,385.50 973,385.50 974,385.50 974,385.50 975,385.50 975,385.50 976,385.50 976,385.50 977,385.50 977,385.50 978,385.50 978,385.50 979,385.50 979,385.50 980,385.50 980,385.50 981,385.50 981,385.50 982,385.50 982,385.50 983,385.50 983,385.50 984,385.50 984,385.50 985,385.50 985,385.50 986,385.50 986,385.50 987,385.50 987,385.50 988,385.50 988,385.50 989,385.50 989,385.50 990,385.50 990,385.50 991,385.50 991,385.50 992,385.50 992,385.50 993,385.50 993,385.50 994,385.50 994,385.50 995,385.50 995,385.50 996,385.50 996,385.50 997,385.50 997,385.50 998,385.50 998,385.50 999,385.50 999,385.50 1000,385.50 1000,385.50 1001,385.50 1001,385.50 1002,385.50 1002,385.50 1003,385.50 1003,385.50 1004,385.50 1004,385.50 1005,385.50 1005,385.50 1006,385.50 1006,385.50 1007,385.50 1007,385.50 1008,385.50 1008,385.50 1009,385.50 1009,385.50 1010,385.50 1010,385.50 1011,385.50 1011,385.50 1012,385.50 1012,385.50 1013,385.50 1013,385.50 1014,385.50 1014,385.50 1015,385.50 1015,385.50 1016,385.50 1016,385.50 1017,385.50 1017,385.50 1018,385.50 1018,385.50 1019,385.50 1019,385.50 1020,385.50 1020,385.50 1021,385.50 1021,385.50 1022,385.50 1022,385.50 1023,385.50 1023,385.50 1024,385.50 1024,385.50 1025,385.50 1025,385.50 1026,385.50 1026,385.50 1027,385.50 1027,385.50 1028,385.50 1028,385.50 1029,385.50 1029,385.50 1030,385.50 1030,385.50 1031,385.50 1031,385.50 1032,385.50 1032,385.50 1033,385.50 1033,384.97 1034,384.97 1034,385.50 1035,385.50 1035,385.50 1036,385.50 1036,385.50 1037,385.50 1037,385.50 1038,385.50 1038,385.50 1039,385.50 1039,385.50 1040,385.50 1040,385.50 1041,385.50 1041,385.50 1042,385.50 1042,384.89 1043,384.89 1043,385.50 1044,385.50 1044,385.50 1045,385.50 1045,385.50 1046,385.50 1046,385.50 1047,385.50 1047,384.86 1048,384.86 1048,385.50 1049,385.50 1049,385.50 1050,385.50 1050,385.50 1051,385.50 1051,385.50 1052,385.50 1052,385.50 1053,385.50 1053,385.50 1054,385.50 1054,385.50 1055,385.50 1055,385.50 1056,385.50 1056,385.50 1057,385.50 1057,385.50 1058,385.50 1058,385.50 1059,385.50 1059,385.50 1060,385.50 1060,385.50 1061,385.50 1061,385.50 1062,385.50 1062,385.50 1063,385.50 1063,385.50 1064,385.50 1064,384.05 1065,384.05 1065,385.50 1066,385.50 1066,385.50 1067,385.50 1067,385.50 1068,385.50 1068,385.50 1069,385.50 1069,385.50 1070,385.50 1070,385.50 1071,385.50 1071,385.50 1072,385.50 1072,385.50 1073,385.50 1073,385.50 1074,385.50 1074,385.50 1075,385.50 1075,385.50 1076,385.50 1076,385.50 1077,385.50 1077,385.50 1078,385.50 1078,385.50 1079,385.50 1079,385.50 1080,385.50 1080,385.50 1081,385.50 1081,385.50 1082,385.50 1082,385.50 1083,385.50 1083,385.50 1084,385.50 1084,385.50 1085,385.50 1085,385.50 1086,385.50 1086,385.50 1087,385.50 1087,385.50 1088,385.50 1088,384.48 1089,384.48 1089,385.50 1090,385.50 1090,385.50 1091,385.50 1091,385.50 1092,385.50 1092,385.50 1093,385.50 1093,385.50 1094,385.50 1094,385.50 1095,385.50 1095,385.50 1096,385.50 1096,385.50 1097,385.50 1097,385.50 1098,385.50 1098,385.50 1099,385.50 1099,385.50 1100,385.50 1100,385.50 1101,385.50 1101,385.50 1102,385.50 1102,385.50 1103,385.50 1103,385.50 1104,385.50 1104,385.50 1105,385.50 1105,385.50 1106,385.50 1106,385.50 1107,385.50 1107,385.50 1108,385.50 1108,385.50 1109,385.50 1109,385.50 1110,385.50 1110,385.50 1111,385.50 1111,385.50 1112,385.50 1112,385.50 1113,385.50 1113,385.50 1114,385.50 1114,385.50 1115,385.50 1115,385.50 1116,385.50 1116,385.50 1117,385.50 1117,385.50 1118,385.50 1118,385.50 1119,385.50 1119,385.50 1120,385.50 1120,385.50 1121,385.50 1121,385.50 1122,385.50 1122,385.50 1123,385.50 1123,385.50 1124,385.50 1124,385.50 1125,385.50 1125,385.50 1126,385.50 1126,385.50 1127,385.50 1127,385.50 1128,385.50 1128,385.50 1129,385.50 1129,385.50 1130,385.50 1130,385.50 1131,385.50 1131,385.50 1132,385.50 1132,385.50 1133,385.50 1133,385.50 1134,385.50 1134,385.50 1135,385.50 1135,385.50 1136,385.50 1136,385.50 1137,385.50 1137,385.50 1138,385.50 1138,385.50 1139,385.50 1139,385.50 1140,385.50 1140,385.50 1141,385.50 1141,384.42 1142,384.42 1142,385.50 1143,385.50 1143,385.50 1144,385.50 1144,385.50 1145,385.50 1145,385.50 1146,385.50 1146,385.50 1147,385.50 1147,385.50 1148,385.50 1148,385.50 1149,385.50 1149,385.50 1150,385.50 1150,385.50 1151,385.50 1151,385.50 1152,385.50 1152,385.50 1153,385.50 1153,385.50 1154,385.50 1154,385.50 1155,385.50 1155,385.50 1156,385.50 1156,385.50 1157,385.50 1157,385.50 1158,385.50 1158,385.50 1159,385.50 1159,385.50 1160,385.50 1160,385.50 1161,385.50 1161,385.50 1162,385.50 1162,385.50 1163,385.50 1163,385.50 1164,385.50 1164,385.50 1165,385.50 1165,385.50 1166,385.50 1166,385.50 1167,385.50 1167,385.50 1168,385.50 1168,385.50 1169,385.50 1169,385.50 1170,385.50 1170,385.50 1171,385.50 1171,385.50 1172,385.50 1172,385.50 1173,385.50 1173,385.50 1174,385.50 1174,385.50 1175,385.50 1175,385.50 1176,385.50 1176,385.50 1177,385.50 1177,385.50 1178,385.50 1178,385.50 1179,385.50 1179,385.50 1180,385.50 1180,385.50 1181,385.50 1181,385.50 1182,385.50 1182,384.15 1183,384.15 1183,385.50 1184,385.50 1184,385.50 1185,385.50 1185,385.50 1186,385.50 1186,385.50 1187,385.50 1187,384.74 1188,384.74 1188,385.50 1189,385.50 1189,384.76 1190,384.76 1190,385.50 1191,385.50 1191,385.50 1192,385.50 1192,385.50 1193,385.50 1193,385.50 1194,385.50 1194,385.50 1195,385.50 1195,385.50 1196,385.50 1196,385.50 1197,385.50 1197,385.50 1198,385.50 1198,385.50 1199,385.50 1199,385.50 1200,385.50 1200,385.50 1201,385.50 1201,385.50 1202,385.50 1202,385.50 1203,385.50 1203,385.50 1204,385.50 1204,385.50 1205,385.50 1205,385.50 1206,385.50 1206,385.50 1207,385.50 1207,385.50 1208,385.50 1208,385.50 1209,385.50 1209,385.50 1210,385.50 1210,385.50 1211,385.50 1211,385.50 1212,385.50 1212,385.50 1213,385.50 1213,384.14 1214,384.14 1214,385.50 1215,385.50 1215,385.50 1216,385.50 1216,385.50 1217,385.50 1217,385.50 1218,385.50 1218,385.50 1219,385.50 1219,384.17 1220,384.17 1220,385.50 1221,385.50 1221,385.50 1222,385.50 1222,385.50 1223,385.50 1223,385.50 1224,385.50 1224,385.50 1225,385.50 1225,385.50 1226,385.50 1226,385.50 1227,385.50 1227,385.50 1228,385.50 1228,385.50 1229,385.50 1229,385.50 1230,385.50 1230,385.50 1231,385.50 1231,385.50 1232,385.50 1232,384.21 1233,384.21 1233,385.50 1234,385.50 1234,385.50 1235,385.50 1235,385.50 1236,385.50 1236,385.50 1237,385.50 1237,385.50 1238,385.50 1238,385.50 1239,385.50 1239,385.50 1240,385.50 1240,385.50 1241,385.50 1241,385.50 1242,385.50 1242,385.50 1243,385.50 1243,385.50 1244,385.50 1244,385.50 1245,385.50 1245,385.50 1246,385.50 1246,385.50 1247,385.50 1247,385.50 1248,385.50 1248,385.50 1249,385.50 1249,385.50 1250,385.50 1250,385.50 1251,385.50 1251,385.50 1252,385.50 1252,385.50 1253,385.50 1253,385.50 1254,385.50 1254,385.50 1255,385.50 1255,385.50 1256,385.50 1256,385.50 1257,385.50 1257,385.50 1258,385.50 1258,385.50 1259,385.50 1259,385.50 1260,385.50 1260,385.50 1261,385.50 1261,385.50 1262,385.50 1262,385.50 1263,385.50 1263,385.50 1264,385.50 1264,385.50 1265,385.50 1265,385.50 1266,385.50 1266,385.50 1267,385.50 1267,385.50 1268,385.50 1268,385.50 1269,385.50 1269,385.50 1270,385.50 1270,385.50 1271,385.50 1271,385.50 1272,385.50 1272,385.50 1273,385.50 1273,385.50 1274,385.50 1274,385.50 1275,385.50 1275,385.50 1276,385.50 1276,385.50 1277,385.50 1277,385.50 1278,385.50 1278,385.50 1279,385.50 1279,385.50 1280,385.50 1280,385.50 1281,385.50 1281,385.50 1282,385.50 1282,385.50 1283,385.50 1283,385.50 1284,385.50 1284,385.50 1285,385.50 1285,385.50 1286,385.50 1286,385.50 1287,385.50 1287,385.50 1288,385.50 1288,385.50 1289,385.50 1289,385.50 1290,385.50 1290,385.50 1291,385.50 1291,385.50 1292,385.50 1292,385.50 1293,385.50 1293,385.50 1294,385.50 1294,385.50 1295,385.50 1295,385.50 1296,385.50 1296,385.50 1297,385.50 1297,385.50 1298,385.50 1298,385.50 1299,385.50 1299,385.50 1300,385.50 1300,385.50 1301,385.50 1301,385.50 1302,385.50 1302,385.50 1303,385.50 1303,385.50 1304,385.50 1304,385.50 1305,385.50 1305,385.50 1306,385.50 1306,385.50 1307,385.50 1307,385.50 1308,385.50 1308,385.50 1309,385.50 1309,385.50 1310,385.50 1310,385.50 1311,385.50 1311,385.50 1312,385.50 1312,385.50 1313,385.50 1313,385.50 1314,385.50 1314,385.50 1315,385.50 1315,385.50 1316,385.50 1316,385.50 1317,385.50 1317,385.50 1318,385.50 1318,385.50 1319,385.50 1319,385.50 1320,385.50 1320,385.50 1321,385.50 1321,385.50 1322,385.50 1322,385.50 1323,385.50 1323,385.50 1324,385.50 1324,385.50 1325,385.50 1325,385.50 1326,385.50 1326,385.50 1327,385.50 1327,385.50 1328,385.50 1328,385.50 1329,385.50 1329,385.50 1330,385.50 1330,385.50 1331,385.50 1331,385.50 1332,385.50 1332,385.50 1333,385.50 1333,385.50 1334,385.50 1334,385.50 1335,385.50 1335,385.50 1336,385.50 1336,385.50 1337,385.50 1337,385.50 1338,385.50 1338,385.50 1339,385.50 1339,385.50 1340,385.50 1340,385.50 1341,385.50 1341,385.50 1342,385.50 1342,385.50 1343,385.50 1343,385.50 1344,385.50 1344,385.50 1345,385.50 1345,385.50 1346,385.50 1346,385.50 1347,385.50 1347,385.50 1348,385.50 1348,385.50 1349,385.50 1349,385.50 1350,385.50 1350,385.50 1351,385.50 1351,385.50 1352,385.50 1352,385.50 1353,385.50 1353,385.50 1354,385.50 1354,384.30 1355,384.30 1355,383.75 1356,383.75 1356,384.30 1357,384.30 1357,384.30 1358,384.30 1358,384.30 1359,384.30 1359,384.30 1360,384.30 1360,384.30 1361,384.30 1361,384.30 1362,384.30 1362,384.30 1363,384.30 1363,384.30 1364,384.30 1364,384.30 1365,384.30 1365,384.30 1366,384.30 1366,384.30 1367,384.30 1367,384.30 1368,384.30 1368,384.30 1369,384.30 1369,384.30 1370,384.30 1370,384.30 1371,384.30 1371,384.30 1372,384.30 1372,384.30 1373,384.30 1373,384.30 1374,384.30 1374,384.30 1375,384.30 1375,384.30 1376,384.30 1376,384.30 1377,384.30 1377,384.30 1378,384.30 1378,384.30 1379,384.30 1379,384.30 1380,384.30 1380,384.30 1381,384.30 1381,384.30 1382,384.30 1382,384.30 1383,384.30 1383,384.30 1384,384.30 1384,384.30 1385,384.30 1385,385.50 1386,385.50 1386,385.50 1387,385.50 1387,385.50 1388,385.50 1388,385.50 1389,385.50 1389,385.50 1390,385.50 1390,385.50 1391,385.50 1391,385.50 1392,385.50 1392,385.50 1393,385.50 1393,385.50 1394,385.50 1394,385.50 1395,385.50 1395,385.50 1396,385.50 1396,385.50 1397,385.50 1397,385.50 1398,385.50 1398,385.50 1399,385.50 1399,385.50 1400,385.50 1400,385.50 1401,385.50 1401,385.50 1402,385.50 1402,385.50 1403,385.50 1403,385.50 1404,385.50 1404,385.50 1405,385.50 1405,385.50 1406,385.50 1406,385.50 1407,385.50 1407,385.50 1408,385.50 1408,385.50 1409,385.50 1409,385.50 1410,385.50 1410,385.50 1411,385.50 1411,384.37 1412,384.37 1412,385.50 1413,385.50 1413,385.50 1414,385.50 1414,385.50 1415,385.50 1415,385.50 1416,385.50 1416,385.50 1417,385.50 1417,385.50 1418,385.50 1418,385.50 1419,385.50 1419,384.13 1420,384.13 1420,385.50 1421,385.50 1421,385.50 1422,385.50 1422,385.50 1423,385.50 1423,385.50 1424,385.50 1424,385.50 1425,385.50 1425,384.98 1426,384.98 1426,385.50 1427,385.50 1427,385.50 1428,385.50 1428,385.50 1429,385.50 1429,385.50 1430,385.50 1430,385.50 1431,385.50 1431,385.50 1432,385.50 1432,385.50 1433,385.50 1433,385.50 1434,385.50 1434,385.50 1435,385.50 1435,385.50 1436,385.50 1436,385.50 1437,385.50 1437,385.50 1438,385.50 1438,385.50 1439,385.50 1439,385.50 1440,385.50 1440,385.50 1441,385.50 1441,385.50 1442,385.50 1442,385.50 1443,385.50 1443,385.50 1444,385.50 1444,385.50 1445,385.50 1445,385.50 1446,385.50 1446,385.50 1447,385.50 1447,385.50 1448,385.50 1448,385.50 1449,385.50 1449,384.33 1450,384.33 1450,385.50 1451,385.50 1451,385.50 1452,385.50 1452,385.50 1453,385.50 1453,385.50 1454,385.50 1454,385.50 1455,385.50 1455,385.50 1456,385.50 1456,385.50 1457,385.50 1457,385.50 1458,385.50 1458,385.50 1459,385.50 1459,385.50 1460,385.50 1460,385.50 1461,385.50 1461,385.50 1462,385.50 1462,385.50 1463,385.50 1463,385.50 1464,385.50 1464,385.50 1465,385.50 1465,385.50 1466,385.50 1466,385.50 1467,385.50 1467,385.50 1468,385.50 1468,385.50 1469,385.50 1469,385.50 1470,385.50 1470,385.50 1471,385.50 1471,384.90 1472,384.90 1472,384.90 1473,384.90 1473,384.90 1474,384.90 1474,384.30 1475,384.30 1475,384.60 1476,384.60 1476,384.60 1477,384.60 1477,384.30 1478,384.30 1478,384.60 1479,384.60 1479,384.60 1480,384.60 1480,384.90 1481,384.90 1481,384.60 1482,384.60 1482,384.60 1483,384.60 1483,384.60 1484,384.60 1484,384.30 1485,384.30 1485,384.90 1486,384.90 1486,384.30 1487,384.30 1487,384.90 1488,384.90 1488,384.30 1489,384.30 1489,384.60 1490,384.60 1490,384.60 1491,384.60 1491,384.60 1492,384.60 1492,384.30 1493,384.30 1493,384.30 1494,384.30 1494,384.60 1495,384.60 1495,384.90 1496,384.90 1496,384.60 1497,384.60 1497,384.60 1498,384.60 1498,384.60 1499,384.60 1499,384.90 1500,384.90 1500,384.60 1501,384.60 1501,384.60 1502,384.60 1502,384.60 1503,384.60 1503,384.90 1504,384.90 1504,384.60 1505,384.60 1505,384.30 1506,384.30 1506,384.90 1507,384.90 1507,384.60 1508,384.60 1508,384.30 1509,384.30 1509,384.60 1510,384.60 1510,384.30 1511,384.30 1511,384.30 1512,384.30 1512,384.60 1513,384.60 1513,384.60 1514,384.60 1514,384.30 1515,384.30 1515,384.30 1516,384.30 1516,384.60 1517,384.60 1517,384.60 1518,384.60 1518,384.90 1519,384.90 1519,384.60 1520,384.60 1520,384.60 1521,384.60 1521,384.90 1522,384.90 1522,384.90 1523,384.90 1523,384.60 1524,384.60 1524,384.60 1525,384.60 1525,384.60 1526,384.60 1526,384.30 1527,384.30 1527,384.60 1528,384.60 1528,384.60 1529,384.60 1529,384.90 1530,384.90 1530,384.60 1531,384.60 1531,384.90 1532,384.90 1532,384.30 1533,384.30 1533,384.60 1534,384.60 1534,384.90 1535,384.90 1535,384.60 1536,384.60 1536,384.90 1537,384.90 1537,384.60 1538,384.60 1538,384.60 1539,384.60 1539,384.60 1540,384.60 1540,384.60 1541,384.60 1541,384.60 1542,384.60 1542,384.30 1543,384.30 1543,384.90 1544,384.90 1544,384.90 1545,384.90 1545,384.90 1546,384.90 1546,384.60 1547,384.60 1547,384.60 1548,384.60 1548,384.90 1549,384.90 1549,384.30 1550,384.30 1550,384.60 1551,384.60 1551,384.90 1552,384.90 1552,384.30 1553,384.30 1553,384.90 1554,384.90 1554,384.60 1555,384.60 1555,384.60 1556,384.60 1556,384.90 1557,384.90 1557,384.60 1558,384.60 1558,384.60 1559,384.60" fill="none" stroke="#2a4a58" stroke-width="1"/><path d="M843,448.40 844,448.40 844,446.91 845,446.91 845,448.40 846,448.40 846,448.40 847,448.40 847,448.40 848,448.40 848,448.40 849,448.40 849,448.40 850,448.40 850,448.40 851,448.40 851,448.40 852,448.40 852,448.40 853,448.40 853,448.40 854,448.40 854,448.40 855,448.40 855,448.40 856,448.40 856,448.40 857,448.40 857,448.40 858,448.40 858,448.40 859,448.40 859,448.40 860,448.40 860,448.40 861,448.40 861,448.40 862,448.40 862,448.40 863,448.40 863,448.40 864,448.40 864,448.40 865,448.40 865,448.40 866,448.40 866,448.40 867,448.40 867,448.40 868,448.40 868,447.83 869,447.83 869,448.40 870,448.40 870,448.40 871,448.40 871,448.40 872,448.40 872,448.40 873,448.40 873,448.40 874,448.40 874,448.40 875,448.40 875,448.40 876,448.40 876,448.40 877,448.40 877,449.40 878,449.40 878,449.40 879,449.40 879,449.40 880,449.40 880,449.40 881,449.40 881,449.40 882,449.40 882,449.40 883,449.40 883,449.40 884,449.40 884,449.40 885,449.40 885,449.40 886,449.40 886,449.40 887,449.40 887,449.40 888,449.40 888,449.40 889,449.40 889,449.40 890,449.40 890,449.40 891,449.40 891,449.40 892,449.40 892,449.40 893,449.40 893,449.40 894,449.40 894,449.40 895,449.40 895,449.40 896,449.40 896,449.40 897,449.40 897,449.40 898,449.40 898,449.40 899,449.40 899,449.40 900,449.40 900,449.40 901,449.40 901,449.40 902,449.40 902,449.40 903,449.40 903,449.40 904,449.40 904,449.40 905,449.40 905,449.40 906,449.40 906,449.40 907,449.40 907,449.40 908,449.40 908,449.40 909,449.40 909,449.40 910,449.40 910,449.40 911,449.40 911,449.40 912,449.40 912,449.40 913,449.40 913,449.40 914,449.40 914,449.40 915,449.40 915,449.40 916,449.40 916,449.40 917,449.40 917,449.40 918,449.40 918,449.40 919,449.40 919,449.40 920,449.40 920,449.40 921,449.40 921,449.40 922,449.40 922,449.40 923,449.40 923,449.40 924,449.40 924,449.40 925,449.40 925,449.40 926,449.40 926,449.40 927,449.40 927,449.40 928,449.40 928,449.40 929,449.40 929,449.40 930,449.40 930,449.40 931,449.40 931,449.40 932,449.40 932,449.40 933,449.40 933,449.40 934,449.40 934,449.40 935,449.40 935,449.40 936,449.40 936,449.40 937,449.40 937,449.40 938,449.40 938,449.40 939,449.40 939,449.40 940,449.40 940,449.40 941,449.40 941,449.40 942,449.40 942,449.40 943,449.40 943,449.40 944,449.40 944,449.40 945,449.40 945,449.40 946,449.40 946,449.40 947,449.40 947,449.40 948,449.40 948,449.40 949,449.40 949,449.40 950,449.40 950,449.40 951,449.40 951,449.40 952,449.40 952,448.10 953,448.10 953,449.40 954,449.40 954,449.40 955,449.40 955,449.40 956,449.40 956,449.40 957,449.40 957,449.40 958,449.40 958,449.40 959,449.40 959,449.40 960,449.40 960,449.40 961,449.40 961,449.40 962,449.40 962,449.40 963,449.40 963,449.40 964,449.40 964,449.40 965,449.40 965,449.40 966,449.40 966,449.40 967,449.40 967,449.40 968,449.40 968,449.40 969,449.40 969,449.40 970,449.40 970,448.84 971,448.84 971,448.71 972,448.71 972,449.40 973,449.40 973,449.40 974,449.40 974,449.40 975,449.40 975,449.40 976,449.40 976,449.40 977,449.40 977,449.40 978,449.40 978,449.40 979,449.40 979,449.40 980,449.40 980,449.40 981,449.40 981,449.40 982,449.40 982,449.40 983,449.40 983,449.40 984,449.40 984,449.40 985,449.40 985,449.40 986,449.40 986,449.40 987,449.40 987,449.40 988,449.40 988,449.40 989,449.40 989,449.40 990,449.40 990,449.40 991,449.40 991,449.40 992,449.40 992,449.40 993,449.40 993,449.40 994,449.40 994,449.40 995,449.40 995,449.40 996,449.40 996,449.40 997,449.40 997,449.40 998,449.40 998,449.40 999,449.40 999,449.40 1000,449.40 1000,449.40 1001,449.40 1001,449.40 1002,449.40 1002,449.40 1003,449.40 1003,449.40 1004,449.40 1004,449.40 1005,449.40 1005,449.40 1006,449.40 1006,449.40 1007,449.40 1007,449.40 1008,449.40 1008,449.40 1009,449.40 1009,449.40 1010,449.40 1010,449.40 1011,449.40 1011,449.40 1012,449.40 1012,449.40 1013,449.40 1013,449.40 1014,449.40 1014,449.40 1015,449.40 1015,449.40 1016,449.40 1016,449.40 1017,449.40 1017,449.40 1018,449.40 1018,449.40 1019,449.40 1019,449.40 1020,449.40 1020,449.40 1021,449.40 1021,449.40 1022,449.40 1022,449.40 1023,449.40 1023,449.40 1024,449.40 1024,449.40 1025,449.40 1025,449.40 1026,449.40 1026,449.40 1027,449.40 1027,449.40 1028,449.40 1028,449.40 1029,449.40 1029,449.40 1030,449.40 1030,449.40 1031,449.40 1031,449.40 1032,449.40 1032,449.40 1033,449.40 1033,448.87 1034,448.87 1034,449.40 1035,449.40 1035,449.40 1036,449.40 1036,449.40 1037,449.40 1037,449.40 1038,449.40 1038,449.40 1039,449.40 1039,449.40 1040,449.40 1040,449.40 1041,449.40 1041,449.40 1042,449.40 1042,448.79 1043,448.79 1043,449.40 1044,449.40 1044,449.40 1045,449.40 1045,449.40 1046,449.40 1046,449.40 1047,449.40 1047,448.76 1048,448.76 1048,449.40 1049,449.40 1049,449.40 1050,449.40 1050,449.40 1051,449.40 1051,449.40 1052,449.40 1052,449.40 1053,449.40 1053,449.40 1054,449.40 1054,449.40 1055,449.40 1055,449.40 1056,449.40 1056,449.40 1057,449.40 1057,449.40 1058,449.40 1058,449.40 1059,449.40 1059,449.40 1060,449.40 1060,449.40 1061,449.40 1061,449.40 1062,449.40 1062,449.40 1063,449.40 1063,449.40 1064,449.40 1064,447.95 1065,447.95 1065,449.40 1066,449.40 1066,449.40 1067,449.40 1067,449.40 1068,449.40 1068,449.40 1069,449.40 1069,449.40 1070,449.40 1070,449.40 1071,449.40 1071,449.40 1072,449.40 1072,449.40 1073,449.40 1073,449.40 1074,449.40 1074,449.40 1075,449.40 1075,449.40 1076,449.40 1076,449.40 1077,449.40 1077,449.40 1078,449.40 1078,449.40 1079,449.40 1079,449.40 1080,449.40 1080,449.40 1081,449.40 1081,449.40 1082,449.40 1082,449.40 1083,449.40 1083,449.40 1084,449.40 1084,449.40 1085,449.40 1085,449.40 1086,449.40 1086,449.40 1087,449.40 1087,449.40 1088,449.40 1088,448.38 1089,448.38 1089,449.40 1090,449.40 1090,449.40 1091,449.40 1091,449.40 1092,449.40 1092,449.40 1093,449.40 1093,449.40 1094,449.40 1094,449.40 1095,449.40 1095,449.40 1096,449.40 1096,449.40 1097,449.40 1097,449.40 1098,449.40 1098,449.40 1099,449.40 1099,449.40 1100,449.40 1100,449.40 1101,449.40 1101,449.40 1102,449.40 1102,449.40 1103,449.40 1103,449.40 1104,449.40 1104,449.40 1105,449.40 1105,449.40 1106,449.40 1106,449.40 1107,449.40 1107,449.40 1108,449.40 1108,449.40 1109,449.40 1109,449.40 1110,449.40 1110,449.40 1111,449.40 1111,449.40 1112,449.40 1112,449.40 1113,449.40 1113,449.40 1114,449.40 1114,449.40 1115,449.40 1115,449.40 1116,449.40 1116,449.40 1117,449.40 1117,449.40 1118,449.40 1118,449.40 1119,449.40 1119,449.40 1120,449.40 1120,449.40 1121,449.40 1121,449.40 1122,449.40 1122,449.40 1123,449.40 1123,449.40 1124,449.40 1124,449.40 1125,449.40 1125,449.40 1126,449.40 1126,449.40 1127,449.40 1127,449.40 1128,449.40 1128,449.40 1129,449.40 1129,449.40 1130,449.40 1130,449.40 1131,449.40 1131,449.40 1132,449.40 1132,449.40 1133,449.40 1133,449.40 1134,449.40 1134,449.40 1135,449.40 1135,449.40 1136,449.40 1136,449.40 1137,449.40 1137,449.40 1138,449.40 1138,449.40 1139,449.40 1139,449.40 1140,449.40 1140,449.40 1141,449.40 1141,448.32 1142,448.32 1142,449.40 1143,449.40 1143,449.40 1144,449.40 1144,449.40 1145,449.40 1145,449.40 1146,449.40 1146,449.40 1147,449.40 1147,449.40 1148,449.40 1148,449.40 1149,449.40 1149,449.40 1150,449.40 1150,449.40 1151,449.40 1151,449.40 1152,449.40 1152,449.40 1153,449.40 1153,449.40 1154,449.40 1154,449.40 1155,449.40 1155,449.40 1156,449.40 1156,449.40 1157,449.40 1157,449.40 1158,449.40 1158,449.40 1159,449.40 1159,449.40 1160,449.40 1160,449.40 1161,449.40 1161,449.40 1162,449.40 1162,449.40 1163,449.40 1163,449.40 1164,449.40 1164,449.40 1165,449.40 1165,449.40 1166,449.40 1166,449.40 1167,449.40 1167,449.40 1168,449.40 1168,449.40 1169,449.40 1169,449.40 1170,449.40 1170,449.40 1171,449.40 1171,449.40 1172,449.40 1172,449.40 1173,449.40 1173,449.40 1174,449.40 1174,449.40 1175,449.40 1175,449.40 1176,449.40 1176,449.40 1177,449.40 1177,449.40 1178,449.40 1178,449.40 1179,449.40 1179,449.40 1180,449.40 1180,449.40 1181,449.40 1181,449.40 1182,449.40 1182,448.05 1183,448.05 1183,449.40 1184,449.40 1184,449.40 1185,449.40 1185,449.40 1186,449.40 1186,449.40 1187,449.40 1187,448.64 1188,448.64 1188,449.40 1189,449.40 1189,448.66 1190,448.66 1190,449.40 1191,449.40 1191,449.40 1192,449.40 1192,449.40 1193,449.40 1193,449.40 1194,449.40 1194,449.40 1195,449.40 1195,449.40 1196,449.40 1196,449.40 1197,449.40 1197,449.40 1198,449.40 1198,449.40 1199,449.40 1199,449.40 1200,449.40 1200,449.40 1201,449.40 1201,449.40 1202,449.40 1202,449.40 1203,449.40 1203,449.40 1204,449.40 1204,449.40 1205,449.40 1205,449.40 1206,449.40 1206,449.40 1207,449.40 1207,449.40 1208,449.40 1208,449.40 1209,449.40 1209,449.40 1210,449.40 1210,449.40 1211,449.40 1211,449.40 1212,449.40 1212,449.40 1213,449.40 1213,448.04 1214,448.04 1214,449.40 1215,449.40 1215,449.40 1216,449.40 1216,449.40 1217,449.40 1217,449.40 1218,449.40 1218,449.40 1219,449.40 1219,448.07 1220,448.07 1220,449.40 1221,449.40 1221,449.40 1222,449.40 1222,449.40 1223,449.40 1223,449.40 1224,449.40 1224,449.40 1225,449.40 1225,449.40 1226,449.40 1226,449.40 1227,449.40 1227,449.40 1228,449.40 1228,449.40 1229,449.40 1229,449.40 1230,449.40 1230,449.40 1231,449.40 1231,449.40 1232,449.40 1232,448.11 1233,448.11 1233,449.40 1234,449.40 1234,449.40 1235,449.40 1235,449.40 1236,449.40 1236,449.40 1237,449.40 1237,449.40 1238,449.40 1238,449.40 1239,449.40 1239,449.40 1240,449.40 1240,449.40 1241,449.40 1241,449.40 1242,449.40 1242,449.40 1243,449.40 1243,449.40 1244,449.40 1244,449.40 1245,449.40 1245,449.40 1246,449.40 1246,449.40 1247,449.40 1247,449.40 1248,449.40 1248,449.40 1249,449.40 1249,449.40 1250,449.40 1250,449.40 1251,449.40 1251,449.40 1252,449.40 1252,449.40 1253,449.40 1253,449.40 1254,449.40 1254,449.40 1255,449.40 1255,449.40 1256,449.40 1256,449.40 1257,449.40 1257,449.40 1258,449.40 1258,449.40 1259,449.40 1259,449.40 1260,449.40 1260,449.40 1261,449.40 1261,449.40 1262,449.40 1262,449.40 1263,449.40 1263,449.40 1264,449.40 1264,449.40 1265,449.40 1265,449.40 1266,449.40 1266,449.40 1267,449.40 1267,449.40 1268,449.40 1268,449.40 1269,449.40 1269,449.40 1270,449.40 1270,449.40 1271,449.40 1271,449.40 1272,449.40 1272,449.40 1273,449.40 1273,449.40 1274,449.40 1274,449.40 1275,449.40 1275,449.40 1276,449.40 1276,449.40 1277,449.40 1277,449.40 1278,449.40 1278,449.40 1279,449.40 1279,449.40 1280,449.40 1280,449.40 1281,449.40 1281,449.40 1282,449.40 1282,449.40 1283,449.40 1283,449.40 1284,449.40 1284,449.40 1285,449.40 1285,449.40 1286,449.40 1286,449.40 1287,449.40 1287,449.40 1288,449.40 1288,449.40 1289,449.40 1289,449.40 1290,449.40 1290,449.40 1291,449.40 1291,449.40 1292,449.40 1292,449.40 1293,449.40 1293,449.40 1294,449.40 1294,449.40 1295,449.40 1295,449.40 1296,449.40 1296,449.40 1297,449.40 1297,449.40 1298,449.40 1298,449.40 1299,449.40 1299,449.40 1300,449.40 1300,449.40 1301,449.40 1301,449.40 1302,449.40 1302,449.40 1303,449.40 1303,449.40 1304,449.40 1304,449.40 1305,449.40 1305,449.40 1306,449.40 1306,449.40 1307,449.40 1307,449.40 1308,449.40 1308,449.40 1309,449.40 1309,449.40 1310,449.40 1310,449.40 1311,449.40 1311,449.40 1312,449.40 1312,449.40 1313,449.40 1313,449.40 1314,449.40 1314,449.40 1315,449.40 1315,449.40 1316,449.40 1316,449.40 1317,449.40 1317,449.40 1318,449.40 1318,449.40 1319,449.40 1319,449.40 1320,449.40 1320,449.40 1321,449.40 1321,449.40 1322,449.40 1322,449.40 1323,449.40 1323,449.40 1324,449.40 1324,449.40 1325,449.40 1325,449.40 1326,449.40 1326,449.40 1327,449.40 1327,449.40 1328,449.40 1328,449.40 1329,449.40 1329,449.40 1330,449.40 1330,449.40 1331,449.40 1331,449.40 1332,449.40 1332,449.40 1333,449.40 1333,449.40 1334,449.40 1334,449.40 1335,449.40 1335,449.40 1336,449.40 1336,449.40 1337,449.40 1337,449.40 1338,449.40 1338,449.40 1339,449.40 1339,449.40 1340,449.40 1340,449.40 1341,449.40 1341,449.40 1342,449.40 1342,449.40 1343,449.40 1343,449.40 1344,449.40 1344,449.40 1345,449.40 1345,449.40 1346,449.40 1346,449.40 1347,449.40 1347,449.40 1348,449.40 1348,449.40 1349,449.40 1349,449.40 1350,449.40 1350,449.40 1351,449.40 1351,449.40 1352,449.40 1352,449.40 1353,449.40 1353,449.40 1354,449.40 1354,448.20 1355,448.20 1355,447.65 1356,447.65 1356,448.20 1357,448.20 1357,448.20 1358,448.20 1358,448.20 1359,448.20 1359,448.20 1360,448.20 1360,448.20 1361,448.20 1361,448.20 1362,448.20 1362,448.20 1363,448.20 1363,448.20 1364,448.20 1364,448.20 1365,448.20 1365,448.20 1366,448.20 1366,448.20 1367,448.20 1367,448.20 1368,448.20 1368,448.20 1369,448.20 1369,448.20 1370,448.20 1370,448.20 1371,448.20 1371,448.20 1372,448.20 1372,448.20 1373,448.20 1373,448.20 1374,448.20 1374,448.20 1375,448.20 1375,448.20 1376,448.20 1376,448.20 1377,448.20 1377,448.20 1378,448.20 1378,448.20 1379,448.20 1379,448.20 1380,448.20 1380,448.20 1381,448.20 1381,448.20 1382,448.20 1382,448.20 1383,448.20 1383,448.20 1384,448.20 1384,448.20 1385,448.20 1385,449.40 1386,449.40 1386,449.40 1387,449.40 1387,449.40 1388,449.40 1388,449.40 1389,449.40 1389,449.40 1390,449.40 1390,449.40 1391,449.40 1391,449.40 1392,449.40 1392,449.40 1393,449.40 1393,449.40 1394,449.40 1394,449.40 1395,449.40 1395,449.40 1396,449.40 1396,449.40 1397,449.40 1397,449.40 1398,449.40 1398,449.40 1399,449.40 1399,449.40 1400,449.40 1400,449.40 1401,449.40 1401,449.40 1402,449.40 1402,449.40 1403,449.40 1403,449.40 1404,449.40 1404,449.40 1405,449.40 1405,449.40 1406,449.40 1406,449.40 1407,449.40 1407,449.40 1408,449.40 1408,449.40 1409,449.40 1409,449.40 1410,449.40 1410,449.40 1411,449.40 1411,448.27 1412,448.27 1412,449.40 1413,449.40 1413,449.40 1414,449.40 1414,449.40 1415,449.40 1415,449.40 1416,449.40 1416,449.40 1417,449.40 1417,449.40 1418,449.40 1418,449.40 1419,449.40 1419,448.03 1420,448.03 1420,449.40 1421,449.40 1421,449.40 1422,449.40 1422,449.40 1423,449.40 1423,449.40 1424,449.40 1424,449.40 1425,449.40 1425,448.88 1426,448.88 1426,449.40 1427,449.40 1427,449.40 1428,449.40 1428,449.40 1429,449.40 1429,449.40 1430,449.40 1430,449.40 1431,449.40 1431,449.40 1432,449.40 1432,449.40 1433,449.40 1433,449.40 1434,449.40 1434,449.40 1435,449.40 1435,449.40 1436,449.40 1436,449.40 1437,449.40 1437,449.40 1438,449.40 1438,449.40 1439,449.40 1439,449.40 1440,449.40 1440,449.40 1441,449.40 1441,449.40 1442,449.40 1442,449.40 1443,449.40 1443,449.40 1444,449.40 1444,449.40 1445,449.40 1445,449.40 1446,449.40 1446,449.40 1447,449.40 1447,449.40 1448,449.40 1448,449.40 1449,449.40 1449,448.23 1450,448.23 1450,449.40 1451,449.40 1451,449.40 1452,449.40 1452,449.40 1453,449.40 1453,449.40 1454,449.40 1454,449.40 1455,449.40 1455,449.40 1456,449.40 1456,449.40 1457,449.40 1457,449.40 1458,449.40 1458,449.40 1459,449.40 1459,449.40 1460,449.40 1460,449.40 1461,449.40 1461,449.40 1462,449.40 1462,449.40 1463,449.40 1463,449.40 1464,449.40 1464,449.40 1465,449.40 1465,449.40 1466,449.40 1466,449.40 1467,449.40 1467,449.40 1468,449.40 1468,449.40 1469,449.40 1469,449.40 1470,449.40 1470,449.40 1471,449.40 1471,448.80 1472,448.80 1472,448.80 1473,448.80 1473,448.80 1474,448.80 1474,448.20 1475,448.20 1475,448.50 1476,448.50 1476,448.50 1477,448.50 1477,448.20 1478,448.20 1478,448.50 1479,448.50 1479,448.50 1480,448.50 1480,448.80 1481,448.80 1481,448.50 1482,448.50 1482,448.50 1483,448.50 1483,448.50 1484,448.50 1484,448.20 1485,448.20 1485,448.80 1486,448.80 1486,448.20 1487,448.20 1487,448.80 1488,448.80 1488,448.20 1489,448.20 1489,448.50 1490,448.50 1490,448.50 1491,448.50 1491,448.50 1492,448.50 1492,448.20 1493,448.20 1493,448.20 1494,448.20 1494,448.50 1495,448.50 1495,448.80 1496,448.80 1496,448.50 1497,448.50 1497,448.50 1498,448.50 1498,448.50 1499,448.50 1499,448.80 1500,448.80 1500,448.50 1501,448.50 1501,448.50 1502,448.50 1502,448.50 1503,448.50 1503,448.80 1504,448.80 1504,448.50 1505,448.50 1505,448.20 1506,448.20 1506,448.80 1507,448.80 1507,448.50 1508,448.50 1508,448.20 1509,448.20 1509,448.50 1510,448.50 1510,448.20 1511,448.20 1511,448.20 1512,448.20 1512,448.50 1513,448.50 1513,448.50 1514,448.50 1514,448.20 1515,448.20 1515,448.20 1516,448.20 1516,448.50 1517,448.50 1517,448.50 1518,448.50 1518,448.80 1519,448.80 1519,448.50 1520,448.50 1520,448.50 1521,448.50 1521,448.80 1522,448.80 1522,448.80 1523,448.80 1523,448.50 1524,448.50 1524,448.50 1525,448.50 1525,448.50 1526,448.50 1526,448.20 1527,448.20 1527,448.50 1528,448.50 1528,448.50 1529,448.50 1529,448.80 1530,448.80 1530,448.50 1531,448.50 1531,448.80 1532,448.80 1532,448.20 1533,448.20 1533,448.50 1534,448.50 1534,448.80 1535,448.80 1535,448.50 1536,448.50 1536,448.80 1537,448.80 1537,448.50 1538,448.50 1538,448.50 1539,448.50 1539,448.50 1540,448.50 1540,448.50 1541,448.50 1541,448.50 1542,448.50 1542,448.20 1543,448.20 1543,448.80 1544,448.80 1544,448.80 1545,448.80 1545,448.80 1546,448.80 1546,448.50 1547,448.50 1547,448.50 1548,448.50 1548,448.80 1549,448.80 1549,448.20 1550,448.20 1550,448.50 1551,448.50 1551,448.80 1552,448.80 1552,448.20 1553,448.20 1553,448.80 1554,448.80 1554,448.50 1555,448.50 1555,448.50 1556,448.50 1556,448.80 1557,448.80 1557,448.50 1558,448.50 1558,448.50 1559,448.50" fill="none" stroke="#b0a030" stroke-width="1"/><path d="M843.0,368.9 L1559.0,368.9" fill="none" stroke="#a85a3a" stroke-width="1.3"/><g stroke="rgba(204,204,220,0.11)" stroke-width="1"><line x1="928.5" y1="353.0" x2="928.5" y2="511.5"/><line x1="1018.5" y1="353.0" x2="1018.5" y2="511.5"/><line x1="1107.5" y1="353.0" x2="1107.5" y2="511.5"/><line x1="1197.5" y1="353.0" x2="1197.5" y2="511.5"/><line x1="1286.5" y1="353.0" x2="1286.5" y2="511.5"/><line x1="1375.5" y1="353.0" x2="1375.5" y2="511.5"/><line x1="1465.5" y1="353.0" x2="1465.5" y2="511.5"/><line x1="1554.5" y1="353.0" x2="1554.5" y2="511.5"/><line x1="843.0" y1="508.5" x2="1559.0" y2="508.5"/><line x1="843.0" y1="471.5" x2="1559.0" y2="471.5"/><line x1="843.0" y1="434.5" x2="1559.0" y2="434.5"/><line x1="843.0" y1="397.5" x2="1559.0" y2="397.5"/><line x1="843.0" y1="360.5" x2="1559.0" y2="360.5"/></g></svg><div class="lb" style="left:780px;width:57.8px;text-align:right;top:501.5px;letter-spacing:0.3px">0 B</div><div class="lb" style="left:780px;width:57.8px;text-align:right;top:464.4px;letter-spacing:0.3px">2 GiB</div><div class="lb" style="left:780px;width:57.8px;text-align:right;top:427.2px;letter-spacing:0.3px">4 GiB</div><div class="lb" style="left:780px;width:57.8px;text-align:right;top:390.1px;letter-spacing:0.3px">6 GiB</div><div class="lb" style="left:780px;width:57.8px;text-align:right;top:353.0px;letter-spacing:0.3px">8 GiB</div><div class="abs" style="left:0;top:510px;width:1567px;height:24px;overflow:hidden"><div class="lb xl" style="left:878.4px;width:100px;text-align:center;top:6px">07/05 18:00</div><div class="lb xl" style="left:967.8px;width:100px;text-align:center;top:6px">07/06 00:00</div><div class="lb xl" style="left:1057.2px;width:100px;text-align:center;top:6px">07/06 06:00</div><div class="lb xl" style="left:1146.6px;width:100px;text-align:center;top:6px">07/06 12:00</div><div class="lb xl" style="left:1236.0px;width:100px;text-align:center;top:6px">07/06 18:00</div><div class="lb xl" style="left:1325.4px;width:100px;text-align:center;top:6px">07/07 00:00</div><div class="lb xl" style="left:1414.9px;width:100px;text-align:center;top:6px">07/07 06:00</div><div class="lb xl" style="left:1504.3px;width:100px;text-align:center;top:6px">07/07 12:00</div></div><div class="abs" style="left:16.8px;top:542px;width:14px;height:4px;border-radius:2px;background:#eab839"></div><div class="lb" style="left:39.75px;top:536px">Busy System</div><div class="abs" style="left:123.7px;top:542px;width:14px;height:4px;border-radius:2px;background:#0a50a1"></div><div class="lb" style="left:146.5px;top:536px">Busy User</div><div class="abs" style="left:215px;top:542px;width:14px;height:4px;border-radius:2px;background:#9b1706"></div><div class="lb" style="left:237.2px;top:536px">Busy Iowait</div><div class="abs" style="left:313.6px;top:542px;width:14px;height:4px;border-radius:2px;background:#ff7f1e"></div><div class="lb" style="left:336.3px;top:536px">Busy IRQs</div><div class="abs" style="left:405px;top:542px;width:14px;height:4px;border-radius:2px;background:#6d1f62"></div><div class="lb" style="left:427.2px;top:536px">Busy Other</div><div class="abs" style="left:501px;top:542px;width:14px;height:4px;border-radius:2px;background:#7eb26d"></div><div class="lb" style="left:523.3px;top:536px">Idle</div><div class="abs" style="left:806.8px;top:542px;width:14px;height:4px;border-radius:2px;background:#e0f9d7"></div><div class="lb" style="left:829.5px;top:536px">RAM Total</div><div class="abs" style="left:897.7px;top:542px;width:14px;height:4px;border-radius:2px;background:#f2cc0c"></div><div class="lb" style="left:920.4px;top:536px">RAM Used</div><div class="abs" style="left:990.8px;top:542px;width:14px;height:4px;border-radius:2px;background:#052b51"></div><div class="lb" style="left:1013.5px;top:536px">RAM Cache + Buffer</div><div class="abs" style="left:1140.9px;top:542px;width:14px;height:4px;border-radius:2px;background:#7eb26d"></div><div class="lb" style="left:1163.3px;top:536px">RAM Free</div><div class="abs" style="left:1228.7px;top:542px;width:14px;height:4px;border-radius:2px;background:#bf1b00"></div><div class="lb" style="left:1251.7px;top:536px">SWAP Used</div></body></html>
